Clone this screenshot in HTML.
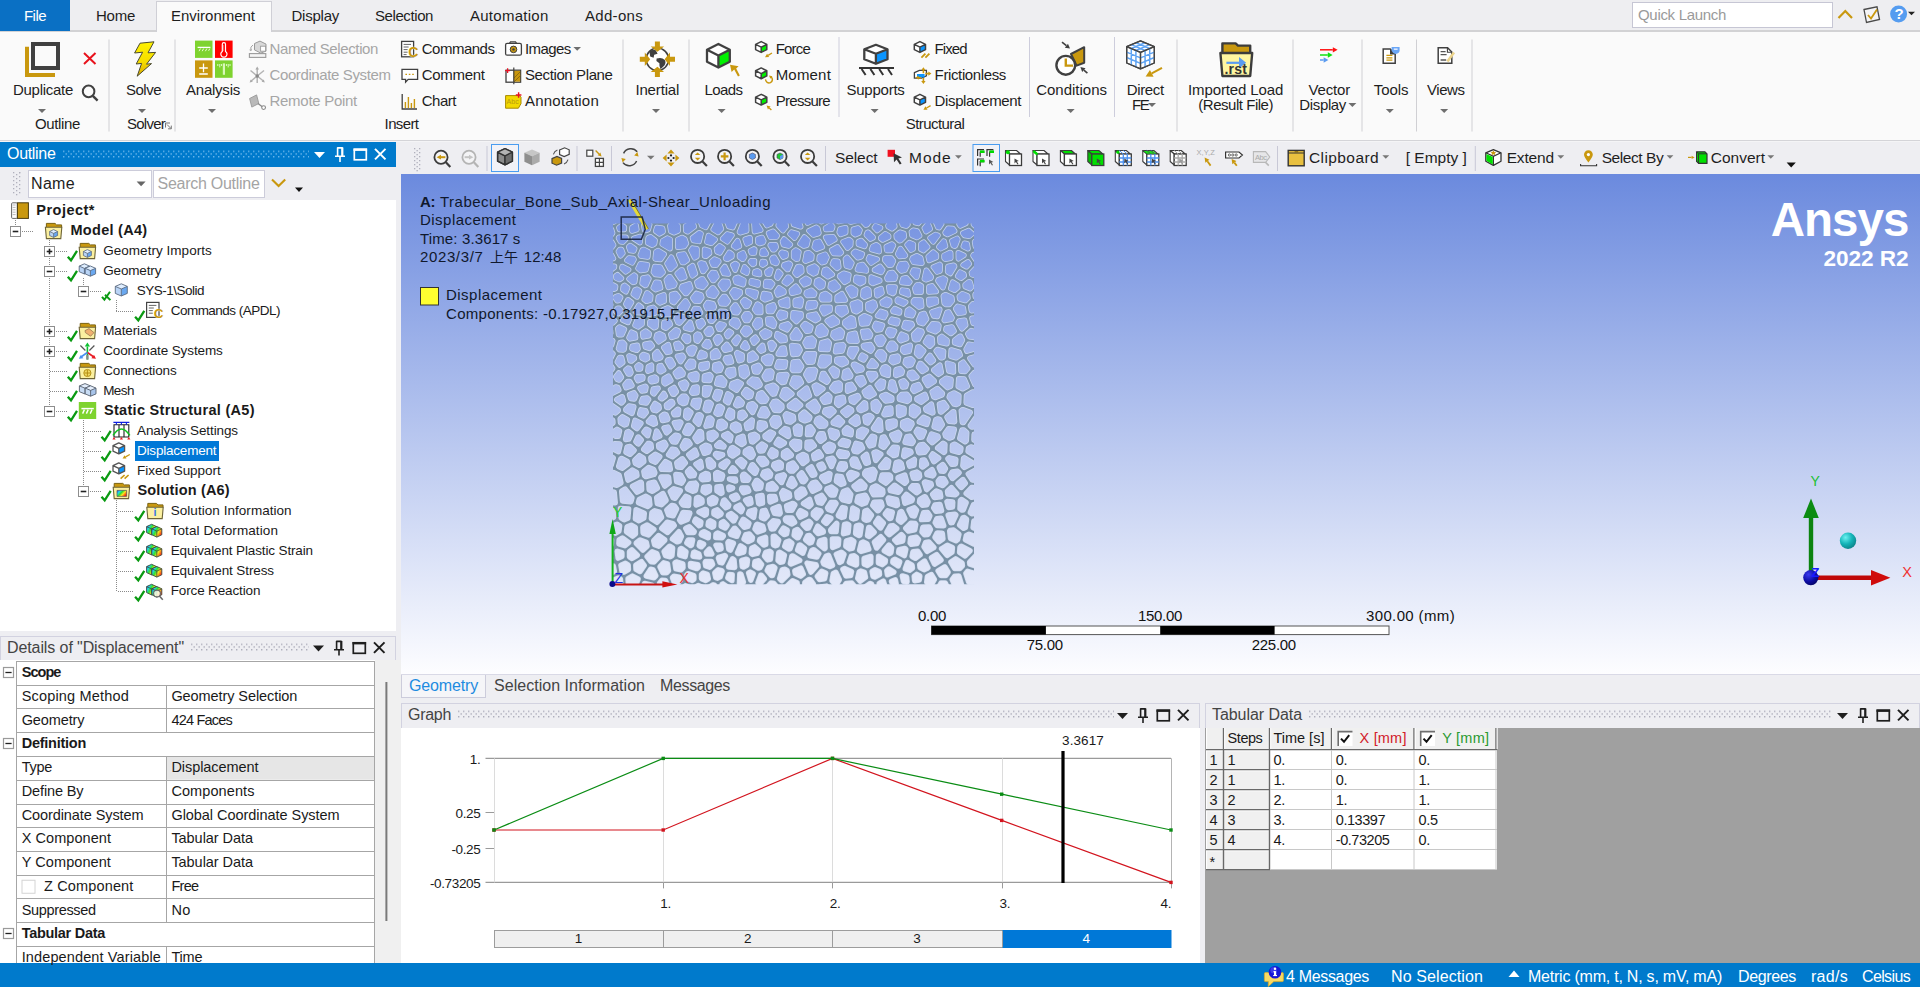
<!DOCTYPE html>
<html lang="en"><head><meta charset="utf-8"><title>Mechanical</title>
<style>
html,body{margin:0;padding:0;background:#eeeef2;}
body{width:1920px;height:987px;overflow:hidden;position:relative;font-family:"Liberation Sans","Noto Sans CJK TC",sans-serif;}
#app{position:absolute;left:0;top:0;width:1920px;height:987px;overflow:hidden;background:#eeeef2;}
.t{position:absolute;white-space:pre;margin:0;padding:0;}
.r{position:absolute;margin:0;padding:0;overflow:visible;}
</style></head><body><div id="app">
<div class="r" style="left:0px;top:0px;width:1920px;height:30px;background:#eeeef1;"></div>
<div class="r" style="left:0px;top:30px;width:1920px;height:2px;background:#d2d2d4;"></div>
<div class="r" style="left:0px;top:32px;width:1920px;height:108px;background:#fafafa;"></div>
<div class="r" style="left:0px;top:140px;width:1920px;height:1px;background:#d4d4d8;"></div>
<div class="r" style="left:0px;top:141px;width:1920px;height:1px;background:#f4f4f6;"></div>
<div class="r" style="left:0px;top:142px;width:396px;height:25px;background:#007acc;"></div>
<div class="r" style="left:0px;top:167px;width:396px;height:33px;background:#eeeef2;"></div>
<div class="r" style="left:0px;top:200px;width:396px;height:431px;background:#ffffff;"></div>
<div class="r" style="left:0px;top:631px;width:400px;height:5px;background:#eeeef2;"></div>
<div class="r" style="left:0px;top:636px;width:396px;height:25px;background:#eeeef2;border:1px solid #d2d2e0;box-sizing:border-box;border-bottom:none;"></div>
<div class="r" style="left:0px;top:660px;width:375px;height:303px;background:#ffffff;"></div>
<div class="r" style="left:375px;top:660px;width:26px;height:303px;background:#f0f0f0;"></div>
<div class="r" style="left:396px;top:142px;width:1524px;height:33px;background:#eeeef2;"></div>
<div class="r" style="left:401px;top:174px;width:1519px;height:500px;background:linear-gradient(to bottom,#6b8ade 0%,#fdfdff 100%);"></div>
<div class="r" style="left:401px;top:674px;width:1519px;height:30px;background:#eeeef2;"></div>
<div class="r" style="left:401px;top:674px;width:1519px;height:1px;background:#d9d9e6;"></div>
<div class="r" style="left:401px;top:703px;width:799px;height:25px;background:#eeeef2;border:1px solid #d2d2e0;box-sizing:border-box;border-bottom:none;"></div>
<div class="r" style="left:401px;top:728px;width:799px;height:235px;background:#ffffff;"></div>
<div class="r" style="left:1205px;top:703px;width:715px;height:25px;background:#eeeef2;border:1px solid #d2d2e0;box-sizing:border-box;border-bottom:none;"></div>
<div class="r" style="left:1205px;top:728px;width:715px;height:235px;background:#a0a0a0;"></div>
<div class="r" style="left:0px;top:963px;width:1920px;height:24px;background:#007acc;"></div>
<div class="t" style="left:7.00px;top:143.95px;font-size:16px;line-height:19px;color:#ffffff;letter-spacing:-0.314px;">Outline</div>
<svg class="r" style="left:63px;top:149.5px;" width="246" height="8" viewBox="0 0 246 8"><defs><pattern id="dp1" x="0" y="0.60" width="5" height="5.4" patternUnits="userSpaceOnUse"><rect x="0" y="0" width="1.4" height="1.4" fill="#6ab6ec"/><rect x="2.5" y="2.7" width="1.4" height="1.4" fill="#6ab6ec"/></pattern></defs><rect x="0" y="0" width="246" height="8" fill="url(#dp1)"/></svg>
<svg class="r" style="left:314px;top:0px;pointer-events:none;" width="80" height="1000" viewBox="0 0 80 1000"><path d="M0 152 h11 l-5.5 6z" fill="#ffffff"/><g stroke="#ffffff" fill="none" stroke-width="1.6"><path d="M23.6 147.5 v8.5 M28.2 147.5 v8.5 M23.2 147.9 h5.4 M21 156.3 h10 M26 156.5 v5.5"/></g><rect x="27.4" y="147.5" width="2" height="8.5" fill="#ffffff"/><rect x="40.3" y="149.3" width="12" height="10.5" fill="none" stroke="#ffffff" stroke-width="1.7"/><rect x="39.5" y="148.5" width="13.6" height="2.4" fill="#ffffff"/><path d="M61 148.9 l10.5 10.5 M71.5 148.9 l-10.5 10.5" stroke="#ffffff" stroke-width="2" fill="none"/></svg>
<div class="t" style="left:7.00px;top:637.95px;font-size:16px;line-height:19px;color:#444444;letter-spacing:-0.097px;">Details of "Displacement"</div>
<svg class="r" style="left:191px;top:643px;" width="118" height="8" viewBox="0 0 118 8"><defs><pattern id="dp2" x="0" y="0.60" width="5" height="5.4" patternUnits="userSpaceOnUse"><rect x="0" y="0" width="1.4" height="1.4" fill="#adadbb"/><rect x="2.5" y="2.7" width="1.4" height="1.4" fill="#adadbb"/></pattern></defs><rect x="0" y="0" width="118" height="8" fill="url(#dp2)"/></svg>
<svg class="r" style="left:313px;top:0px;pointer-events:none;" width="80" height="1000" viewBox="0 0 80 1000"><path d="M0 645.5 h11 l-5.5 6z" fill="#1e1e1e"/><g stroke="#1e1e1e" fill="none" stroke-width="1.6"><path d="M23.6 641 v8.5 M28.2 641 v8.5 M23.2 641.4 h5.4 M21 649.8 h10 M26 650 v5.5"/></g><rect x="27.4" y="641" width="2" height="8.5" fill="#1e1e1e"/><rect x="40.3" y="642.8" width="12" height="10.5" fill="none" stroke="#1e1e1e" stroke-width="1.7"/><rect x="39.5" y="642" width="13.6" height="2.4" fill="#1e1e1e"/><path d="M61 642.4 l10.5 10.5 M71.5 642.4 l-10.5 10.5" stroke="#1e1e1e" stroke-width="2" fill="none"/></svg>
<div class="t" style="left:408.00px;top:705.45px;font-size:16px;line-height:19px;color:#444444;letter-spacing:-0.294px;">Graph</div>
<svg class="r" style="left:458px;top:710px;" width="656" height="8" viewBox="0 0 656 8"><defs><pattern id="dp3" x="0" y="0.60" width="5" height="5.4" patternUnits="userSpaceOnUse"><rect x="0" y="0" width="1.4" height="1.4" fill="#adadbb"/><rect x="2.5" y="2.7" width="1.4" height="1.4" fill="#adadbb"/></pattern></defs><rect x="0" y="0" width="656" height="8" fill="url(#dp3)"/></svg>
<svg class="r" style="left:1117px;top:0px;pointer-events:none;" width="80" height="1000" viewBox="0 0 80 1000"><path d="M0 713 h11 l-5.5 6z" fill="#1e1e1e"/><g stroke="#1e1e1e" fill="none" stroke-width="1.6"><path d="M23.6 708.5 v8.5 M28.2 708.5 v8.5 M23.2 708.9 h5.4 M21 717.3 h10 M26 717.5 v5.5"/></g><rect x="27.4" y="708.5" width="2" height="8.5" fill="#1e1e1e"/><rect x="40.3" y="710.3" width="12" height="10.5" fill="none" stroke="#1e1e1e" stroke-width="1.7"/><rect x="39.5" y="709.5" width="13.6" height="2.4" fill="#1e1e1e"/><path d="M61 709.9 l10.5 10.5 M71.5 709.9 l-10.5 10.5" stroke="#1e1e1e" stroke-width="2" fill="none"/></svg>
<div class="t" style="left:1212.00px;top:705.45px;font-size:16px;line-height:19px;color:#444444;letter-spacing:-0.060px;">Tabular Data</div>
<svg class="r" style="left:1309px;top:710px;" width="522" height="8" viewBox="0 0 522 8"><defs><pattern id="dp4" x="0" y="0.60" width="5" height="5.4" patternUnits="userSpaceOnUse"><rect x="0" y="0" width="1.4" height="1.4" fill="#adadbb"/><rect x="2.5" y="2.7" width="1.4" height="1.4" fill="#adadbb"/></pattern></defs><rect x="0" y="0" width="522" height="8" fill="url(#dp4)"/></svg>
<svg class="r" style="left:1837px;top:0px;pointer-events:none;" width="80" height="1000" viewBox="0 0 80 1000"><path d="M0 713 h11 l-5.5 6z" fill="#1e1e1e"/><g stroke="#1e1e1e" fill="none" stroke-width="1.6"><path d="M23.6 708.5 v8.5 M28.2 708.5 v8.5 M23.2 708.9 h5.4 M21 717.3 h10 M26 717.5 v5.5"/></g><rect x="27.4" y="708.5" width="2" height="8.5" fill="#1e1e1e"/><rect x="40.3" y="710.3" width="12" height="10.5" fill="none" stroke="#1e1e1e" stroke-width="1.7"/><rect x="39.5" y="709.5" width="13.6" height="2.4" fill="#1e1e1e"/><path d="M61 709.9 l10.5 10.5 M71.5 709.9 l-10.5 10.5" stroke="#1e1e1e" stroke-width="2" fill="none"/></svg>
<div class="r" style="left:401px;top:675px;width:85px;height:23px;background:#f5f5f8;border:1px solid #ccccdb;box-sizing:border-box;border-top:none;"></div>
<div class="t" style="left:409.00px;top:675.95px;font-size:16px;line-height:19px;color:#1e8be0;letter-spacing:-0.155px;">Geometry</div>
<div class="t" style="left:494.00px;top:675.95px;font-size:16px;line-height:19px;color:#444444;letter-spacing:0.033px;">Selection Information</div>
<div class="t" style="left:660.00px;top:675.95px;font-size:16px;line-height:19px;color:#444444;letter-spacing:-0.365px;">Messages</div>
<div class="t" style="left:1286.00px;top:966.95px;font-size:16px;line-height:19px;color:#ffffff;letter-spacing:-0.327px;">4 Messages</div>
<div class="t" style="left:1391.00px;top:966.95px;font-size:16px;line-height:19px;color:#ffffff;letter-spacing:0.107px;">No Selection</div>
<div class="t" style="left:1528.00px;top:966.95px;font-size:16px;line-height:19px;color:#ffffff;letter-spacing:-0.225px;">Metric (mm, t, N, s, mV, mA)</div>
<div class="t" style="left:1738.00px;top:966.95px;font-size:16px;line-height:19px;color:#ffffff;letter-spacing:-0.354px;">Degrees</div>
<div class="t" style="left:1811.00px;top:966.95px;font-size:16px;line-height:19px;color:#ffffff;letter-spacing:0.286px;">rad/s</div>
<div class="t" style="left:1862.00px;top:966.95px;font-size:16px;line-height:19px;color:#ffffff;letter-spacing:-0.637px;">Celsius</div>
<svg class="r" style="left:1508px;top:969px;" width="12" height="10" viewBox="0 0 12 10"><path d="M0.5 8 L6 1.5 L11.5 8z" fill="#fff"/></svg>
<svg class="r" style="left:1260px;top:963px;" width="28" height="24" viewBox="1260 963 28 24"><path d="M1265.6 972.6 h16.6 q1.2 0 1.2 1.2 v6.6 q0 1.2-1.2 1.2 h-8.4 l-5.6 5 l0.2-5 h-2.8 q-1.2 0-1.2-1.2 v-6.6 q0-1.2 1.2-1.2z" fill="#f7d964" stroke="#d8ac2c" stroke-width="0.8"/><circle cx="1275" cy="972.2" r="6.3" fill="#1616d6"/><circle cx="1273.6" cy="970.2" r="3.2" fill="#4a4af0" fill-opacity="0.7"/><rect x="1274" y="971.2" width="2.2" height="4.6" fill="#fff"/><rect x="1273.2" y="975" width="3.8" height="1.1" fill="#fff"/><rect x="1273.4" y="971.2" width="2" height="1" fill="#fff"/><circle cx="1275" cy="968.8" r="1.25" fill="#fff"/></svg>
<div class="r" style="left:0px;top:0px;width:70px;height:30.5px;background:#0a70c4;"></div>
<div class="r" style="left:156px;top:1px;width:116px;height:31px;background:#fafafa;border:1px solid #cfcfd6;box-sizing:border-box;border-bottom:none;"></div>
<svg class="r" style="left:0px;top:0px;" width="1920" height="141" viewBox="0 0 1920 141"><path d="M1838.5 18 L1845.3 11 L1852 18" fill="none" stroke="#c9980f" stroke-width="2.2"/><path d="M1864 9.5 L1877 6.8 L1879.5 19.5 L1866.5 22.5 Z" fill="#f4f4f6" stroke="#4a4a4a" stroke-width="1.3"/><path d="M1868 15 l3 3.5 l6-9" fill="none" stroke="#c9980f" stroke-width="1.8"/><circle cx="1898.6" cy="14" r="8.5" fill="#559cf0"/><path d="M1908.00 11.75 h7 l-3.5 3.5 z" fill="#222"/><rect x="108.5" y="39.5" width="1" height="92" fill="#d0d0d4"/><rect x="174.5" y="39.5" width="1" height="92" fill="#d0d0d4"/><rect x="622.5" y="39.5" width="1" height="92" fill="#d0d0d4"/><rect x="688.5" y="39.5" width="1" height="92" fill="#d0d0d4"/><rect x="1176.5" y="39.5" width="1" height="92" fill="#d0d0d4"/><rect x="1292.5" y="39.5" width="1" height="92" fill="#d0d0d4"/><rect x="1361.5" y="39.5" width="1" height="92" fill="#d0d0d4"/><rect x="1416" y="39.5" width="1" height="92" fill="#d0d0d4"/><rect x="1471.5" y="39.5" width="1" height="92" fill="#d0d0d4"/><rect x="838.5" y="37" width="1" height="80" fill="#cdcddc"/><rect x="1029" y="37" width="1" height="80" fill="#cdcddc"/><rect x="1114" y="37" width="1" height="80" fill="#cdcddc"/><path d="M27 46.8 V75 H55" fill="none" stroke="#c9980f" stroke-width="4"/><rect x="33" y="44" width="25" height="24" fill="#fafafa" stroke="#404040" stroke-width="4"/><path d="M38.00 109.00 h8 l-4 4 z" fill="#6e6e6e"/><path d="M84 53 L95.5 64 M95.5 53 L84 64" stroke="#e8121c" stroke-width="2"/><circle cx="88.6" cy="91.4" r="5.8" fill="none" stroke="#404040" stroke-width="2"/><path d="M92.8 95.8 L97.6 100.6" stroke="#404040" stroke-width="2.4"/><defs><linearGradient id="bolt" x1="0" y1="0" x2="0" y2="1"><stop offset="0" stop-color="#fff200"/><stop offset="0.6" stop-color="#f5dc00"/><stop offset="1" stop-color="#d9a800"/></linearGradient></defs><path d="M140 43.2 L154 41.8 L148 52.8 L155.6 52.4 L146.5 64.2 L151.5 63.6 L137.2 76.2 L141.6 63.4 L136.2 64 L142.6 52.2 L134.6 53 Z" fill="url(#bolt)" stroke="#4a4a30" stroke-width="1"/><path d="M138.00 109.00 h8 l-4 4 z" fill="#6e6e6e"/><path d="M165.5 123 h4.5 M165.5 123 v4.5 M167 124.5 l4 4 M171.3 125.6 v3.2 h-3.2" stroke="#777" stroke-width="1" fill="none"/><rect x="195" y="40.6" width="17.5" height="17.3" fill="#7ed32f"/><rect x="215" y="40.6" width="17.6" height="17.3" fill="#ff0000"/><rect x="195" y="60.4" width="17.5" height="17.4" fill="#c9980f"/><rect x="215" y="60.4" width="17.6" height="17.4" fill="#7ed32f"/><path d="M197.6 47.4 H210.4" stroke="#fff" stroke-width="1.3"/><path d="M200.4 48.6 l-1.4 2.6 M203.6 48.6 l-1.4 2.6 M206.8 48.6 l-1.4 2.6 M209.8 48.6 l-1.2 2.2" stroke="#e8ffd0" stroke-width="1"/><path d="M222.3 44.2 a1.6 1.6 0 0 1 3.2 0 v7.2 a3.1 3.1 0 1 1 -3.2 0 Z" fill="none" stroke="#fff" stroke-width="1.2"/><path d="M222.5 46 h1.3 M222.5 48 h1.3 M222.5 50 h1.3" stroke="#fff" stroke-width="0.8"/><path d="M199.2 68 h8.6 M203.5 63.6 v8.6 M199.2 74 h8.6" stroke="#fff" stroke-width="1.3"/><path d="M223.9 63.4 v11.4" stroke="#d8f8b8" stroke-width="2.2"/><path d="M217.8 64 v2 M219.8 64 v3.4 M221.6 64 v2 M226.4 64 v2 M228.2 64 v3.4 M230 64 v2" stroke="#e8ffd8" stroke-width="0.9"/><path d="M208.00 109.00 h8 l-4 4 z" fill="#6e6e6e"/><path d="M254.5 43.5 l5.5-2.4 l6 3 v7 l-5.2 2 l-6.3-3.2 Z" fill="#d8d8d8" stroke="#9a9a9a" stroke-width="1"/><rect x="260.6" y="46.2" width="5" height="5" fill="#fff" stroke="#9a9a9a" stroke-width="0.9"/><rect x="249.4" y="53.6" width="16.4" height="3.8" fill="#f4f4f4" stroke="#9a9a9a" stroke-width="1.1"/><path d="M253 45 q-3 1.5 -2.2 5.5 l-1.2-.6 M250.8 50.5 l1.2-1" stroke="#9a9a9a" stroke-width="0.9" fill="none"/><g stroke="#b4b4b4" stroke-width="1.5"><path d="M257.2 68 V83 M250.5 70.5 L264 81.5 M264 70.5 L250.5 81.5"/></g><circle cx="257.2" cy="76" r="1.8" fill="#888"/><path d="M257.2 66.6 l-1.8 3 h3.6z M249.6 82.4 l3.2-.6 l-2-2.2z M264.8 82.4 l-3.2-.6 l2-2.2z" fill="#aaa"/><path d="M249.6 98.5 l7-3.6 l2.2 8.6 l-7 3.6 Z" fill="#b9b9b9" stroke="#999" stroke-width="0.9"/><path d="M258 103.5 l4.6 3.4" stroke="#888" stroke-width="1.2"/><circle cx="263.6" cy="107.6" r="1.9" fill="#fff" stroke="#888" stroke-width="1.1"/><rect x="401.6" y="41.4" width="12" height="15.4" fill="#fff" stroke="#404040" stroke-width="1.3"/><path d="M403.6 44.4 h7.4 M403.6 47 h5 M403.6 49.6 h4 M403.6 52.2 h4 M403.6 54.6 h3" stroke="#666" stroke-width="1"/><path d="M402 69.4 h15.6 v10 h-9.4 l-2.6 2.8 v-2.8 h-3.6 Z" fill="#fff" stroke="#404040" stroke-width="1.3"/><path d="M405.4 74.4 h1.6 M408.8 74.4 h1.6 M412.2 74.4 h1.6" stroke="#c9980f" stroke-width="1.3"/><path d="M402.2 94 V109 H417" fill="none" stroke="#404040" stroke-width="1.3"/><path d="M405.4 108 v-6 M408.4 108 v-11 M411.4 108 v-5 M414.4 108 v-9" stroke="#c9980f" stroke-width="1.4"/><rect x="505.6" y="43.4" width="15.8" height="11.8" rx="1.5" fill="#fff" stroke="#404040" stroke-width="1.3"/><path d="M509.5 43.4 l1-1.6 h5 l1 1.6" fill="none" stroke="#404040" stroke-width="1.2"/><circle cx="513.5" cy="49.4" r="3.3" fill="#c9980f" stroke="#404040" stroke-width="1"/><circle cx="513.5" cy="49.4" r="1.2" fill="#404040"/><path d="M573.40 46.90 h7.6 l-3.8 3.8 z" fill="#6e6e6e"/><rect x="506" y="70.2" width="14.6" height="12" fill="#fff" stroke="#404040" stroke-width="1.3"/><path d="M513.6 70.8 h6.6 v10.8 h-6.6z" fill="#c9980f"/><path d="M514 78 l6-6 M514 82 l6.4-6.4" stroke="#8a6a10" stroke-width="0.9"/><path d="M513.8 67.4 v16.8" stroke="#404040" stroke-width="1.2"/><path d="M505.2 70.6 h4.8 M507.6 68.2 v4.8" stroke="#e81123" stroke-width="1.3"/><path d="M505.6 95.6 h14 l1.4 1.6 v6.4 l-2.6 4.6 h-12.8 Z" fill="#f2d800" stroke="#a88a00" stroke-width="1"/><path d="M518.6 92.2 v5.6 M515.8 95 h5.6" stroke="#e81123" stroke-width="1.4"/><circle cx="657.4" cy="59.3" r="11.2" fill="#fff" stroke="#404040" stroke-width="1.5"/><path d="M649.4 51.6 q3-2.6 6.4-1.4 l1.8 3.6 l-3.4 1 l-.6 3 l-3.4-1.2 Z M656.6 58.6 q5-1.8 8.2 1.4 q1.6 2.4-.4 5.4 l-3.8 3.8 q-1.6-3.2-1.2-6 l-3-2.2 Z" fill="#404040"/><path d="M654.9 41.4 h5 v5 h4.2 l-6.7 5.4 l-6.7-5.4 h4.2 Z" fill="#c9980f"/><path d="M654.9 77 h5 v-5 h4.2 l-6.7-5.2 l-6.7 5.2 h4.2 Z" fill="#c9980f"/><path d="M639.8 56.8 v5 h5 v4.2 l5.4-6.7 l-5.4-6.7 v4.2 Z" fill="#c9980f"/><path d="M675 56.8 v5 h-5 v4.2 l-5.4-6.7 l5.4-6.7 v4.2 Z" fill="#c9980f"/><path d="M652.00 109.00 h8 l-4 4 z" fill="#6e6e6e"/><path d="M718.40 44.00 L729.80 49.80 L729.80 61.80 L718.40 67.60 L707.00 61.80 L707.00 49.80 Z" fill="#ffffff"/><path d="M718.40 55.60 L729.80 49.80 L729.80 61.80 L718.40 67.60 Z" fill="#00f000"/><path d="M718.40 44.00 L729.80 49.80 L729.80 61.80 L718.40 67.60 L707.00 61.80 L707.00 49.80 Z M707.00 49.80 L718.40 55.60 M729.80 49.80 L718.40 55.60 M718.40 55.60 L718.40 67.60" fill="none" stroke="#404040" stroke-width="2.3" stroke-linejoin="round"/><path d="M730 64.8 l8.6 1.4 l-2.4 2.2 l3.6 7.2 l-1.8 1 l-3.8-7 l-2.6 2.4 Z" fill="#c9980f"/><path d="M717.60 109.00 h8 l-4 4 z" fill="#6e6e6e"/><path d="M761.20 41.60 L766.80 44.40 L766.80 49.60 L761.20 52.40 L755.60 49.60 L755.60 44.40 Z" fill="#ffffff"/><path d="M761.20 47.20 L766.80 44.40 L766.80 49.60 L761.20 52.40 Z" fill="#00f000"/><path d="M761.20 41.60 L766.80 44.40 L766.80 49.60 L761.20 52.40 L755.60 49.60 L755.60 44.40 Z M755.60 44.40 L761.20 47.20 M766.80 44.40 L761.20 47.20 M761.20 47.20 L761.20 52.40" fill="none" stroke="#404040" stroke-width="1.5" stroke-linejoin="round"/><path d="M761.20 67.95 L766.80 70.75 L766.80 75.95 L761.20 78.75 L755.60 75.95 L755.60 70.75 Z" fill="#ffffff"/><path d="M761.20 73.55 L766.80 70.75 L766.80 75.95 L761.20 78.75 Z" fill="#00f000"/><path d="M761.20 67.95 L766.80 70.75 L766.80 75.95 L761.20 78.75 L755.60 75.95 L755.60 70.75 Z M755.60 70.75 L761.20 73.55 M766.80 70.75 L761.20 73.55 M761.20 73.55 L761.20 78.75" fill="none" stroke="#404040" stroke-width="1.5" stroke-linejoin="round"/><path d="M761.20 94.30 L766.80 97.10 L766.80 102.30 L761.20 105.10 L755.60 102.30 L755.60 97.10 Z" fill="#ffffff"/><path d="M761.20 99.90 L766.80 97.10 L766.80 102.30 L761.20 105.10 Z" fill="#00f000"/><path d="M761.20 94.30 L766.80 97.10 L766.80 102.30 L761.20 105.10 L755.60 102.30 L755.60 97.10 Z M755.60 97.10 L761.20 99.90 M766.80 97.10 L761.20 99.90 M761.20 99.90 L761.20 105.10" fill="none" stroke="#404040" stroke-width="1.5" stroke-linejoin="round"/><path d="M772.00 53.00 L768.09 55.35" stroke="#c9980f" stroke-width="1.3" fill="none"/><path d="M765.00 57.20 L767.07 53.65 L769.11 57.05 Z" fill="#c9980f"/><path d="M765.6 79.4 a3.4 3.4 0 1 0 5.4-2.6" fill="none" stroke="#c9980f" stroke-width="1.5"/><path d="M769 75.4 l3.4.8 l-2 2.6z" fill="#c9980f"/><path d="M771.40 110.00 L769.25 108.03" stroke="#c9980f" stroke-width="1.3" fill="none"/><path d="M766.60 105.60 L770.59 106.57 L767.92 109.49 Z" fill="#c9980f"/><path d="M875.90 44.80 L887.50 49.30 L887.50 59.30 L875.90 63.80 L864.30 59.30 L864.30 49.30 Z" fill="#ffffff"/><path d="M875.90 53.80 L887.50 49.30 L887.50 59.30 L875.90 63.80 Z" fill="#0a95ff"/><path d="M875.90 44.80 L887.50 49.30 L887.50 59.30 L875.90 63.80 L864.30 59.30 L864.30 49.30 Z M864.30 49.30 L875.90 53.80 M887.50 49.30 L875.90 53.80 M875.90 53.80 L875.90 63.80" fill="none" stroke="#404040" stroke-width="2.3" stroke-linejoin="round"/><path d="M859 68 H894" stroke="#333" stroke-width="2.2"/><path d="M861.6 69 l4 6 M870.4 69 l4 6 M879.2 69 l4 6 M888 69 l4 6" stroke="#333" stroke-width="2"/><path d="M870.60 109.00 h8 l-4 4 z" fill="#6e6e6e"/><path d="M919.90 41.60 L925.50 44.40 L925.50 49.60 L919.90 52.40 L914.30 49.60 L914.30 44.40 Z" fill="#ffffff"/><path d="M919.90 47.20 L925.50 44.40 L925.50 49.60 L919.90 52.40 Z" fill="#0a95ff"/><path d="M919.90 41.60 L925.50 44.40 L925.50 49.60 L919.90 52.40 L914.30 49.60 L914.30 44.40 Z M914.30 44.40 L919.90 47.20 M925.50 44.40 L919.90 47.20 M919.90 47.20 L919.90 52.40" fill="none" stroke="#404040" stroke-width="1.5" stroke-linejoin="round"/><path d="M921.4 57.6 l4-4 M925.4 57.6 l4-4" stroke="#c9980f" stroke-width="1.8"/><path d="M914.4 72.6 l5-2.2 h7 v5.4 l-5 2.4 h-7 Z" fill="#fff" stroke="#404040" stroke-width="1.3"/><path d="M917 74 h7.6 v3.4 h-7.6z" fill="#0a95ff"/><path d="M923.4 67.2 l2.2 3 h-1.4 v3 h-1.6 v-3 h-1.4 Z M923.4 84 l2.2-3 h-1.4 v-3 h-1.6 v3 h-1.4 Z M931.4 73.6 l-3-2.2 v1.4 h-3 v1.6 h3 v1.4 Z M915.6 77.6 l3-2 v1.3 h2.6 v1.5 h-2.6 v1.3 Z" fill="#c9980f"/><path d="M919.90 94.30 L925.50 97.10 L925.50 102.30 L919.90 105.10 L914.30 102.30 L914.30 97.10 Z" fill="#ffffff"/><path d="M919.90 99.90 L925.50 97.10 L925.50 102.30 L919.90 105.10 Z" fill="#0a95ff"/><path d="M919.90 94.30 L925.50 97.10 L925.50 102.30 L919.90 105.10 L914.30 102.30 L914.30 97.10 Z M914.30 97.10 L919.90 99.90 M925.50 97.10 L919.90 99.90 M919.90 99.90 L919.90 105.10" fill="none" stroke="#404040" stroke-width="1.5" stroke-linejoin="round"/><path d="M930.60 105.60 L926.51 107.99" stroke="#c9980f" stroke-width="1.3" fill="none"/><path d="M923.40 109.80 L925.51 106.28 L927.51 109.70 Z" fill="#c9980f"/><path d="M1071 54 L1084.2 47.2 V62.8 L1076.6 65.6 Z" fill="#c9980f" stroke="#404040" stroke-width="2" stroke-linejoin="round"/><circle cx="1065.8" cy="65.3" r="9.4" fill="#fff" stroke="#404040" stroke-width="2.4"/><path d="M1065.8 58.6 V65.6 H1073" fill="none" stroke="#c9980f" stroke-width="2.4"/><path d="M1062.00 42.20 L1066.41 45.73" stroke="#404040" stroke-width="1.6" fill="none"/><path d="M1070.00 48.60 L1064.83 47.70 L1067.99 43.75 Z" fill="#404040"/><path d="M1087.40 73.20 L1083.84 70.05" stroke="#404040" stroke-width="1.6" fill="none"/><path d="M1080.40 67.00 L1085.52 68.16 L1082.17 71.94 Z" fill="#404040"/><path d="M1066.70 109.00 h8 l-4 4 z" fill="#6e6e6e"/><path d="M1140.50 40.80 L1154.30 46.60 L1154.30 63.00 L1140.50 68.80 L1126.70 63.00 L1126.70 46.60 Z" fill="#ffffff"/><path d="M1140.50 40.80 L1154.30 46.60 L1154.30 63.00 L1140.50 68.80 L1126.70 63.00 L1126.70 46.60 Z M1126.70 46.60 L1140.50 52.40 M1154.30 46.60 L1140.50 52.40 M1140.50 52.40 L1140.50 68.80" fill="none" stroke="#444" stroke-width="1.3" stroke-linejoin="round"/><path d="M1131.30 48.53 L1131.30 64.93 M1126.70 52.07 L1140.50 57.87 M1145.10 50.47 L1145.10 66.87 M1140.50 57.87 L1154.30 52.07 M1131.30 44.67 L1145.10 50.47 M1131.30 48.53 L1145.10 42.73 M1135.90 50.47 L1135.90 66.87 M1126.70 57.53 L1140.50 63.33 M1149.70 48.53 L1149.70 64.93 M1140.50 63.33 L1154.30 57.53 M1135.90 42.73 L1149.70 48.53 M1135.90 50.47 L1149.70 44.67 " stroke="#5ea3f3" stroke-width="1.5" fill="none"/><path d="M1140.50 40.80 L1154.30 46.60 L1154.30 63.00 L1140.50 68.80 L1126.70 63.00 L1126.70 46.60 Z" fill="none"/><path d="M1140.50 40.80 L1154.30 46.60 L1154.30 63.00 L1140.50 68.80 L1126.70 63.00 L1126.70 46.60 Z M1126.70 46.60 L1140.50 52.40 M1154.30 46.60 L1140.50 52.40 M1140.50 52.40 L1140.50 68.80" fill="none" stroke="#444" stroke-width="1.3" stroke-linejoin="round"/><path d="M1162.00 67.80 L1151.77 73.29" stroke="#c9980f" stroke-width="2" fill="none"/><path d="M1145.60 76.60 L1149.95 69.90 L1153.59 76.68 Z" fill="#c9980f"/><path d="M1148.00 103.00 h8 l-4 4 z" fill="#6e6e6e"/><path d="M1222.4 52.8 V43.4 H1235.6 L1238 45.6 H1250.2 V52.8" fill="#c9980f" stroke="#3c3c3c" stroke-width="2.4" stroke-linejoin="round"/><path d="M1220.4 53 H1252.2 L1250.2 76 H1222.4 Z" fill="#fff6a0" stroke="#3c3c3c" stroke-width="2.4" stroke-linejoin="round"/><path d="M1226.4 62.8 H1240" stroke="#5a9bf0" stroke-width="2.2"/><path d="M1239 57 L1246.2 62.8 L1239 68.6 Z" fill="#5a9bf0"/><path d="M1320.00 49.80 L1332.80 49.80" stroke="#ff1010" stroke-width="1.5" fill="none"/><path d="M1337.60 49.80 L1332.80 52.44 L1332.80 47.16 Z" fill="#ff1010"/><path d="M1320.00 55.00 L1327.80 55.00" stroke="#10e010" stroke-width="1.5" fill="none"/><path d="M1332.60 55.00 L1327.80 57.64 L1327.80 52.36 Z" fill="#10e010"/><path d="M1320.00 60.00 L1323.60 60.00" stroke="#5a9bf0" stroke-width="1.5" fill="none"/><path d="M1328.40 60.00 L1323.60 62.64 L1323.60 57.36 Z" fill="#5a9bf0"/><path d="M1348.40 103.00 h8 l-4 4 z" fill="#6e6e6e"/><path d="M1383.2 49 h7 l5 5 v9.2 h-12 Z" fill="#fff" stroke="#404040" stroke-width="1.5"/><path d="M1390 49 v5.4 h5.4 Z" fill="#404040"/><path d="M1386.4 55.4 h6 M1386.4 57.8 h6 M1386.4 60.2 h6" stroke="#c9980f" stroke-width="1.2"/><path d="M1391.6 47 h8 v3.6 q0 2.6-4 3.4 q-1.6-.4-2.6-1.2 l-1.4-2 Z" fill="#6aa6f6"/><path d="M1393.8 48.4 h3.8 v1.6 h-3.8z" fill="#dce9ff"/><path d="M1385.80 109.00 h8 l-4 4 z" fill="#6e6e6e"/><path d="M1438.2 47.8 h9.4 l4.2 4.2 v11.2 h-13.6 Z" fill="#fff" stroke="#404040" stroke-width="1.5"/><path d="M1447.4 48 v4.2 h4.2" fill="none" stroke="#404040" stroke-width="1.1"/><path d="M1440.6 51.6 h5 M1440.6 54.6 h6 M1440.6 60 h5.6" stroke="#555" stroke-width="1.3"/><path d="M1454 52.6 L1447.4 61.6" stroke="#ecd48c" stroke-width="2.6"/><path d="M1440.20 109.00 h8 l-4 4 z" fill="#6e6e6e"/></svg>
<div class="t" style="left:24.00px;top:6.80px;font-size:15px;line-height:18px;color:#ffffff;letter-spacing:-0.543px;">File</div>
<div class="t" style="left:96.00px;top:6.80px;font-size:15px;line-height:18px;color:#1e1e1e;letter-spacing:-0.253px;">Home</div>
<div class="t" style="left:171.00px;top:6.80px;font-size:15px;line-height:18px;color:#1e1e1e;letter-spacing:-0.019px;">Environment</div>
<div class="t" style="left:291.50px;top:6.80px;font-size:15px;line-height:18px;color:#1e1e1e;letter-spacing:-0.241px;">Display</div>
<div class="t" style="left:375.00px;top:6.80px;font-size:15px;line-height:18px;color:#1e1e1e;letter-spacing:-0.412px;">Selection</div>
<div class="t" style="left:470.00px;top:6.80px;font-size:15px;line-height:18px;color:#1e1e1e;letter-spacing:0.262px;">Automation</div>
<div class="t" style="left:585.00px;top:6.80px;font-size:15px;line-height:18px;color:#1e1e1e;letter-spacing:0.304px;">Add-ons</div>
<div class="r" style="left:1632px;top:2px;width:200.5px;height:26px;background:#ffffff;border:1px solid #c6c6d4;box-sizing:border-box;"></div>
<div class="t" style="left:1638.00px;top:6.20px;font-size:15px;line-height:18px;color:#9a9a9a;letter-spacing:-0.310px;">Quick Launch</div>
<div class="t" style="left:13.00px;top:81.20px;font-size:15px;line-height:18px;color:#1e1e1e;letter-spacing:-0.282px;">Duplicate</div>
<div class="t" style="left:35.00px;top:115.10px;font-size:15px;line-height:18px;color:#1e1e1e;letter-spacing:-0.361px;">Outline</div>
<div class="t" style="left:126.00px;top:81.20px;font-size:15px;line-height:18px;color:#1e1e1e;letter-spacing:-0.505px;">Solve</div>
<div class="t" style="left:127.00px;top:115.10px;font-size:15px;line-height:18px;color:#1e1e1e;letter-spacing:-0.753px;">Solver</div>
<div class="t" style="left:186.00px;top:81.20px;font-size:15px;line-height:18px;color:#1e1e1e;letter-spacing:-0.232px;">Analysis</div>
<div class="t" style="left:269.50px;top:39.60px;font-size:15px;line-height:18px;color:#a6a6a6;letter-spacing:-0.382px;">Named Selection</div>
<div class="t" style="left:269.50px;top:66.00px;font-size:15px;line-height:18px;color:#a6a6a6;letter-spacing:-0.386px;">Coordinate System</div>
<div class="t" style="left:269.50px;top:92.30px;font-size:15px;line-height:18px;color:#a6a6a6;letter-spacing:-0.282px;">Remote Point</div>
<div class="t" style="left:408.20px;top:44.25px;font-size:14px;line-height:17px;color:#c9980f;font-weight:bold;text-shadow:0 0 1px #f9f9f9,0 0 1px #f9f9f9;">C</div>
<div class="t" style="left:421.80px;top:39.60px;font-size:15px;line-height:18px;color:#1e1e1e;letter-spacing:-0.512px;">Commands</div>
<div class="t" style="left:421.80px;top:66.00px;font-size:15px;line-height:18px;color:#1e1e1e;letter-spacing:-0.303px;">Comment</div>
<div class="t" style="left:421.80px;top:92.30px;font-size:15px;line-height:18px;color:#1e1e1e;letter-spacing:-0.536px;">Chart</div>
<div class="t" style="left:525.00px;top:39.60px;font-size:15px;line-height:18px;color:#1e1e1e;letter-spacing:-0.598px;">Images</div>
<div class="t" style="left:525.00px;top:66.00px;font-size:15px;line-height:18px;color:#1e1e1e;letter-spacing:-0.390px;">Section Plane</div>
<div class="t" style="left:506.60px;top:97.97px;font-size:7px;line-height:8px;color:#b89a10;">Abc</div>
<div class="t" style="left:525.00px;top:92.30px;font-size:15px;line-height:18px;color:#1e1e1e;letter-spacing:0.227px;">Annotation</div>
<div class="t" style="left:384.60px;top:115.10px;font-size:15px;line-height:18px;color:#1e1e1e;letter-spacing:-0.636px;">Insert</div>
<div class="t" style="left:635.40px;top:81.20px;font-size:15px;line-height:18px;color:#1e1e1e;letter-spacing:-0.153px;">Inertial</div>
<div class="t" style="left:704.60px;top:81.20px;font-size:15px;line-height:18px;color:#1e1e1e;letter-spacing:-0.594px;">Loads</div>
<div class="t" style="left:775.70px;top:39.60px;font-size:15px;line-height:18px;color:#1e1e1e;letter-spacing:-0.809px;">Force</div>
<div class="t" style="left:775.70px;top:65.95px;font-size:15px;line-height:18px;color:#1e1e1e;letter-spacing:0.186px;">Moment</div>
<div class="t" style="left:775.70px;top:92.30px;font-size:15px;line-height:18px;color:#1e1e1e;letter-spacing:-0.716px;">Pressure</div>
<div class="t" style="left:846.50px;top:81.20px;font-size:15px;line-height:18px;color:#1e1e1e;letter-spacing:-0.242px;">Supports</div>
<div class="t" style="left:934.60px;top:39.60px;font-size:15px;line-height:18px;color:#1e1e1e;letter-spacing:-0.916px;">Fixed</div>
<div class="t" style="left:934.60px;top:66.00px;font-size:15px;line-height:18px;color:#1e1e1e;letter-spacing:-0.371px;">Frictionless</div>
<div class="t" style="left:934.60px;top:92.30px;font-size:15px;line-height:18px;color:#1e1e1e;letter-spacing:-0.373px;">Displacement</div>
<div class="t" style="left:905.70px;top:115.10px;font-size:15px;line-height:18px;color:#1e1e1e;letter-spacing:-0.559px;">Structural</div>
<div class="t" style="left:1036.20px;top:81.20px;font-size:15px;line-height:18px;color:#1e1e1e;letter-spacing:-0.008px;">Conditions</div>
<div class="t" style="left:1126.70px;top:81.20px;font-size:15px;line-height:18px;color:#1e1e1e;letter-spacing:-0.345px;">Direct</div>
<div class="t" style="left:1132.00px;top:96.10px;font-size:15px;line-height:18px;color:#1e1e1e;letter-spacing:-1.350px;">FE</div>
<div class="t" style="left:1224.40px;top:60.85px;font-size:14px;line-height:17px;color:#333;font-weight:bold;letter-spacing:0.253px;font-family:"Liberation Serif",serif;">.rst</div>
<div class="t" style="left:1188.00px;top:81.20px;font-size:15px;line-height:18px;color:#1e1e1e;letter-spacing:-0.110px;">Imported Load</div>
<div class="t" style="left:1198.30px;top:96.10px;font-size:15px;line-height:18px;color:#1e1e1e;letter-spacing:-0.473px;">(Result File)</div>
<div class="t" style="left:1308.50px;top:81.20px;font-size:15px;line-height:18px;color:#1e1e1e;letter-spacing:-0.171px;">Vector</div>
<div class="t" style="left:1299.30px;top:96.10px;font-size:15px;line-height:18px;color:#1e1e1e;letter-spacing:-0.355px;">Display</div>
<div class="t" style="left:1373.80px;top:81.20px;font-size:15px;line-height:18px;color:#1e1e1e;letter-spacing:-0.084px;">Tools</div>
<div class="t" style="left:1427.00px;top:81.20px;font-size:15px;line-height:18px;color:#1e1e1e;letter-spacing:-0.429px;">Views</div>
<div class="t" style="left:1894.60px;top:5.40px;font-size:15px;line-height:18px;color:#ffffff;font-weight:bold;">?</div>
<div class="r" style="left:135px;top:440.5px;width:84px;height:20px;background:#0078d7;"></div>
<svg class="r" style="left:0px;top:0px;" width="400" height="640" viewBox="0 0 400 640"><defs><linearGradient id="rb" x1="0" y1="0" x2="1" y2="0.6"><stop offset="0" stop-color="#2040ff"/><stop offset="0.28" stop-color="#20d8e8"/><stop offset="0.5" stop-color="#30e030"/><stop offset="0.72" stop-color="#f4e820"/><stop offset="1" stop-color="#ff3010"/></linearGradient></defs><path d="M15.5 220.0 V226.0" stroke="#8a8a8a" stroke-width="1" stroke-dasharray="1 1"/><path d="M22.0 231.5 H34.0" stroke="#8a8a8a" stroke-width="1" stroke-dasharray="1 1"/><path d="M49.5 240.0 V406.0" stroke="#8a8a8a" stroke-width="1" stroke-dasharray="1 1"/><path d="M56.0 251.5 H68.0" stroke="#8a8a8a" stroke-width="1" stroke-dasharray="1 1"/><path d="M56.0 271.5 H68.0" stroke="#8a8a8a" stroke-width="1" stroke-dasharray="1 1"/><path d="M56.0 331.5 H68.0" stroke="#8a8a8a" stroke-width="1" stroke-dasharray="1 1"/><path d="M56.0 351.5 H68.0" stroke="#8a8a8a" stroke-width="1" stroke-dasharray="1 1"/><path d="M56.0 411.5 H68.0" stroke="#8a8a8a" stroke-width="1" stroke-dasharray="1 1"/><path d="M50.0 371.5 H68.0" stroke="#8a8a8a" stroke-width="1" stroke-dasharray="1 1"/><path d="M50.0 391.5 H68.0" stroke="#8a8a8a" stroke-width="1" stroke-dasharray="1 1"/><path d="M83.5 278.0 V286.0" stroke="#8a8a8a" stroke-width="1" stroke-dasharray="1 1"/><path d="M90.0 291.5 H101.0" stroke="#8a8a8a" stroke-width="1" stroke-dasharray="1 1"/><path d="M116.5 300.0 V312.0" stroke="#8a8a8a" stroke-width="1" stroke-dasharray="1 1"/><path d="M116.0 311.5 H134.0" stroke="#8a8a8a" stroke-width="1" stroke-dasharray="1 1"/><path d="M83.5 420.0 V486.0" stroke="#8a8a8a" stroke-width="1" stroke-dasharray="1 1"/><path d="M84.0 431.5 H101.0" stroke="#8a8a8a" stroke-width="1" stroke-dasharray="1 1"/><path d="M84.0 451.5 H101.0" stroke="#8a8a8a" stroke-width="1" stroke-dasharray="1 1"/><path d="M84.0 471.5 H101.0" stroke="#8a8a8a" stroke-width="1" stroke-dasharray="1 1"/><path d="M90.0 491.5 H101.0" stroke="#8a8a8a" stroke-width="1" stroke-dasharray="1 1"/><path d="M116.5 500.0 V592.0" stroke="#8a8a8a" stroke-width="1" stroke-dasharray="1 1"/><path d="M118.0 511.5 H134.0" stroke="#8a8a8a" stroke-width="1" stroke-dasharray="1 1"/><path d="M118.0 531.5 H134.0" stroke="#8a8a8a" stroke-width="1" stroke-dasharray="1 1"/><path d="M118.0 551.5 H134.0" stroke="#8a8a8a" stroke-width="1" stroke-dasharray="1 1"/><path d="M118.0 571.5 H134.0" stroke="#8a8a8a" stroke-width="1" stroke-dasharray="1 1"/><path d="M118.0 591.5 H134.0" stroke="#8a8a8a" stroke-width="1" stroke-dasharray="1 1"/><rect x="10.50" y="226.50" width="10" height="10" fill="#fff" stroke="#8e8e8e" stroke-width="1"/><path d="M12.70 231.50 h5.6" stroke="#222" stroke-width="1.6"/><rect x="44.50" y="246.50" width="10" height="10" fill="#fff" stroke="#8e8e8e" stroke-width="1"/><path d="M46.70 251.50 h5.6" stroke="#222" stroke-width="1.6"/><path d="M49.50 248.70 v5.6" stroke="#222" stroke-width="1.6"/><rect x="44.50" y="266.50" width="10" height="10" fill="#fff" stroke="#8e8e8e" stroke-width="1"/><path d="M46.70 271.50 h5.6" stroke="#222" stroke-width="1.6"/><rect x="44.50" y="326.50" width="10" height="10" fill="#fff" stroke="#8e8e8e" stroke-width="1"/><path d="M46.70 331.50 h5.6" stroke="#222" stroke-width="1.6"/><path d="M49.50 328.70 v5.6" stroke="#222" stroke-width="1.6"/><rect x="44.50" y="346.50" width="10" height="10" fill="#fff" stroke="#8e8e8e" stroke-width="1"/><path d="M46.70 351.50 h5.6" stroke="#222" stroke-width="1.6"/><path d="M49.50 348.70 v5.6" stroke="#222" stroke-width="1.6"/><rect x="44.50" y="406.50" width="10" height="10" fill="#fff" stroke="#8e8e8e" stroke-width="1"/><path d="M46.70 411.50 h5.6" stroke="#222" stroke-width="1.6"/><rect x="78.50" y="286.50" width="10" height="10" fill="#fff" stroke="#8e8e8e" stroke-width="1"/><path d="M80.70 291.50 h5.6" stroke="#222" stroke-width="1.6"/><rect x="78.50" y="486.50" width="10" height="10" fill="#fff" stroke="#8e8e8e" stroke-width="1"/><path d="M80.70 491.50 h5.6" stroke="#222" stroke-width="1.6"/><path d="M67.80 256.70 l3.2 3.6 l6-9.4" fill="none" stroke="#0a9a12" stroke-width="2.3" stroke-linejoin="miter"/><path d="M67.80 276.70 l3.2 3.6 l6-9.4" fill="none" stroke="#0a9a12" stroke-width="2.3" stroke-linejoin="miter"/><path d="M67.80 336.70 l3.2 3.6 l6-9.4" fill="none" stroke="#0a9a12" stroke-width="2.3" stroke-linejoin="miter"/><path d="M67.80 356.70 l3.2 3.6 l6-9.4" fill="none" stroke="#0a9a12" stroke-width="2.3" stroke-linejoin="miter"/><path d="M67.80 376.70 l3.2 3.6 l6-9.4" fill="none" stroke="#0a9a12" stroke-width="2.3" stroke-linejoin="miter"/><path d="M67.80 396.70 l3.2 3.6 l6-9.4" fill="none" stroke="#0a9a12" stroke-width="2.3" stroke-linejoin="miter"/><path d="M67.80 416.70 l3.2 3.6 l6-9.4" fill="none" stroke="#0a9a12" stroke-width="2.3" stroke-linejoin="miter"/><path d="M101.50 436.70 l3.2 3.6 l6-9.4" fill="none" stroke="#0a9a12" stroke-width="2.3" stroke-linejoin="miter"/><path d="M101.50 456.70 l3.2 3.6 l6-9.4" fill="none" stroke="#0a9a12" stroke-width="2.3" stroke-linejoin="miter"/><path d="M101.50 476.70 l3.2 3.6 l6-9.4" fill="none" stroke="#0a9a12" stroke-width="2.3" stroke-linejoin="miter"/><path d="M101.50 496.70 l3.2 3.6 l6-9.4" fill="none" stroke="#0a9a12" stroke-width="2.3" stroke-linejoin="miter"/><path d="M135.10 316.70 l3.2 3.6 l6-9.4" fill="none" stroke="#0a9a12" stroke-width="2.3" stroke-linejoin="miter"/><path d="M135.10 516.70 l3.2 3.6 l6-9.4" fill="none" stroke="#0a9a12" stroke-width="2.3" stroke-linejoin="miter"/><path d="M135.10 536.70 l3.2 3.6 l6-9.4" fill="none" stroke="#0a9a12" stroke-width="2.3" stroke-linejoin="miter"/><path d="M135.10 556.70 l3.2 3.6 l6-9.4" fill="none" stroke="#0a9a12" stroke-width="2.3" stroke-linejoin="miter"/><path d="M135.10 576.70 l3.2 3.6 l6-9.4" fill="none" stroke="#0a9a12" stroke-width="2.3" stroke-linejoin="miter"/><path d="M135.10 596.70 l3.2 3.6 l6-9.4" fill="none" stroke="#0a9a12" stroke-width="2.3" stroke-linejoin="miter"/><path d="M102 296.90 l2.4 2.8 l5.6-8" fill="none" stroke="#0a9a12" stroke-width="2"/><path d="M105 294.70 l5.4 5.4" stroke="#0a9a12" stroke-width="2"/><rect x="11.6" y="202.8" width="5.8" height="15.6" rx="1" fill="#fff" stroke="#666" stroke-width="1"/><path d="M12.6 205 h3 M12.6 207.4 h3 M12.6 209.8 h3 M12.6 212.2 h3 M12.6 214.6 h3" stroke="#bbb" stroke-width="1"/><rect x="17.4" y="202.8" width="11" height="15.6" fill="#c9980f" stroke="#4a3c10" stroke-width="1"/><path d="M46.40 227.40 v-4 h8.6 l1.6 1.5 h5 v2.5" fill="#c9980f" stroke="#7a6210" stroke-width="1"/><path d="M45.40 227.20 h16.4 l-1 11.4 h-14.4 Z" fill="#fbf0a0" stroke="#6e6436" stroke-width="1.1"/><path d="M53.60 229.60 L57.60 231.50 L53.60 233.40 L49.60 231.50 Z" fill="#dfeeff"/><path d="M49.60 231.50 L53.60 233.40 L53.60 237.40 L49.60 235.50 Z" fill="#b9d4f6"/><path d="M57.60 231.50 L53.60 233.40 L53.60 237.40 L57.60 235.50 Z" fill="#6aa8f0"/><path d="M53.60 229.60 L57.60 231.50 L57.60 235.50 L53.60 237.40 L49.60 235.50 L49.60 231.50 Z M49.60 231.50 L53.60 233.40 L57.60 231.50 M53.60 233.40 L53.60 237.40" fill="none" stroke="#5a6a80" stroke-width="0.8" stroke-linejoin="round"/><path d="M80.20 247.40 v-4 h8.6 l1.6 1.5 h5 v2.5" fill="#c9980f" stroke="#7a6210" stroke-width="1"/><path d="M79.20 247.20 h16.4 l-1 11.4 h-14.4 Z" fill="#fbf0a0" stroke="#6e6436" stroke-width="1.1"/><path d="M87.40 249.60 L91.40 251.50 L87.40 253.40 L83.40 251.50 Z" fill="#dfeeff"/><path d="M83.40 251.50 L87.40 253.40 L87.40 257.40 L83.40 255.50 Z" fill="#b9d4f6"/><path d="M91.40 251.50 L87.40 253.40 L87.40 257.40 L91.40 255.50 Z" fill="#6aa8f0"/><path d="M87.40 249.60 L91.40 251.50 L91.40 255.50 L87.40 257.40 L83.40 255.50 L83.40 251.50 Z M83.40 251.50 L87.40 253.40 L91.40 251.50 M87.40 253.40 L87.40 257.40" fill="none" stroke="#5a6a80" stroke-width="0.8" stroke-linejoin="round"/><path d="M84.40 263.80 L89.60 266.10 L84.40 268.40 L79.20 266.10 Z" fill="#dfeeff"/><path d="M79.20 266.10 L84.40 268.40 L84.40 274.00 L79.20 271.70 Z" fill="#b9d4f6"/><path d="M89.60 266.10 L84.40 268.40 L84.40 274.00 L89.60 271.70 Z" fill="#6aa8f0"/><path d="M84.40 263.80 L89.60 266.10 L89.60 271.70 L84.40 274.00 L79.20 271.70 L79.20 266.10 Z M79.20 266.10 L84.40 268.40 L89.60 266.10 M84.40 268.40 L84.40 274.00" fill="none" stroke="#5a6a80" stroke-width="0.9" stroke-linejoin="round"/><path d="M90.40 266.00 L95.60 268.30 L90.40 270.60 L85.20 268.30 Z" fill="#dfeeff"/><path d="M85.20 268.30 L90.40 270.60 L90.40 276.20 L85.20 273.90 Z" fill="#b9d4f6"/><path d="M95.60 268.30 L90.40 270.60 L90.40 276.20 L95.60 273.90 Z" fill="#6aa8f0"/><path d="M90.40 266.00 L95.60 268.30 L95.60 273.90 L90.40 276.20 L85.20 273.90 L85.20 268.30 Z M85.20 268.30 L90.40 270.60 L95.60 268.30 M90.40 270.60 L90.40 276.20" fill="none" stroke="#5a6a80" stroke-width="0.9" stroke-linejoin="round"/><path d="M121.30 283.80 L127.30 286.40 L121.30 289.00 L115.30 286.40 Z" fill="#dfeeff"/><path d="M115.30 286.40 L121.30 289.00 L121.30 296.00 L115.30 293.40 Z" fill="#b9d4f6"/><path d="M127.30 286.40 L121.30 289.00 L121.30 296.00 L127.30 293.40 Z" fill="#6aa8f0"/><path d="M121.30 283.80 L127.30 286.40 L127.30 293.40 L121.30 296.00 L115.30 293.40 L115.30 286.40 Z M115.30 286.40 L121.30 289.00 L127.30 286.40 M121.30 289.00 L121.30 296.00" fill="none" stroke="#5a6a80" stroke-width="0.9" stroke-linejoin="round"/><rect x="146.6" y="302.4" width="12.4" height="15" fill="#fff" stroke="#444" stroke-width="1.2"/><path d="M148.8 305.4 h7.6 M148.8 308 h5 M148.8 310.6 h4 M148.8 313.2 h4" stroke="#666" stroke-width="1"/><path d="M80.20 327.40 v-4 h8.6 l1.6 1.5 h5 v2.5" fill="#c9980f" stroke="#7a6210" stroke-width="1"/><path d="M79.20 327.20 h16.4 l-1 11.4 h-14.4 Z" fill="#fbf0a0" stroke="#6e6436" stroke-width="1.1"/><path d="M85 330.6 l4-2 l5 4 l-3.4 3.6 l-5.2-3.6Z" fill="#f0b070" stroke="#9a7a50" stroke-width="0.8"/><path d="M87.4 346.5 V359.5" stroke="#0cc030" stroke-width="1.6"/><path d="M87.4 342.5 l-2.6 4 h5.2z" fill="#0cc030"/><path d="M87.4 352.5 L94.6 357.5" stroke="#e81c24" stroke-width="1.6"/><path d="M96 358.7 l-4.6-.4 l2.6-3.4z" fill="#e81c24"/><path d="M87.4 352.5 L80.2 357.5" stroke="#4a90f0" stroke-width="1.6"/><path d="M78.8 358.7 l4.6-.4 l-2.6-3.4z" fill="#4a90f0"/><path d="M80.4 345.5 l5 5 M94.4 345.5 l-5 5" stroke="#555" stroke-width="1.2"/><rect x="86.3" y="355.1" width="2.2" height="4.5" fill="#888"/><path d="M80.20 367.40 v-4 h8.6 l1.6 1.5 h5 v2.5" fill="#c9980f" stroke="#7a6210" stroke-width="1"/><path d="M79.20 367.20 h16.4 l-1 11.4 h-14.4 Z" fill="#fbf0a0" stroke="#6e6436" stroke-width="1.1"/><circle cx="87.4" cy="373" r="3.6" fill="#f0d860" stroke="#b08a10" stroke-width="0.9"/><path d="M84.4 373 h6 M87.4 370 v6" stroke="#b08a10" stroke-width="0.9"/><path d="M85.00 383.60 L90.60 385.90 L85.00 388.20 L79.40 385.90 Z" fill="#e4eefc"/><path d="M79.40 385.90 L85.00 388.20 L85.00 394.00 L79.40 391.70 Z" fill="#c8dcf4"/><path d="M90.60 385.90 L85.00 388.20 L85.00 394.00 L90.60 391.70 Z" fill="#a8c4ea"/><path d="M85.00 383.60 L90.60 385.90 L90.60 391.70 L85.00 394.00 L79.40 391.70 L79.40 385.90 Z M79.40 385.90 L85.00 388.20 L90.60 385.90 M85.00 388.20 L85.00 394.00" fill="none" stroke="#56606e" stroke-width="0.9" stroke-linejoin="round"/><path d="M90.60 385.80 L96.00 388.10 L90.60 390.40 L85.20 388.10 Z" fill="#e4eefc"/><path d="M85.20 388.10 L90.60 390.40 L90.60 396.20 L85.20 393.90 Z" fill="#c8dcf4"/><path d="M96.00 388.10 L90.60 390.40 L90.60 396.20 L96.00 393.90 Z" fill="#a8c4ea"/><path d="M90.60 385.80 L96.00 388.10 L96.00 393.90 L90.60 396.20 L85.20 393.90 L85.20 388.10 Z M85.20 388.10 L90.60 390.40 L96.00 388.10 M90.60 390.40 L90.60 396.20" fill="none" stroke="#56606e" stroke-width="0.9" stroke-linejoin="round"/><rect x="78.8" y="402" width="17.4" height="17" fill="#7ed32f"/><path d="M81.4 408.6 h12.4" stroke="#fff" stroke-width="1.5"/><path d="M84.4 409.6 l-1.8 4 M88.2 409.6 l-1.8 4 M92 409.6 l-1.8 4" stroke="#fff" stroke-width="1.4"/><path d="M114 424.8 h14.8 v12.2 h-14.8z M119 424.8 v12.2 M124 424.8 v12.2" fill="#fff" stroke="#222" stroke-width="1.1"/><path d="M113 435.4 q8.4-13 16.8 0" fill="none" stroke="#10c020" stroke-width="1.5"/><path d="M113.4 422.4 h16 M116.4 422.4 v2.4 M121.4 422.4 v2.4 M126.4 422.4 v2.4" stroke="#1020e0" stroke-width="1.1"/><path d="M114 437 l-1.6 2.4 h3.2z M121.4 437 l-1.6 2.4 h3.2z M128.8 437 l-1.6 2.4 h3.2z" fill="#e81c24"/><path d="M118.80 442.90 L124.60 445.60 L124.60 451.20 L118.80 453.90 L113.00 451.20 L113.00 445.60 Z" fill="#ffffff"/><path d="M118.80 448.30 L124.60 445.60 L124.60 451.20 L118.80 453.90 Z" fill="#0a95ff"/><path d="M118.80 442.90 L124.60 445.60 L124.60 451.20 L118.80 453.90 L113.00 451.20 L113.00 445.60 Z M113.00 445.60 L118.80 448.30 M124.60 445.60 L118.80 448.30 M118.80 448.30 L118.80 453.90" fill="none" stroke="#555" stroke-width="1.3" stroke-linejoin="round"/><path d="M118.80 462.90 L124.60 465.60 L124.60 471.20 L118.80 473.90 L113.00 471.20 L113.00 465.60 Z" fill="#ffffff"/><path d="M118.80 468.30 L124.60 465.60 L124.60 471.20 L118.80 473.90 Z" fill="#0a95ff"/><path d="M118.80 462.90 L124.60 465.60 L124.60 471.20 L118.80 473.90 L113.00 471.20 L113.00 465.60 Z M113.00 465.60 L118.80 468.30 M124.60 465.60 L118.80 468.30 M118.80 468.30 L118.80 473.90" fill="none" stroke="#555" stroke-width="1.3" stroke-linejoin="round"/><path d="M129.80 454.40 L125.54 456.89" stroke="#c9980f" stroke-width="1.2" fill="none"/><path d="M122.60 458.60 L124.59 455.27 L126.48 458.50 Z" fill="#c9980f"/><path d="M120.6 478.6 l4-3.6 M124.6 478.6 l4-3.6" stroke="#c9980f" stroke-width="1.6"/><path d="M114.20 487.40 v-4 h8.6 l1.6 1.5 h5 v2.5" fill="#c9980f" stroke="#7a6210" stroke-width="1"/><path d="M113.20 487.20 h16.4 l-1 11.4 h-14.4 Z" fill="#fbf0a0" stroke="#6e6436" stroke-width="1.1"/><path d="M117 490.4 h9.6 v6 h-9.6z" fill="url(#rb)" stroke="#555" stroke-width="0.7"/><path d="M147.80 507.40 v-4 h8.6 l1.6 1.5 h5 v2.5" fill="#c9980f" stroke="#7a6210" stroke-width="1"/><path d="M146.80 507.20 h16.4 l-1 11.4 h-14.4 Z" fill="#fbf0a0" stroke="#6e6436" stroke-width="1.1"/><path d="M151.60 524.30 L156.60 526.60 L156.60 532.60 L151.60 534.90 L146.60 532.60 L146.60 526.60 Z" fill="url(#rb)" stroke="#3c4a3c" stroke-width="0.9" stroke-linejoin="round"/><path d="M146.60 526.60 L151.60 528.90 L156.60 526.60 M151.60 528.90 L151.60 534.90" fill="none" stroke="#3c4a3c" stroke-width="0.8"/><path d="M156.80 526.50 L161.80 528.80 L161.80 534.80 L156.80 537.10 L151.80 534.80 L151.80 528.80 Z" fill="url(#rb)" stroke="#3c4a3c" stroke-width="0.9" stroke-linejoin="round"/><path d="M151.80 528.80 L156.80 531.10 L161.80 528.80 M156.80 531.10 L156.80 537.10" fill="none" stroke="#3c4a3c" stroke-width="0.8"/><path d="M151.60 544.30 L156.60 546.60 L156.60 552.60 L151.60 554.90 L146.60 552.60 L146.60 546.60 Z" fill="url(#rb)" stroke="#3c4a3c" stroke-width="0.9" stroke-linejoin="round"/><path d="M146.60 546.60 L151.60 548.90 L156.60 546.60 M151.60 548.90 L151.60 554.90" fill="none" stroke="#3c4a3c" stroke-width="0.8"/><path d="M156.80 546.50 L161.80 548.80 L161.80 554.80 L156.80 557.10 L151.80 554.80 L151.80 548.80 Z" fill="url(#rb)" stroke="#3c4a3c" stroke-width="0.9" stroke-linejoin="round"/><path d="M151.80 548.80 L156.80 551.10 L161.80 548.80 M156.80 551.10 L156.80 557.10" fill="none" stroke="#3c4a3c" stroke-width="0.8"/><path d="M151.60 564.30 L156.60 566.60 L156.60 572.60 L151.60 574.90 L146.60 572.60 L146.60 566.60 Z" fill="url(#rb)" stroke="#3c4a3c" stroke-width="0.9" stroke-linejoin="round"/><path d="M146.60 566.60 L151.60 568.90 L156.60 566.60 M151.60 568.90 L151.60 574.90" fill="none" stroke="#3c4a3c" stroke-width="0.8"/><path d="M156.80 566.50 L161.80 568.80 L161.80 574.80 L156.80 577.10 L151.80 574.80 L151.80 568.80 Z" fill="url(#rb)" stroke="#3c4a3c" stroke-width="0.9" stroke-linejoin="round"/><path d="M151.80 568.80 L156.80 571.10 L161.80 568.80 M156.80 571.10 L156.80 577.10" fill="none" stroke="#3c4a3c" stroke-width="0.8"/><path d="M151.60 584.30 L156.60 586.60 L156.60 592.60 L151.60 594.90 L146.60 592.60 L146.60 586.60 Z" fill="url(#rb)" stroke="#3c4a3c" stroke-width="0.9" stroke-linejoin="round"/><path d="M146.60 586.60 L151.60 588.90 L156.60 586.60 M151.60 588.90 L151.60 594.90" fill="none" stroke="#3c4a3c" stroke-width="0.8"/><path d="M156.80 586.50 L161.80 588.80 L161.80 594.80 L156.80 597.10 L151.80 594.80 L151.80 588.80 Z" fill="url(#rb)" stroke="#3c4a3c" stroke-width="0.9" stroke-linejoin="round"/><path d="M151.80 588.80 L156.80 591.10 L161.80 588.80 M156.80 591.10 L156.80 597.10" fill="none" stroke="#3c4a3c" stroke-width="0.8"/><circle cx="157" cy="593.5" r="3.4" fill="#fff" fill-opacity="0.8" stroke="#666" stroke-width="1.1"/><path d="M159.4 596.1 l3.4 3.6" stroke="#666" stroke-width="1.5"/></svg>
<div class="t" style="left:36.30px;top:202.07px;font-size:14.5px;line-height:17px;color:#1a1a1a;font-weight:bold;letter-spacing:0.487px;">Project*</div>
<div class="t" style="left:70.50px;top:222.07px;font-size:14.5px;line-height:17px;color:#1a1a1a;font-weight:bold;letter-spacing:0.279px;">Model (A4)</div>
<div class="t" style="left:103.20px;top:242.92px;font-size:13.5px;line-height:16px;color:#1a1a1a;letter-spacing:0.036px;">Geometry Imports</div>
<div class="t" style="left:103.20px;top:262.92px;font-size:13.5px;line-height:16px;color:#1a1a1a;letter-spacing:-0.146px;">Geometry</div>
<div class="t" style="left:136.80px;top:282.92px;font-size:13.5px;line-height:16px;color:#1a1a1a;letter-spacing:-0.508px;">SYS-1\Solid</div>
<div class="t" style="left:170.70px;top:302.92px;font-size:13.5px;line-height:16px;color:#1a1a1a;letter-spacing:-0.516px;">Commands (APDL)</div>
<div class="t" style="left:103.20px;top:322.92px;font-size:13.5px;line-height:16px;color:#1a1a1a;letter-spacing:-0.130px;">Materials</div>
<div class="t" style="left:103.20px;top:342.92px;font-size:13.5px;line-height:16px;color:#1a1a1a;letter-spacing:-0.114px;">Coordinate Systems</div>
<div class="t" style="left:103.20px;top:362.92px;font-size:13.5px;line-height:16px;color:#1a1a1a;letter-spacing:-0.159px;">Connections</div>
<div class="t" style="left:103.20px;top:382.92px;font-size:13.5px;line-height:16px;color:#1a1a1a;letter-spacing:-0.578px;">Mesh</div>
<div class="t" style="left:104.00px;top:402.07px;font-size:14.5px;line-height:17px;color:#1a1a1a;font-weight:bold;letter-spacing:0.299px;">Static Structural (A5)</div>
<div class="t" style="left:137.00px;top:422.92px;font-size:13.5px;line-height:16px;color:#1a1a1a;letter-spacing:-0.106px;">Analysis Settings</div>
<div class="t" style="left:137.00px;top:442.92px;font-size:13.5px;line-height:16px;color:#ffffff;letter-spacing:-0.199px;">Displacement</div>
<div class="t" style="left:137.00px;top:462.92px;font-size:13.5px;line-height:16px;color:#1a1a1a;letter-spacing:-0.019px;">Fixed Support</div>
<div class="t" style="left:137.50px;top:482.07px;font-size:14.5px;line-height:17px;color:#1a1a1a;font-weight:bold;letter-spacing:0.161px;">Solution (A6)</div>
<div class="t" style="left:170.70px;top:502.92px;font-size:13.5px;line-height:16px;color:#1a1a1a;letter-spacing:0.046px;">Solution Information</div>
<div class="t" style="left:170.70px;top:522.92px;font-size:13.5px;line-height:16px;color:#1a1a1a;letter-spacing:0.088px;">Total Deformation</div>
<div class="t" style="left:170.70px;top:542.92px;font-size:13.5px;line-height:16px;color:#1a1a1a;letter-spacing:-0.131px;">Equivalent Plastic Strain</div>
<div class="t" style="left:170.70px;top:562.92px;font-size:13.5px;line-height:16px;color:#1a1a1a;letter-spacing:-0.103px;">Equivalent Stress</div>
<div class="t" style="left:170.70px;top:582.92px;font-size:13.5px;line-height:16px;color:#1a1a1a;letter-spacing:-0.139px;">Force Reaction</div>
<div class="t" style="left:153.80px;top:305.72px;font-size:13.5px;line-height:16px;color:#c9980f;font-weight:bold;text-shadow:0 0 1px #fff,0 0 1px #fff;">C</div>
<div class="t" style="left:153.40px;top:506.49px;font-size:11px;line-height:13px;color:#3a7ae0;font-weight:bold;font-family:"Liberation Serif",serif;">i</div>
<div class="r" style="left:28px;top:170px;width:123.5px;height:27.5px;background:#ffffff;border:1px solid #ccccda;box-sizing:border-box;"></div>
<div class="r" style="left:153px;top:170px;width:111.5px;height:27.5px;background:#ffffff;border:1px solid #ccccda;box-sizing:border-box;"></div>
<div class="t" style="left:31.00px;top:174.35px;font-size:16px;line-height:19px;color:#1e1e1e;letter-spacing:0.330px;">Name</div>
<div class="t" style="left:157.60px;top:174.35px;font-size:16px;line-height:19px;color:#a4a4a4;letter-spacing:-0.274px;">Search Outline</div>
<svg class="r" style="left:0px;top:166px;" width="400" height="36" viewBox="0 166 400 36"><path d="M136.6 181.4 h9 l-4.5 4.8z" fill="#666"/><path d="M272 179.6 L278.6 186 L285.2 179.6" fill="none" stroke="#c9980f" stroke-width="2.1"/><path d="M295 187.6 h8 l-4 4.4z" fill="#111"/><rect x="13" y="172" width="1.3" height="1.3" fill="#b0b0bc"/><rect x="16" y="174" width="1.3" height="1.3" fill="#b0b0bc"/><rect x="13" y="176" width="1.3" height="1.3" fill="#b0b0bc"/><rect x="16" y="178" width="1.3" height="1.3" fill="#b0b0bc"/><rect x="13" y="180" width="1.3" height="1.3" fill="#b0b0bc"/><rect x="16" y="182" width="1.3" height="1.3" fill="#b0b0bc"/><rect x="13" y="184" width="1.3" height="1.3" fill="#b0b0bc"/><rect x="16" y="186" width="1.3" height="1.3" fill="#b0b0bc"/><rect x="13" y="188" width="1.3" height="1.3" fill="#b0b0bc"/><rect x="16" y="190" width="1.3" height="1.3" fill="#b0b0bc"/><rect x="13" y="192" width="1.3" height="1.3" fill="#b0b0bc"/><rect x="16" y="194" width="1.3" height="1.3" fill="#b0b0bc"/><rect x="19" y="172" width="1.3" height="1.3" fill="#b0b0bc"/><rect x="19" y="172" width="1.3" height="1.3" fill="#b0b0bc"/><rect x="19" y="176" width="1.3" height="1.3" fill="#b0b0bc"/><rect x="19" y="180" width="1.3" height="1.3" fill="#b0b0bc"/><rect x="19" y="184" width="1.3" height="1.3" fill="#b0b0bc"/><rect x="19" y="188" width="1.3" height="1.3" fill="#b0b0bc"/><rect x="19" y="192" width="1.3" height="1.3" fill="#b0b0bc"/></svg>
<svg class="r" style="left:0px;top:0px;clip-path:inset(0 0 0 0);" width="400" height="963" viewBox="0 0 400 963"><rect x="166.5" y="756.00" width="208" height="23.75" fill="#e6e6e6"/><path d="M16 661.5 H375" stroke="#a6a6a6" stroke-width="1"/><path d="M16 685.5 H375" stroke="#a6a6a6" stroke-width="1"/><path d="M16 708.5 H375" stroke="#a6a6a6" stroke-width="1"/><path d="M16 732.5 H375" stroke="#a6a6a6" stroke-width="1"/><path d="M16 756.5 H375" stroke="#a6a6a6" stroke-width="1"/><path d="M16 780.5 H375" stroke="#a6a6a6" stroke-width="1"/><path d="M16 804.5 H375" stroke="#a6a6a6" stroke-width="1"/><path d="M16 827.5 H375" stroke="#a6a6a6" stroke-width="1"/><path d="M16 851.5 H375" stroke="#a6a6a6" stroke-width="1"/><path d="M16 875.5 H375" stroke="#a6a6a6" stroke-width="1"/><path d="M16 898.5 H375" stroke="#a6a6a6" stroke-width="1"/><path d="M16 922.5 H375" stroke="#a6a6a6" stroke-width="1"/><path d="M16 946.5 H375" stroke="#a6a6a6" stroke-width="1"/><path d="M16.5 661 V963 M374.5 661 V963" stroke="#a6a6a6" stroke-width="1"/><rect x="3.5" y="667.5" width="10" height="10" fill="#fff" stroke="#9a9a9a" stroke-width="1.2"/><path d="M5.4 672.5 h6.2" stroke="#222" stroke-width="1.3"/><path d="M166.5 685.5 V708.5" stroke="#a6a6a6" stroke-width="1"/><path d="M166.5 708.5 V732.5" stroke="#a6a6a6" stroke-width="1"/><rect x="3.5" y="738.5" width="10" height="10" fill="#fff" stroke="#9a9a9a" stroke-width="1.2"/><path d="M5.4 743.5 h6.2" stroke="#222" stroke-width="1.3"/><path d="M166.5 756.5 V780.5" stroke="#a6a6a6" stroke-width="1"/><path d="M166.5 780.5 V804.5" stroke="#a6a6a6" stroke-width="1"/><path d="M166.5 804.5 V827.5" stroke="#a6a6a6" stroke-width="1"/><path d="M166.5 827.5 V851.5" stroke="#a6a6a6" stroke-width="1"/><path d="M166.5 851.5 V875.5" stroke="#a6a6a6" stroke-width="1"/><path d="M166.5 875.5 V898.5" stroke="#a6a6a6" stroke-width="1"/><path d="M166.5 898.5 V922.5" stroke="#a6a6a6" stroke-width="1"/><rect x="3.5" y="928.5" width="10" height="10" fill="#fff" stroke="#9a9a9a" stroke-width="1.2"/><path d="M5.4 933.5 h6.2" stroke="#222" stroke-width="1.3"/><path d="M166.5 946.5 V963" stroke="#a6a6a6" stroke-width="1"/><rect x="22" y="880.25" width="13" height="13" fill="#fff" stroke="#d4d4d4" stroke-width="1"/><rect x="385.4" y="682" width="2" height="239" fill="#7a7a7a"/></svg>
<div class="t" style="left:21.70px;top:664.07px;font-size:14.5px;line-height:17px;color:#1a1a1a;font-weight:bold;letter-spacing:-0.943px;">Scope</div>
<div class="t" style="left:21.70px;top:687.82px;font-size:14.5px;line-height:17px;color:#1a1a1a;letter-spacing:0.179px;">Scoping Method</div>
<div class="t" style="left:171.40px;top:687.82px;font-size:14.5px;line-height:17px;color:#1a1a1a;letter-spacing:-0.080px;">Geometry Selection</div>
<div class="t" style="left:21.70px;top:711.57px;font-size:14.5px;line-height:17px;color:#1a1a1a;letter-spacing:-0.107px;">Geometry</div>
<div class="t" style="left:171.40px;top:711.57px;font-size:14.5px;line-height:17px;color:#1a1a1a;letter-spacing:-0.790px;">424 Faces</div>
<div class="t" style="left:21.70px;top:735.32px;font-size:14.5px;line-height:17px;color:#1a1a1a;font-weight:bold;letter-spacing:-0.255px;">Definition</div>
<div class="t" style="left:21.70px;top:759.07px;font-size:14.5px;line-height:17px;color:#1a1a1a;letter-spacing:-0.284px;">Type</div>
<div class="t" style="left:171.40px;top:759.07px;font-size:14.5px;line-height:17px;color:#1a1a1a;letter-spacing:-0.062px;">Displacement</div>
<div class="t" style="left:21.70px;top:782.82px;font-size:14.5px;line-height:17px;color:#1a1a1a;letter-spacing:-0.118px;">Define By</div>
<div class="t" style="left:171.40px;top:782.82px;font-size:14.5px;line-height:17px;color:#1a1a1a;letter-spacing:0.098px;">Components</div>
<div class="t" style="left:21.70px;top:806.57px;font-size:14.5px;line-height:17px;color:#1a1a1a;letter-spacing:-0.089px;">Coordinate System</div>
<div class="t" style="left:171.40px;top:806.57px;font-size:14.5px;line-height:17px;color:#1a1a1a;letter-spacing:-0.044px;">Global Coordinate System</div>
<div class="t" style="left:21.70px;top:830.32px;font-size:14.5px;line-height:17px;color:#1a1a1a;letter-spacing:0.058px;">X Component</div>
<div class="t" style="left:171.40px;top:830.32px;font-size:14.5px;line-height:17px;color:#1a1a1a;letter-spacing:-0.051px;">Tabular Data</div>
<div class="t" style="left:21.70px;top:854.07px;font-size:14.5px;line-height:17px;color:#1a1a1a;letter-spacing:0.081px;">Y Component</div>
<div class="t" style="left:171.40px;top:854.07px;font-size:14.5px;line-height:17px;color:#1a1a1a;letter-spacing:-0.051px;">Tabular Data</div>
<div class="t" style="left:44.00px;top:877.82px;font-size:14.5px;line-height:17px;color:#1a1a1a;letter-spacing:0.150px;">Z Component</div>
<div class="t" style="left:171.40px;top:877.82px;font-size:14.5px;line-height:17px;color:#1a1a1a;letter-spacing:-0.704px;">Free</div>
<div class="t" style="left:21.70px;top:901.57px;font-size:14.5px;line-height:17px;color:#1a1a1a;letter-spacing:-0.339px;">Suppressed</div>
<div class="t" style="left:171.40px;top:901.57px;font-size:14.5px;line-height:17px;color:#1a1a1a;letter-spacing:0.332px;">No</div>
<div class="t" style="left:21.70px;top:925.32px;font-size:14.5px;line-height:17px;color:#1a1a1a;font-weight:bold;letter-spacing:-0.288px;">Tabular Data</div>
<div class="t" style="left:21.70px;top:949.07px;font-size:14.5px;line-height:17px;color:#1a1a1a;letter-spacing:0.125px;">Independent Variable</div>
<div class="t" style="left:171.40px;top:949.07px;font-size:14.5px;line-height:17px;color:#1a1a1a;letter-spacing:-0.171px;">Time</div>
<svg class="r" style="left:396px;top:141px;" width="1524" height="34" viewBox="396 141 1524 34"><rect x="414" y="148" width="1.3" height="1.3" fill="#b0b0bc"/><rect x="416.5" y="150" width="1.3" height="1.3" fill="#b0b0bc"/><rect x="419" y="148" width="1.3" height="1.3" fill="#b0b0bc"/><rect x="414" y="152" width="1.3" height="1.3" fill="#b0b0bc"/><rect x="416.5" y="154" width="1.3" height="1.3" fill="#b0b0bc"/><rect x="419" y="152" width="1.3" height="1.3" fill="#b0b0bc"/><rect x="414" y="156" width="1.3" height="1.3" fill="#b0b0bc"/><rect x="416.5" y="158" width="1.3" height="1.3" fill="#b0b0bc"/><rect x="419" y="156" width="1.3" height="1.3" fill="#b0b0bc"/><rect x="414" y="160" width="1.3" height="1.3" fill="#b0b0bc"/><rect x="416.5" y="162" width="1.3" height="1.3" fill="#b0b0bc"/><rect x="419" y="160" width="1.3" height="1.3" fill="#b0b0bc"/><rect x="414" y="164" width="1.3" height="1.3" fill="#b0b0bc"/><rect x="416.5" y="166" width="1.3" height="1.3" fill="#b0b0bc"/><rect x="419" y="164" width="1.3" height="1.3" fill="#b0b0bc"/><rect x="414" y="168" width="1.3" height="1.3" fill="#b0b0bc"/><rect x="416.5" y="170" width="1.3" height="1.3" fill="#b0b0bc"/><rect x="419" y="168" width="1.3" height="1.3" fill="#b0b0bc"/><rect x="486.5" y="146" width="1" height="25" fill="#c8c8d6"/><rect x="576.5" y="146" width="1" height="25" fill="#c8c8d6"/><rect x="611.0" y="146" width="1" height="25" fill="#c8c8d6"/><rect x="825.0" y="146" width="1" height="25" fill="#c8c8d6"/><rect x="1277.0" y="146" width="1" height="25" fill="#c8c8d6"/><rect x="1474.8" y="146" width="1" height="25" fill="#c8c8d6"/><circle cx="441.0" cy="157.2" r="6.6" fill="#f4f4f6" stroke="#3c3c3c" stroke-width="1.8"/><path d="M445.9 162.3 l4.4 4.6" stroke="#3c3c3c" stroke-width="2.2"/><path d="M445.40 157.20 L441.00 157.20" stroke="#c9980f" stroke-width="2" fill="none"/><path d="M436.60 157.20 L441.00 154.78 L441.00 159.62 Z" fill="#c9980f"/><circle cx="469.0" cy="157.2" r="6.6" fill="#f4f4f6" stroke="#b4b4b4" stroke-width="1.8"/><path d="M473.9 162.3 l4.4 4.6" stroke="#b4b4b4" stroke-width="2.2"/><path d="M464.60 157.20 L469.00 157.20" stroke="#c4c4c4" stroke-width="2" fill="none"/><path d="M473.40 157.20 L469.00 159.62 L469.00 154.78 Z" fill="#c4c4c4"/><rect x="491.5" y="144.5" width="27" height="27" fill="#f2f2f7" stroke="#4a9cf0" stroke-width="1"/><path d="M505.00 148.60 L512.40 152.20 L512.40 161.20 L505.00 164.80 L497.60 161.20 L497.60 152.20 Z" fill="#8c8c8c"/><path d="M505.00 148.60 L512.40 152.20 L512.40 161.20 L505.00 164.80 L497.60 161.20 L497.60 152.20 Z M497.60 152.20 L505.00 155.80 M512.40 152.20 L505.00 155.80 M505.00 155.80 L505.00 164.80" fill="none" stroke="#333" stroke-width="1.4" stroke-linejoin="round"/><path d="M505 155.8 l7.4-3.6 v9 l-7.4 3.6z" fill="#6e6e6e"/><path d="M505 148.6 l7.4 3.6 l-7.4 3.6 l-7.4-3.6z" fill="#b4b4b4"/><path d="M505.00 148.60 L512.40 152.20 L512.40 161.20 L505.00 164.80 L497.60 161.20 L497.60 152.20 Z" fill="none"/><path d="M505.00 148.60 L512.40 152.20 L512.40 161.20 L505.00 164.80 L497.60 161.20 L497.60 152.20 Z M497.60 152.20 L505.00 155.80 M512.40 152.20 L505.00 155.80 M505.00 155.80 L505.00 164.80" fill="none" stroke="#333" stroke-width="1.4" stroke-linejoin="round"/><path d="M532 149.4 l7.6 3.4 l-7.6 3.4 l-7.6-3.4z" fill="#c6c6c6"/><path d="M524.4 152.8 l7.6 3.4 v9 l-7.6-3.4z" fill="#8e8e8e"/><path d="M539.6 152.8 l-7.6 3.4 v9 l7.6-3.4z" fill="#aaaaaa"/><path d="M559.6 150 l5-2.2 l4.6 2 v4.6 l-5 2.2 l-4.6-2 Z" fill="#fff" stroke="#444" stroke-width="1.2"/><path d="M552 158.6 l5-2.2 l4.6 2 v4.6 l-5 2.2 l-4.6-2 Z" fill="#c9980f" stroke="#444" stroke-width="1.2"/><path d="M553.4 154.4 q1-3.4 4-4.4 M568 159.6 q-1 3.4-4 4.4" fill="none" stroke="#555" stroke-width="1.1"/><rect x="586.8" y="150.2" width="6" height="6" fill="#fff" stroke="#444" stroke-width="1.2"/><rect x="595.4" y="158.4" width="8" height="8" fill="#fff" stroke="#444" stroke-width="1.3"/><path d="M599.4 158.4 v8 M595.4 162.4 h8" stroke="#444" stroke-width="1.1"/><path d="M595.60 150.60 L599.01 153.90" stroke="#c9980f" stroke-width="1.4" fill="none"/><path d="M601.60 156.40 L597.64 155.32 L600.39 152.47 Z" fill="#c9980f"/><path d="M623.6 153.4 a8 8 0 0 1 13.6-1.6" fill="none" stroke="#444" stroke-width="1.5"/><path d="M636.6 161 a8 8 0 0 1 -13.6 1.6" fill="none" stroke="#444" stroke-width="1.5"/><path d="M638.6 156.4 l-4.4-1 l3.2-3.4 Z M621.4 158 l4.4 1 l-3.2 3.4 Z" fill="#c9980f"/><path d="M647.00 155.70 h7.6 l-3.8 3.8 z" fill="#777"/><path d="M671 149.6 l3.6 4 h-7.2z M671 166.4 l3.6-4 h-7.2z M662.6 158 l4-3.6 v7.2z M679.4 158 l-4-3.6 v7.2z" fill="#c9980f"/><circle cx="671" cy="155.4" r="1.1" fill="#222"/><circle cx="671" cy="160.6" r="1.1" fill="#222"/><circle cx="668.4" cy="158" r="1.1" fill="#222"/><circle cx="673.6" cy="158" r="1.1" fill="#222"/><circle cx="697.6" cy="156.4" r="6.6" fill="#f4f4f6" stroke="#3c3c3c" stroke-width="1.8"/><path d="M702.5 161.5 l4.4 4.6" stroke="#3c3c3c" stroke-width="2.2"/><path d="M697.6 152.4 l2.8 2.6 h-5.6z M697.6 160.4 l2.8-2.6 h-5.6z" fill="#c9980f"/><circle cx="724.6" cy="156.4" r="6.6" fill="#f4f4f6" stroke="#3c3c3c" stroke-width="1.8"/><path d="M729.5 161.5 l4.4 4.6" stroke="#3c3c3c" stroke-width="2.2"/><path d="M720.8 156.4 h7.6 M724.6 152.6 v7.6" stroke="#c9980f" stroke-width="2.2"/><circle cx="752.4" cy="156.4" r="6.6" fill="#f4f4f6" stroke="#3c3c3c" stroke-width="1.8"/><path d="M757.3 161.5 l4.4 4.6" stroke="#3c3c3c" stroke-width="2.2"/><path d="M752.4 153 l3 1.4 v3.6 l-3 1.6 l-3-1.6 v-3.6z" fill="#5a9bf0" stroke="#446" stroke-width="0.6"/><circle cx="780.0" cy="156.4" r="6.6" fill="#f4f4f6" stroke="#3c3c3c" stroke-width="1.8"/><path d="M784.9 161.5 l4.4 4.6" stroke="#3c3c3c" stroke-width="2.2"/><path d="M780 153 l3 1.4 v3.6 l-3 1.6 l-3-1.6 v-3.6z" fill="#20c830" stroke="#446" stroke-width="0.6"/><path d="M780 156 v3.6 l3-1.6 v-3.6z" fill="#5a9bf0"/><circle cx="807.6" cy="156.4" r="6.6" fill="#f4f4f6" stroke="#3c3c3c" stroke-width="1.8"/><path d="M812.5 161.5 l4.4 4.6" stroke="#3c3c3c" stroke-width="2.2"/><path d="M807.6 152.4 l2.8 2.6 h-5.6z M807.6 160.4 l2.8-2.6 h-5.6z" fill="#c9980f"/><rect x="887.6" y="149.8" width="7.4" height="7" fill="#f01020"/><path d="M893.6 153.2 l8.4 4.2 l-3.6 1 l3.2 5 l-1.8 1.2 l-3.2-5 l-2.6 2.6 Z" fill="#333"/><path d="M955.00 155.20 h6.8 l-3.4 3.6 z" fill="#777"/><rect x="973" y="144.5" width="26.5" height="27" fill="#f2f2f7" stroke="#4a9cf0" stroke-width="1"/><path d="M977.0 149.6 h7 M977.6 149.0 v7 M980.2 152.2 v4.6 M979.6 152.2 h4.6" stroke="#333" stroke-width="1.2" fill="none"/><rect x="980.0" y="150.4" width="4.6" height="2.6" fill="#00d800"/><path d="M986.4 149.6 h7 M987.0 149.0 v7 M989.6 152.2 v4.6 M989.0 152.2 h4.6" stroke="#333" stroke-width="1.2" fill="none"/><rect x="989.4" y="150.4" width="4.6" height="2.6" fill="#00d800"/><path d="M977.0 159.0 h7 M977.6 158.4 v7 M980.2 161.6 v4.6 M979.6 161.6 h4.6" stroke="#333" stroke-width="1.2" fill="none"/><rect x="980.0" y="159.8" width="4.6" height="2.6" fill="#00d800"/><path d="M989 159.6 l4.4 2.4 l-2 .4 l1.6 2.6 l-1 .6 l-1.6-2.6 l-1.4 1.4 Z" fill="#555"/><path d="M1009.5 154.0 l-4 -3.5 h11 l4 3.5 Z" fill="#fff" stroke="#3c3c3c" stroke-width="1.1" stroke-linejoin="round"/><path d="M1009.5 154.0 l-4 -3.5 v11 l4 3.5 Z" fill="#fff" stroke="#3c3c3c" stroke-width="1.1" stroke-linejoin="round"/><rect x="1009.5" y="154.0" width="12" height="11.5" fill="#fff" stroke="#3c3c3c" stroke-width="1.3"/><circle cx="1007.9" cy="152.2" r="2" fill="#00e000"/><path d="M1014.5 158.6 l4.4 2.4 l-2 .4 l1.6 2.6 l-1 .6 l-1.6-2.6 l-1.4 1.4 Z" fill="#444"/><path d="M1037.0 154.0 l-4 -3.5 h11 l4 3.5 Z" fill="#fff" stroke="#3c3c3c" stroke-width="1.1" stroke-linejoin="round"/><path d="M1037.0 154.0 l-4 -3.5 v11 l4 3.5 Z" fill="#fff" stroke="#3c3c3c" stroke-width="1.1" stroke-linejoin="round"/><rect x="1037.0" y="154.0" width="12" height="11.5" fill="#fff" stroke="#3c3c3c" stroke-width="1.3"/><path d="M1033.4 151.0 l4 3.5" stroke="#00e000" stroke-width="2.4"/><path d="M1042.0 158.6 l4.4 2.4 l-2 .4 l1.6 2.6 l-1 .6 l-1.6-2.6 l-1.4 1.4 Z" fill="#444"/><path d="M1064.4 154.0 l-4 -3.5 h11 l4 3.5 Z" fill="#00e000" stroke="#3c3c3c" stroke-width="1.1" stroke-linejoin="round"/><path d="M1064.4 154.0 l-4 -3.5 v11 l4 3.5 Z" fill="#fff" stroke="#3c3c3c" stroke-width="1.1" stroke-linejoin="round"/><rect x="1064.4" y="154.0" width="12" height="11.5" fill="#fff" stroke="#3c3c3c" stroke-width="1.3"/><path d="M1069.4 158.6 l4.4 2.4 l-2 .4 l1.6 2.6 l-1 .6 l-1.6-2.6 l-1.4 1.4 Z" fill="#444"/><path d="M1091.8 154.0 l-4 -3.5 h11 l4 3.5 Z" fill="#00e000" stroke="#3c3c3c" stroke-width="1.1" stroke-linejoin="round"/><path d="M1091.8 154.0 l-4 -3.5 v11 l4 3.5 Z" fill="#00c000" stroke="#3c3c3c" stroke-width="1.1" stroke-linejoin="round"/><rect x="1091.8" y="154.0" width="12" height="11.5" fill="#00e000" stroke="#3c3c3c" stroke-width="1.3"/><path d="M1096.8 158.6 l4.4 2.4 l-2 .4 l1.6 2.6 l-1 .6 l-1.6-2.6 l-1.4 1.4 Z" fill="#444"/><path d="M1119.3 154.0 l-4 -3.5 h11 l4 3.5 Z" fill="#fff" stroke="#3c3c3c" stroke-width="1.1" stroke-linejoin="round"/><path d="M1119.3 154.0 l-4 -3.5 v11 l4 3.5 Z" fill="#fff" stroke="#3c3c3c" stroke-width="1.1" stroke-linejoin="round"/><rect x="1119.3" y="154.0" width="12" height="11.5" fill="#fff" stroke="#3c3c3c" stroke-width="1.3"/><path d="M1123.3 154.0 v11.5 M1127.3 154.0 v11.5 M1119.3 158.0 h12 M1119.3 162.0 h12" stroke="#4a90f0" stroke-width="1.3"/><path d="M1123.3 154.0 l-4 -3.5 M1127.3 154.0 l-4 -3.5" stroke="#4a90f0" stroke-width="1"/><circle cx="1117.9" cy="152.2" r="1.6" fill="#00e000"/><path d="M1124.3 158.6 l4.4 2.4 l-2 .4 l1.6 2.6 l-1 .6 l-1.6-2.6 l-1.4 1.4 Z" fill="#444"/><path d="M1146.8 154.0 l-4 -3.5 h11 l4 3.5 Z" fill="#fff" stroke="#3c3c3c" stroke-width="1.1" stroke-linejoin="round"/><path d="M1146.8 154.0 l-4 -3.5 v11 l4 3.5 Z" fill="#fff" stroke="#3c3c3c" stroke-width="1.1" stroke-linejoin="round"/><rect x="1146.8" y="154.0" width="12" height="11.5" fill="#fff" stroke="#3c3c3c" stroke-width="1.3"/><path d="M1150.8 154.0 v11.5 M1154.8 154.0 v11.5 M1146.8 158.0 h12 M1146.8 162.0 h12" stroke="#4a90f0" stroke-width="1.3"/><path d="M1150.8 154.0 l-4 -3.5 M1154.8 154.0 l-4 -3.5" stroke="#4a90f0" stroke-width="1"/><path d="M1146.8 153.7 l-3.2 -2.8 h9.6 l3.2 2.8 Z" fill="#00e000" fill-opacity="0.9"/><path d="M1150.8 154.0 l-4 -3.5 M1154.8 154.0 l-4 -3.5" stroke="#555" stroke-width="0.8"/><path d="M1151.8 158.6 l4.4 2.4 l-2 .4 l1.6 2.6 l-1 .6 l-1.6-2.6 l-1.4 1.4 Z" fill="#444"/><path d="M1174.2 154.0 l-4 -3.5 h11 l4 3.5 Z" fill="#fff" stroke="#3c3c3c" stroke-width="1.1" stroke-linejoin="round"/><path d="M1174.2 154.0 l-4 -3.5 v11 l4 3.5 Z" fill="#fff" stroke="#3c3c3c" stroke-width="1.1" stroke-linejoin="round"/><rect x="1174.2" y="154.0" width="12" height="11.5" fill="#fff" stroke="#3c3c3c" stroke-width="1.3"/><path d="M1178.2 154.0 v11.5 M1182.2 154.0 v11.5 M1174.2 158.0 h12 M1174.2 162.0 h12" stroke="#aaa" stroke-width="1.3"/><path d="M1178.2 154.0 l-4 -3.5 M1182.2 154.0 l-4 -3.5" stroke="#aaa" stroke-width="1"/><path d="M1179.2 158.6 l4.4 2.4 l-2 .4 l1.6 2.6 l-1 .6 l-1.6-2.6 l-1.4 1.4 Z" fill="#999"/><path d="M1210.60 165.60 L1207.36 161.28" stroke="#c9980f" stroke-width="1.8" fill="none"/><path d="M1204.60 157.60 L1209.38 159.76 L1205.34 162.80 Z" fill="#c9980f"/><path d="M1225.6 152 h13.4 l3.4 3 l-3.4 3 h-13.4z" fill="#fff" stroke="#333" stroke-width="1.2"/><circle cx="1229.4" cy="155" r="1.1" fill="none" stroke="#444" stroke-width="0.8"/><circle cx="1232.8" cy="155" r="1.1" fill="none" stroke="#444" stroke-width="0.8"/><circle cx="1236.2" cy="155" r="1.1" fill="none" stroke="#444" stroke-width="0.8"/><path d="M1236.80 165.80 L1234.39 162.65" stroke="#c9980f" stroke-width="1.8" fill="none"/><path d="M1231.60 159.00 L1236.40 161.12 L1232.38 164.19 Z" fill="#c9980f"/><path d="M1253.4 151.6 h12.2 l4.2 5.4 l-4.2 5.4 h-12.2z" fill="#e6e6e8" stroke="#b8b8b8" stroke-width="1.1"/><path d="M1265.8 162.6 l3 3" stroke="#b8b8b8" stroke-width="1.6"/><rect x="1288.2" y="150.4" width="16" height="15.4" fill="#e8c040" stroke="#333" stroke-width="1.4"/><path d="M1288.4 153 h15.6" stroke="#333" stroke-width="1"/><path d="M1294.6 151.8 h3.6" stroke="#7a5c08" stroke-width="1"/><path d="M1382.40 155.20 h6.8 l-3.4 3.6 z" fill="#777"/><path d="M1493.4 149.6 l7.6 3.2 v8.4 l-7.6 4.2 l-7.6-4.2 v-8.4z" fill="#fff" stroke="#333" stroke-width="1.3" stroke-linejoin="round"/><path d="M1485.8 152.8 l7.6 3.6 l7.6-3.6 M1493.4 156.4 v9" fill="none" stroke="#333" stroke-width="1.2"/><path d="M1486.4 154 l6.4 3 v7.4 l-6.4-3.6z" fill="#00e000"/><path d="M1493.4 150.4 l1 1.6 l1.8.2 l-1.4 1.2 l.4 1.8 l-1.8-1 l-1.8 1 l.4-1.8 l-1.4-1.2 l1.8-.2z" fill="#c9980f"/><path d="M1557.40 155.20 h6.8 l-3.4 3.6 z" fill="#777"/><path d="M1588.4 150.2 a4.4 4.4 0 0 1 4.4 4.4 q0 2.6-4.4 7.8 q-4.4-5.2-4.4-7.8 a4.4 4.4 0 0 1 4.4-4.4z" fill="#c9980f"/><circle cx="1588.4" cy="154.6" r="1.6" fill="#fff"/><path d="M1580.6 164 v1.8 h16 v-1.8" fill="none" stroke="#333" stroke-width="1.1"/><path d="M1666.60 155.20 h6.8 l-3.4 3.6 z" fill="#777"/><path d="M1696.6 151.8 h8.4 l2 2 v9.6 h-8.4 l-2-2z" fill="#00e000" stroke="#333" stroke-width="1.2" stroke-linejoin="round"/><path d="M1696.6 151.8 l2 2 h8.4 M1698.6 153.8 v9.6" fill="none" stroke="#333" stroke-width="1"/><path d="M1688.00 157.40 L1691.60 157.40" stroke="#c9980f" stroke-width="1.2" fill="none"/><path d="M1694.60 157.40 L1691.60 159.05 L1691.60 155.75 Z" fill="#c9980f"/><path d="M1767.40 155.20 h6.8 l-3.4 3.6 z" fill="#777"/><path d="M1786.6 162.6 h9.2 l-4.6 5z" fill="#111"/></svg>
<div class="t" style="left:835.00px;top:147.73px;font-size:15.5px;line-height:19px;color:#1e1e1e;letter-spacing:-0.097px;">Select</div>
<div class="t" style="left:909.00px;top:147.73px;font-size:15.5px;line-height:19px;color:#1e1e1e;letter-spacing:0.981px;">Mode</div>
<div class="t" style="left:1196.40px;top:147.50px;font-size:7.5px;line-height:9px;color:#aaaaaa;letter-spacing:0.163px;">X,Y,Z</div>
<div class="t" style="left:1255.00px;top:152.90px;font-size:7.5px;line-height:9px;color:#aaaaaa;letter-spacing:-0.508px;">Abc</div>
<div class="t" style="left:1309.00px;top:147.73px;font-size:15.5px;line-height:19px;color:#1e1e1e;letter-spacing:0.406px;">Clipboard</div>
<div class="t" style="left:1405.80px;top:147.73px;font-size:15.5px;line-height:19px;color:#1e1e1e;letter-spacing:-0.028px;">[ Empty ]</div>
<div class="t" style="left:1506.70px;top:147.73px;font-size:15.5px;line-height:19px;color:#1e1e1e;letter-spacing:-0.160px;">Extend</div>
<div class="t" style="left:1601.70px;top:147.73px;font-size:15.5px;line-height:19px;color:#1e1e1e;letter-spacing:-0.431px;">Select By</div>
<div class="t" style="left:1710.80px;top:147.73px;font-size:15.5px;line-height:19px;color:#1e1e1e;letter-spacing:-0.011px;">Convert</div>
<svg class="r" style="left:401px;top:174px;" width="1519" height="500" viewBox="401 174 1519 500"><defs><clipPath id="mclip"><rect x="613" y="223.6" width="361" height="360.6"/></clipPath><mask id="mhalo" maskUnits="userSpaceOnUse" x="610" y="220" width="368" height="368"><rect x="610" y="220" width="368" height="368" fill="#fff"/><path d="M642.8 398.6 647.2 398.1 648.5 399.5 646.3 403 641.4 402.2ZM820.4 218.3 822.8 216.1 827.4 218 821.5 221.5 820.7 220.8ZM650.7 569.4 652.9 569.7 655.7 575.8 654 577.7 646.3 576ZM618.5 251.5 620 249.5 621.4 249.6 622.8 253.2 620.6 255.7ZM968.6 448.5 970.8 447.1 977.1 448.7 978.1 451.3 975.2 455.6 968.2 451.3ZM738.3 398.9 742.1 402.6 741.3 404.6 737.2 405.7 735.8 404.7ZM852.3 304.2 852.6 303.7 858.1 302.1 860.2 303.6 860.3 309.3 856.3 311.7 853.9 310.6ZM636.2 509.9 644.2 513.3 643.7 518.1 639 520.6 635.5 518.8ZM851 398.1 857.6 395.6 858.6 397.6 853.9 402.3 851.5 401ZM919.4 421.8 923.5 417.5 928 419.4 926.7 424.3 919.4 421.8ZM799.6 393.8 806.6 388.2 809.3 395.7 804.8 398.7 799.6 394ZM738.4 438.1 742.8 436.4 744 442.8 741.7 444.3 737.5 441.6ZM683.2 512.6 689.7 513.2 687.2 519.4 681.1 521.9 679.7 519.9ZM928.3 256.6 933.2 252.2 936.3 254.9 936.3 257.4 929.2 260.4ZM780.5 312.4 785.4 313.5 785.1 316.5 780.5 318 778.8 315.3ZM621 565.3 625.4 563.4 628.1 565.2 628.3 569.5 623.9 572.1 622.1 571.1ZM762.2 261.7 764.8 261.8 765.3 263.3 762.8 265 761.9 264.4ZM856.3 277.3 863.5 278.5 863.4 281.9 860 283.6 855.7 280.9ZM952.7 282.2 957.4 285.1 957.6 287.6 954.5 290.2 950.8 288.5ZM732.2 383.7 737.6 381.6 741.1 383.6 736.6 390.1 731.4 386.9ZM958.2 483.7 962.9 479.7 965.2 483.2 961.3 487.3ZM777.9 476.4 783.5 474.9 784.3 475.7 781.5 482.3 777.5 478ZM611.3 218.2 615.5 216.3 617.7 217.9 617.7 218.7 613.9 221.9 611.4 220.9ZM931.6 434.1 937.7 436.1 938.1 437.5 932.2 442.6 929.3 439.7ZM708.3 316.4 713.4 315.7 714.3 318.6 711.9 321.2 710.5 320.9ZM640.4 263.8 647.3 264.8 646 269.6 640.7 270.5 638.1 268.4ZM781.1 253.5 782 252.3 785.9 253.2 785.9 256.1 783.2 257ZM889.7 273 892.6 272.6 895.5 276.2 894.6 279.2 887.4 279.3 887 277.8ZM912.3 272.8 913.5 270.1 918.2 270.6 916.7 277.2 916.2 277.2ZM703.8 487.3 709.3 486.8 709.3 490.7 705.6 492.8 703.1 491.2ZM786.2 542.1 789.1 541.2 791.8 543.3 790 548.6 789.1 549 784.8 546.4ZM670.8 334.3 675.8 329.9 677.9 330.7 678.3 331.5 676.5 335.8 671.7 337.3ZM696.7 586.7 698.2 585.7 702.3 587.4 702.3 590.6 698.4 593.1 696.5 591.3ZM767.8 319.2 772 319.2 774.5 323.2 773.5 326.3 768.3 323.9ZM605.4 354.5 606.6 353 612.4 353.2 612.9 353.8 610.5 358.4 607.8 358.4ZM678.9 531.8 681.3 536.4 679.2 541 677.2 541.7 672.5 538.9ZM886.5 408.5 890.7 408 890.9 413.6 884.8 414.7 884.1 414.2ZM854.2 486.2 860.7 481.4 864.9 485.7 864.3 487.6 856.5 489.1ZM907.6 562.8 912 565.2 912.3 568.1 909.5 570.1 905.4 568.8ZM651 457.6 655.5 454.4 659.6 456.8 655.5 462 651.4 460.3ZM648.5 366.6 651.4 365.3 651.4 369.9 648 371.1ZM913.1 551.8 917.7 551.3 920 554.8 915.4 558.2 912.2 556.4ZM901.1 219.5 902 218.6 907.1 219.8 907.8 224.7 906.3 226 902.4 224.9ZM732.9 265 735.4 263.6 737.1 264.8 735.2 270.1ZM684.9 335.9 688.3 336.7 688.5 340.6 686.9 341.3 684 338.1ZM619.2 539.9 622.3 538.1 628.5 542.6 624.9 545.6 619 543.7ZM845.5 259.1 847.1 257.5 851.8 262.8 850.1 266.9 846.4 266ZM791.6 232.2 797.2 233.8 794.5 238 790.1 234ZM837.3 296.7 841.8 293.8 845.2 299.9 837.2 300.4ZM813.8 455.2 818.6 451.9 821.2 455.8 821 456.2 814.5 458.6ZM721.2 464.6 726.7 461.2 727.7 462 724 467.1 721.1 465.7ZM729.3 252.4 731.8 254.2 731.8 256.7 727.4 259.2 726 258.8 725.7 258.1ZM715 365 719.2 364.1 721.2 367.2 720 370.1 716.6 370.8 714.6 368.9ZM964.5 243.4 967.1 243.8 967.9 248.6 963.4 246.5ZM620.3 418.9 622.5 417 627.3 419.7 626.2 424.3 624.4 424.8 620.6 422.5ZM969.7 562.2 975.7 555.9 979.4 559.1 976.9 566.2 969.9 564.1ZM875.6 226 880.4 227.8 877.3 230.4 874.5 227.6ZM912.3 473.5 916.9 472.2 919.1 473.8 919.5 476.5 918.3 478.1 913.6 478.1ZM640.1 388.2 645.2 386.3 645.9 387 645.3 390.5 641.9 390.9ZM610.6 526.7 617.1 524.3 619.5 525.9 618.8 531 615.4 533.1 610.4 530.3ZM875.8 522.7 878.5 518.4 883.2 523.1 880.5 527.8ZM897.4 299.8 898 299.2 905.6 302.1 903.3 304 897.4 301.3ZM913.5 301 914.5 299.8 921 300 921.6 306.3 919.1 307 913.4 302.5ZM654.7 354.2 657.2 351.8 660.8 356.9 660.3 357.8 656 359 655.3 358.5ZM793.3 312.8 801 313.8 800.9 317 796.4 321.5 792.9 318ZM830.3 431 830.8 430.4 836.8 432.3 837.3 435 834.8 438 831.8 436.9ZM694.8 450.2 696.6 454.8 691.2 457.9 688.9 454.7ZM736.2 507 739.8 505.3 742.3 508.8 741.1 511.6 736 507.6ZM699.1 512.1 705.5 509.5 706.3 510.1 706.2 514.3 704.8 515.2ZM759.7 422.9 764.6 423.6 765.3 426 760.8 429.3 759.2 428.2ZM859 408.3 864.2 403 865.4 403.5 865.7 408.5 861 410.5 859.4 409.6ZM617.9 328.6 619.5 327.1 624.3 329.4 621.9 334.6 618.7 334.7ZM806.2 218.5 808.8 216.8 812.7 219.1 812.8 220.5 807.6 223ZM652 512.9 654.7 510.9 659.4 512.2 661.4 517.3 657 522.2 651.5 518.6ZM904.7 450.1 910.5 451.2 910.9 452.6 904.4 456.3 903.8 455.9ZM960.5 500.5 961.5 499.6 966 502.7 963.1 510 961.9 510 960.1 508.6ZM702.1 447.5 706 445.3 709.1 446.7 709.7 448.9 708.2 452.1 704.4 453.2ZM723.7 500.6 724.6 500.2 728.6 505.1 728.2 506.4 726 507.6 722.6 504.3ZM744.6 267 747.5 270 746.7 273 743.1 271.2ZM938.3 481.2 940.2 478.8 943.8 478.9 945.8 482.4 942.6 485.4 938.9 483.8ZM888 422.1 894 421 895 421.7 894.9 425.3 888.5 428.1ZM909.8 373.1 912.7 372.3 916.8 377 912.1 378.5 909.3 375.2ZM809.1 230.8 816.4 227.4 817.7 228.4 818.8 233 818.5 233.5 813.4 234.9ZM817.8 526.3 823 530.8 823.2 531.9 818 533.4 815.6 530.9ZM868.8 527.6 869.5 527.5 874 532.3 869.2 536.4 867.6 535.7ZM792 556.2 792.6 556 799.6 560.4 791.1 564 790.4 563.5ZM636.3 543 640.1 540.1 646.2 542.4 647 546.1 642.9 549.9 636.3 543.3ZM742.9 223.8 746.4 224.6 746.6 230.7 740.6 232.6 739.6 232.1ZM835 383.8 838.9 383.1 840.1 384.1 839.9 390 835.2 391 831.9 388ZM759.9 539.5 765.5 537.4 765.7 544.4 763.8 545 759.6 541ZM648.2 443.6 649.4 443.5 650.8 444.6 651.2 447.9 646.7 451.1 643.9 449.3ZM762.6 409.2 765.2 408.9 767.7 413.6 765.9 415.9 759.9 415.1ZM793.7 251.9 795.8 250.1 798.8 252 797.5 259 796.2 259.1 793.7 257.1ZM799.4 545.2 800 545.1 804.4 548.6 802.8 553.1 797.7 550ZM615.7 387 617.7 387.5 618.7 389.9 612.1 393.3 611.4 391.7ZM973.8 221.1 978.8 220 979.5 226 977.3 228 973.5 224.5ZM637 366.4 638.8 365 640.7 366.1 640.4 368.9 637.9 369ZM670.4 491.5 673.9 488.9 680.2 490.8 675 498.1 673.3 497.8ZM808.8 315.5 815.6 314.2 818.3 318.8 815.4 320.5 808.8 316.5ZM693.7 552.7 694.8 552.2 698.8 554.1 699.5 557 693.1 556.1ZM896.2 369.8 900 368.6 902.3 371.1 901.7 373.3 896.3 375.4 895.8 375.2ZM757.8 496.3 761.9 495.6 762.4 503.1 759.5 503.8 758.8 503.4ZM657 334.9 659.5 333.7 663.1 335.6 663.8 338.3 658.7 341.7 656.2 338.2ZM793.1 221.5 796.7 219.4 798.5 220 800.6 226.7 793.7 224.6ZM611.9 286.2 613.1 285.2 615.5 286.3 615.2 288.6 614 289.1ZM745.7 500.2 750.2 498.7 750.9 503 748.3 503.8ZM938.2 570.9 944.8 566.9 948 572.3 945.8 575.4 940.9 575.4ZM732.5 558.9 733.9 559.8 734.6 567.3 728.7 566.8ZM970 358.3 977.8 356.1 976.3 364.6 974.4 364.7ZM890.8 343.4 893 343.3 895.6 346.3 895.3 348.6 890.3 349.8 888.4 347.6ZM644.1 432 646.3 429.3 648.8 430.5 647.6 435.6ZM621 458.8 621.5 458.6 627.2 461.5 627.7 463.9 622 468.1 618.8 466.4ZM919.8 564.6 924.6 561.2 927.8 567.8 924 569.6 920.1 567.5ZM770.3 245.4 770.5 244.9 775.5 244.8 776.1 247.2 774.4 249.6 772.9 249.7ZM941.7 548.8 947.3 545.3 952.3 547.5 951.9 552.2 947.1 555.3ZM974.3 434.4 979.2 433.8 981.3 436.4 978.3 441 974.1 439.9ZM863.5 345.6 870.3 344.6 872.5 348.3 870.7 351 864 347.2ZM663 310 668 308 671.6 310.1 669.5 314.4 662.8 314.5ZM876.1 323.4 882.4 325.2 880.6 329.4 876.8 329.9 874.6 326.6ZM873.2 403.2 876.2 401.6 879.3 405.5 877 411 873.6 408.8ZM663.8 393.6 665.2 396.2 661.9 398.7 660.6 397.9ZM644.6 583.6 652 585.3 652.4 588.1 646.7 591.5 643.1 587.3ZM781.9 325.7 787.7 323.9 789.7 325.9 786.9 329.7 781.5 327.1ZM658.7 444.9 664.3 442.4 665.8 445.1 662.7 449.6 659 447.4ZM750.6 250.7 753.9 249 754.7 249.5 754.3 253 751.5 253ZM607 341.9 612.7 340.8 611.4 345.3 607.8 345.3ZM825.5 410 831.2 408.8 833.8 411.3 829.1 415.6 824.7 412.2ZM952.3 579.7 954.7 576.3 958.8 576.2 961.4 584.6 959.3 586.5 954.9 585.5ZM974 521.2 978 520.7 980.5 524 977 529.1 973.2 527.6ZM789.5 405.5 795.6 400.8 800.4 405.2 796 409.1 789.5 406.5ZM749.9 355 752.6 353.3 756.1 357.1 756 357.9 749.7 360.4ZM609 510.1 612.9 510.4 613.4 517.4 607.7 519.5 604.6 516.8ZM781.8 493.3 783.4 490.7 789.1 493.6 789.5 496.5 783.3 498.8ZM770.1 343.4 771.7 342.6 774.3 345.3 772 349.2 771.3 349ZM859.2 265.4 862.6 264.5 866.3 269.2 866.2 270.8 857.5 269.6ZM812 550.4 813.8 549.8 818.7 553.7 816.8 557 810.1 555.8ZM762.4 511.1 765.1 510.5 767.2 515.8 764.6 518.7 761.5 517.6ZM830.9 283.9 834.4 282.2 838.3 286.9 833.6 289.8 830.3 287.3ZM608.7 242.5 611.9 242.2 613.5 245.1 611.8 247.4 607.9 247.5ZM737.5 337.3 738.7 338.6 735.9 343.4 734.1 341.1ZM826.3 556.1 828.4 555.4 832.4 565.4 829.9 566.5 823.8 563.9 823.1 561.8ZM735.2 278.9 735.6 278.2 738 277.4 743.8 280.2 743.3 284.1 743 284.5 736 282.2ZM743.7 316.8 745.6 314.1 748.3 313.9 750.3 316.5 747.9 320.5 745.6 320.5ZM807.3 442.3 811.5 442.1 814.1 445.6 809.2 448.9 807.1 447.8ZM737.9 461.8 741 459.7 744.6 462.6 742.6 466.6ZM766.1 281.6 770.5 281.8 772.5 283.7 770.4 286.8 765.6 286ZM947.6 491.4 951.4 487.8 956.5 493.6 955.3 494.6 948 494ZM958.4 252.9 963.8 255.3 958.5 258.7ZM752.2 464.9 752.6 464.8 756.6 469.8 755.3 473 754.7 473.2 750.1 469ZM772 404.9 773.8 401.9 776.5 401.3 781.7 405.5 781.8 407.7 779.4 410.3 774.7 410.1ZM896.3 235.2 899.9 232.3 903.8 233.4 904.3 236.7 900.5 240.5 899.5 240.6 896.5 237.7ZM864.2 219.1 869.5 218.9 869.8 220.6 867.1 224.7 865.8 224.9 863.5 222.6ZM685.9 496.5 688.8 497.9 688.4 505.3 683.1 504.8 681.5 502.5ZM862.2 355.2 865.5 357 863.6 359.9 860.5 358.4ZM716.1 534 717.6 533 723.1 535.5 723.2 536.2 722 537.6 715.9 537.5ZM700.2 220.5 705.2 217 709.2 220.6 705.6 227.3 701.9 225.5ZM921.1 243.9 923.7 242.3 927.5 246.9 923.4 250.5 920.9 249.2ZM975.2 294.5 977.3 292.2 980.2 292.4 981.9 296.5 980 298.4 975.4 296.7ZM709.2 433.4 713.3 432.4 716 434.7 715.9 435.7 711.7 439.3 709.5 438.3ZM712.6 353.2 715.6 350.8 716.3 350.9 718.7 354.9 718.1 356.4 712.8 357.5ZM632.3 346.4 637.3 345.3 637.9 348.9 636.7 350.2 632 348.7ZM955.8 308.7 957.7 306.4 963.2 307.9 963.9 312.5 958.5 313.3ZM696.1 464.1 700.4 461.6 701.3 467.1 699.7 468ZM947.1 312.3 948.8 312.2 952 317.8 951.3 319.2 944.6 320.4 944.3 320.1ZM742.6 475.9 743.4 474.5 744.3 474.3 748.7 478.3 747.7 480.2 743.3 480.2ZM907.1 436.7 909.8 436.3 913.1 441.4 911.8 443.5 905.2 442.2ZM654.8 266.6 660.1 267 663 272.2 660.5 274.8 655.3 274.4 653.5 272.1ZM890.3 489.4 894.6 485.4 900.4 489.5 898.3 492.1 890.4 490.5ZM948.3 515.2 955 514.4 955.7 515 952.2 522.5 950.9 522.6ZM762.4 250.7 764.1 250.2 766.2 253.6 765.9 254 762.1 253.9ZM952.3 472 957.5 471.4 958.9 472.8 952.5 478.3 950.6 475.1ZM822.1 476.9 829 473.7 829.9 474 828.8 479.9 825 481.4 821.8 477.5ZM745.2 342.9 747.4 347.3 745.9 348.3 742.9 346.8ZM814.3 386.3 816.6 385.1 822.8 388.7 816.8 393.5ZM872.2 571.5 874.9 569.8 879.1 571.6 879.4 574.4 874.7 577 873.1 576.3ZM936.2 350.9 937.5 349.6 943.5 351.2 943.1 357.1 942.2 357.7 940.8 357.6ZM739.9 574.1 740.9 574.3 743.3 582.2 740.7 584.1 739.5 584ZM743.3 519.4 748.8 523.4 747.8 526.3 744.3 527.1 741.1 523.6ZM625.1 384.9 627.8 381.6 629.7 381.7 631.8 385.5 626.2 387.6ZM800.4 510.7 805.6 513.6 805.6 514.4 800.4 517 798.6 513.9ZM933.5 267.1 939.6 264.5 940.2 265.1 939.9 271 937.1 271.9ZM840.4 443.5 842.9 440.5 848.4 442 847.2 445.4 840.6 443.9ZM643 527.3 647.2 525.1 653.7 529.4 648.5 534.9 643.2 533ZM804.9 582.5 809 579.6 810.3 579.8 813.3 584.2 812.3 587.5 806.3 589.5 804.8 588.2ZM666.5 405.1 671 401.5 672.1 401.8 672.7 403.5 668.2 407.5 666.8 407ZM716.1 453.6 722.5 454.7 718.1 457.3 715.6 454.6ZM837.4 398.5 842.7 397.3 843 397.6 843.7 401.7 838.7 405.2 836.7 403.2ZM727.9 394 731 395.9 728.2 402.6 725.6 400.9ZM741.8 560.5 746.4 559.3 747.4 560.1 746.8 565.2 743.5 566.9 742.4 566.6ZM767.4 387.2 773.4 385.3 776.6 388 774.5 393.7 772.8 394.1ZM692.9 297.9 696.4 293.5 700.9 294.9 701.7 297.6 699.3 301.1 694.8 300.8ZM972.1 318.4 978 317.8 978.9 324 978.4 324.5 973.2 323.2ZM948.6 428.9 954.2 429.4 952.2 437 949.2 438 945.8 436.1 945.1 433.8ZM973.6 504.7 975.2 504.4 978.7 508.8 977 513 971.7 513.6 970.4 512.6ZM810.2 486.2 812.6 483 815.8 482.4 819.6 487 819.3 487.9 812.6 491.1ZM877.3 384.8 881 381.1 883.5 382 882.5 387.4 879.8 388.6ZM848.1 289.1 851.3 287.3 855.6 290.1 855.1 294.8 851.9 295.8ZM782.4 569.7 785 569.3 787 570.7 787.7 574.7 781.6 580.6 779.7 578.5ZM694.8 521.4 695.8 519.2 700.8 521.9 700.4 524.9 699.2 525.6ZM973.1 255.6 973.9 254.5 979.9 254.4 979.3 259.6 977.8 260.9 976.5 260.7ZM655.7 282.3 659.1 282.5 660.5 287.9 655.6 289.6 653.3 287.8ZM737.6 240.8 739.3 246.2 736.2 247.7 733.8 246ZM968.9 344.4 974.6 345.2 974.8 348.8 966.9 351.1 966.2 349.3ZM847.8 385.3 851.1 384.4 854 388.6 847.6 391ZM885.4 514 887.7 511 892.2 512.3 890.8 518.2 889.4 518.4ZM746.4 424.4 751.7 420.1 752.2 420.2 751.4 427.1 747.3 428.4ZM622.9 320.1 627.6 315.1 628.4 315.2 630 317.1 627.9 322.4ZM676.2 318.4 677.8 315.2 684.4 317.3 679.6 323 677.9 322.3ZM719.6 421.7 721.9 421.3 725.2 424.2 724.8 426.4 720.6 428.4 718.6 426.7ZM726.5 334.1 729 331.2 731.3 332.6 727.7 336.5ZM937.8 448 943.1 443.5 944.8 444.5 944.5 451.7 943.8 452.3ZM879.3 583.4 883.3 581.2 884.4 584.6 881.9 587.8 880.3 587.7ZM675.1 562.8 676.3 562 682.8 564 682.9 567.8 681.1 569.6 676 568.8ZM686.4 410.6 687.9 410.1 690.8 412.5 688.1 417.8 687.1 417.8 685.7 416.5ZM865 511.2 867.2 510.5 871.3 515.2 868.5 519.7 866 520.2 864.1 519ZM693.8 387.5 697.1 387.2 696.9 392.7 692.7 393.2 691.7 392ZM608.9 316.6 609.6 316.5 614.8 320.9 612.7 322.9 606.8 321.6ZM831.1 502.6 835.1 502.6 835.9 503.6 832.1 510.5 828.4 509.2 827.7 507.8ZM946.3 328 951.9 327.1 954 331 950.9 333.4 946 330ZM655.1 403.6 658.7 405.9 659.1 408.2 656.2 410.6 653.5 409.9 652.6 407.7ZM826.9 489.8 827.1 488.9 831.6 487.2 835.7 490.2 834.2 494.8 830.8 494.8ZM843 569.4 844.6 568.7 851.4 571.6 850.5 575.5 846 575.9ZM785.5 519.1 786.3 518.1 791.9 518 794.5 522.3 791.5 523.9 785.8 520.5ZM647.2 556.5 652.2 551.9 656.7 553.6 658 557.6 654 561.9 651 561.6ZM765.8 552.5 769.4 551.4 771 552.2 770.3 559.2 767.6 559.8 764.6 555.9ZM716.8 445.3 719.8 442.7 723.9 446.1 723.5 446.9 716.9 445.9ZM924.5 482.7 925.1 482 930.8 483.4 931.2 485.2 926.7 489.4ZM833.4 573.5 835.8 572.4 839.2 579.8 836.3 584.6 835.8 584.5 832.1 580.7ZM633.7 238.5 640.4 236.6 639.9 242.6 633.7 238.6ZM821.7 571.5 825.6 573.1 824.5 578.6 819.5 579.4 817.4 576.4ZM860.9 318 864.5 315.8 869.7 318.2 867.5 323.3 861.8 323.9ZM637.4 376.9 642.3 376.6 642.8 377.1 642.6 378.9 638 380.6 636.6 378ZM793.9 378.1 799.1 378.3 801.3 382.5 795.7 387 792 383.9ZM837.8 308.2 845.1 307.7 846.1 311.7 841.6 314.7 837.6 311.1ZM932 312 939.7 309.5 937.3 316.5 933.7 316ZM631.6 332.3 634.9 333.9 635.5 337.7 630.1 338.8 629.1 337.7ZM963.2 265 967.9 262 969.2 263.8 966.4 266.7ZM701.6 574.7 703.2 573.2 707.2 574.5 708.2 578.8 705.7 580.4 701.6 578.6ZM730.6 533.6 734.2 528.6 734.9 528.4 738.4 532.3 736.8 536.2 730.8 534.2ZM606.7 552.7 609.7 552.4 610.4 558.6 609.4 558.8ZM677.3 273.6 681.1 270.1 682.2 270.2 684.7 277.2 680.7 278.6ZM819.5 256.4 825.2 254.3 826.9 257.4 825 261.7 822.1 262.6 819.2 260ZM930 355.5 933.3 360.4 930.6 362.5 927.2 359.1ZM716.9 391.6 720.3 392.3 718.1 398.7 717 398.8 714.9 397ZM699.2 431.8 700.3 431.7 701.3 432.4 701.7 438.7 697.3 441.3 695.1 437.8ZM891.6 581.4 895.3 580 896.1 583.8 891.9 582.4ZM927.5 576.5 931.4 574.7 934.3 579.4 931.2 584.9 929.6 585.4 926.8 582.2ZM843.5 491.7 847.4 490.2 850.7 494.4 849.3 500.9 848.9 501.1 842.7 499.7 841.4 497.9ZM825.8 237.3 833 236.9 834.7 239.5 828.8 242.8ZM605.4 497.3 610.9 491.7 614.1 492.4 615.1 502.7 609.1 502.3ZM666.9 510.1 671.8 505.5 674.4 506 676.4 508.9 673.1 515.7 668.7 514.8ZM805.9 374.5 808.4 370 814.3 369.6 815.4 370.8 813.4 378 809.1 380.2ZM628 299.9 631.4 302.4 628.4 307.3 625.9 304ZM715.5 339.1 717.7 336.8 719.2 337.1 720.6 339.6 717.4 343.2ZM874.6 270 880 266.5 882.6 269.8 881.1 272.3ZM765.1 435.9 770.2 432.1 773.3 433.6 769.5 439.6 765.3 437.1ZM974.7 241.9 977 239.8 979.6 242.6 978.6 246.6 975.5 246.6ZM622.2 266.6 628.5 269.7 625.7 271.8 622 268.3ZM667.1 263.6 671.4 257.3 675 265.1 670.7 269.1 670.1 269ZM623.4 286.2 624.6 285.5 627.5 287.8 625.9 291.7 623 289.6ZM670.6 389.6 674 387.6 676.2 391.7 673.9 394.2 672.8 393.9ZM849.8 334.5 855.1 333.4 856.9 341.1 849.7 341 848.6 339.6ZM662.8 240.9 667.4 238.2 670.1 239.5 669.9 248.6 662.3 244.1ZM689.6 267.9 692.6 265.7 695.3 273.6 692.4 275.7ZM778.8 552.7 779.7 552.4 784.3 555.2 782.8 561.7 780.3 562.1 778.1 560.5ZM871.3 277.1 879.6 280.1 879.7 280.9 872.9 283.4 871.2 282.3ZM607.4 228.8 608.3 228.1 611.4 229.3 612.5 233 611.7 234.4 606.8 234.8ZM777.4 333.7 784.6 337.3 785.1 340.2 780.7 340.6 776.8 336.5ZM867.3 232.6 868.2 232.4 873.1 237.2 873 237.7 870.5 239 866.5 235ZM687.6 471.8 690.1 469.1 694.4 473.8 693.9 475.5 689.9 476ZM808.5 405.6 814.7 401.5 818.2 407.1 816.9 410.7 815.1 411.5ZM952 240.8 957.1 238.5 957.7 239.4 955.4 245.6 954.4 246.1 953.3 245.5ZM674.5 422.8 680.1 422 680.8 422.6 678.2 427.9 676.8 427.6ZM898.2 477.6 904.7 475.3 906.4 481.2 904.9 483.1 898.2 478.4ZM638.2 437.1 641.1 440.1 638.3 443.8 636 441.7ZM723.6 347.9 726.8 344.4 730.3 349 725 350.2ZM932.7 494.4 936.3 491.2 939.9 492.7 940.6 496.6 934.4 497.4ZM880.9 311.5 885.4 313 885.7 314.2 884 317.6 877.6 315.7ZM755.1 271.7 757.4 270.8 759.2 272 759.5 274.5 754.7 273.5ZM832.5 539.2 838.1 539.1 838.6 539.6 838.2 545.1 832.7 547.3ZM914.3 576.3 916.7 574.5 919.7 576.1 919.2 580 914.7 580.6ZM690.1 483.9 695.2 483.2 696.4 484.7 695.3 490.3 692.9 491.2 687.8 488.8 687.5 488.1ZM640.9 410 645.5 410.8 646.1 412.4 643.2 415.8 639.8 414.1ZM625.9 409.5 629.1 406.1 633.7 406.8 631.9 413.3 625.9 410ZM807.3 339 811.7 338.2 814.2 340.7 813.1 346 806.8 346.1 805.1 342.8ZM729.6 479 735.2 479 735.5 480.9 729.6 479.1ZM793.3 362.1 798.4 361.6 801.5 366.3 799.2 370.5 793 370.3 792.3 369.3ZM638.8 305.3 641.4 307.3 640.8 312.6 636.3 312.5 635.2 311.2ZM740.6 546 744 548.1 743.7 551.9 738.3 553.4 737.6 552.9ZM938 280.8 938.5 279.7 943.2 278.1 945.4 279.5 942.9 287.5ZM702 475.5 705.9 473.6 708 474.3 708.3 479.1 702.3 479.6 701.2 478.2ZM722.2 584.4 723 584 729.7 588.5 728.8 589.6 723.1 589.1ZM742 488 747.4 488 748.6 491 743.7 492.6 741.7 489.5ZM863.4 290.6 867 288.8 868.7 290 869.2 295.3 864.6 297.1 862.9 295.9ZM932.8 323.8 937.8 324.4 938.8 325.7 938.2 329.5 935.3 331.6 929.3 329.4 929 328.7ZM632.1 227.5 636 225.3 636.7 229.5 632 230.9ZM772 449.9 775.9 452.3 775.7 455.1 772.1 456.6 770 453.9ZM701.3 534.6 701.8 533.1 704.1 531.8 708.3 534 708.1 537.7ZM699.9 542.6 703.5 544.2 701.2 546.7 699.3 545.7ZM607.1 302.9 608.9 302.5 610.6 304.8 608.3 308.8 607.7 308.9 606 307ZM659.3 366.1 661 365.7 663.6 370.1 660.6 371.7 659.2 370.7ZM725.9 358 729.9 357.2 731.4 361.9 727.5 362.6 725.4 359.3ZM935.9 419.8 937.5 419 939.6 419.5 942.2 424.5 939.3 428.5 934.2 426.8ZM821.8 357.1 829.1 357.4 829 361.8 824.6 365.6 821.3 365.7 820.1 364.4ZM917 398.6 924.8 394.5 926.2 398.3 921.2 402.1 917 399.6ZM886.9 570.7 888.9 569.1 893.7 572.2 887.5 574.6ZM831.2 370.3 833.2 368.5 837.2 371 836.5 375.6 834.7 375.9ZM690.6 563.6 697.8 564.7 698.1 567.3 696.7 568.5 690.6 566.5ZM900.2 512.2 901.4 511.6 904.7 518.4 901 522 898.4 520ZM675.4 372.8 679.4 369.4 680.2 369.5 683 373.1 682.7 374.6 677.5 376.6ZM943.4 296.1 943.9 295.4 945.8 294.8 951.7 297.5 952.2 300.8 949.2 304.4 945.8 304.5 944.3 303.1ZM925.8 408.4 931.3 404.2 932.8 412.6 932.4 412.8 926.1 410.1ZM676 344.1 678.3 343.4 681.5 346.9 681.3 347.6 677 348.3ZM609.2 477.6 612 473.2 613.8 472.7 619 475.3 620.8 482.8 617 485.1 612.3 484ZM714.1 511.1 717.3 510 721 513.6 720.8 514.2 717.7 516 714 514ZM673.7 413 677.8 409.4 678.6 409.8 678.1 414.4 674.5 414.7ZM902.8 422.5 907.3 420.6 911.7 423.1 911.9 424.1 909.3 428.5 905.5 429 902.7 426.3ZM635.9 565.1 641.5 561.8 644.1 565.4 640 571.4 636.1 569.3ZM891.9 435.1 897.9 432.5 899.6 434.3 897.8 439.9 894.4 439.6ZM723.8 435.6 727.6 433.7 730.8 436.5 729.8 440.5 723.8 435.8ZM745.3 239.3 750 237.8 750.2 242.1 746.8 243.8ZM643.9 225.6 649.6 224.5 648.2 229.5 645.3 230.5 644.7 230ZM658.5 296.9 663.8 295 664.2 301.1 659.9 302.8 658 301.3ZM844.4 430.7 847.1 427.9 851.2 430.7 850.8 434.6 844.8 432.9ZM830.8 530 836.7 523.5 836 531.4 831 531.4ZM620.3 342.5 622.8 342.4 624.6 344.4 624 349.3 623.3 349.9 619.5 349.6 618.6 348.5ZM626 369.9 628.1 368.2 629.5 368.5 630.9 372.5 630 373.9 628.3 373.8ZM619 227.7 621.9 225.4 624.3 227.1 624.2 229.5 619.6 229.5ZM629.1 355.9 634.2 357.6 634.3 358.6 631.4 361 630.3 360.7ZM893 310.9 894.8 308.7 899.6 310.9 899.3 313 893.1 311.5ZM888.8 287.1 895 287 893.8 292.6 892.8 293.4 889.7 292ZM704.9 387.9 709.8 388.1 707.5 394.6 705.1 394.8 704.6 394.4ZM615.9 376.8 618.8 373.1 621.3 377.3 619.2 379.9 617.2 379.3ZM819.9 541 824.7 539.6 825 548.3 824.5 548.5 819.1 544ZM620.6 508.6 628.5 509.2 627.7 518.2 624.1 519.6 621.3 517.8ZM816.3 421.9 817.4 419 819.5 418.1 825.5 422.7 825.6 424.5 824.3 426 819.5 426.1ZM617.4 551.4 621.8 552.8 621.8 556.4 618.2 558ZM698.2 415 699.6 414.9 701.1 416 698.6 424 695.3 420.8ZM807.2 563.2 815.9 564.8 816.3 565.9 811 572ZM676.9 462.9 682.3 458.9 685.2 462.9 681.2 467.2 677.7 466.9ZM822.4 399 827.8 394.8 829.8 396.7 829.1 401.2 824.4 402.2ZM833.3 422.3 838.2 417.8 842.3 421.7 839.2 424.9 833.3 423ZM729.8 451.7 731.6 448.1 732.7 447.7 737.7 450.9 737.5 452.6 732.7 455.9 730.4 454.3ZM622.2 396.9 623.3 400.8 621.5 402.8 616.9 399.6ZM787.8 277.3 788.7 277.3 791 280.1 786.9 283.7 784.4 282ZM819.1 465.2 821.9 464.2 823.6 467.6 820.9 468.8ZM649.9 321.8 656.4 320.8 655.9 326.8 654.1 327.6 649.8 324.4ZM613.6 431.9 617 429.5 619.4 430.9 618.2 436.2 615.5 436.1ZM635.1 289.9 637.2 289.3 639.4 290.9 637 296.9 633.3 294.2ZM779.3 375 786.4 374.5 786.8 375 784.4 382 782.2 382.5 778.5 379.4ZM685.3 440.7 688.1 441.2 689.9 444.1 684 448.6 682.4 446.1ZM688 425.6 689 425.6 692 428.4 688.7 433.4 685.6 432.9 684.9 431.9ZM731.5 322.6 733.4 320.2 736.8 320.3 738.6 324 736.7 326.8 731.7 323.7ZM781.4 432.1 785 428.7 787.7 429.4 788.7 435.6 788.1 436.2ZM837.4 476.2 841.4 476.9 843.7 483.3 840.9 484.3 836.5 481.1ZM692.6 237.8 699.2 232.8 700.9 233.7 699.1 241.3 693.5 240.5ZM690.2 322.6 692 328.6 691.1 329.4 685.5 328ZM836.9 359.3 843.5 358.5 846.3 362.1 846.1 362.6 841.7 364.7 836.8 361.6ZM716.6 223.3 719.2 223 721.3 228.9 718.1 232.4 713.3 229.4ZM831.8 250.1 837.3 247 841.2 252.4 839.9 253.7 833.6 253.4ZM799.2 475.6 801.7 473.1 805.7 479.3 803.9 481.6 802.3 481.4ZM833.7 261.2 838 261.4 838.7 267.2 837 268.3 832.5 264ZM729 574.7 732.1 574.9 731.8 580.5 727.9 577.9ZM626.8 474.2 632.3 470.2 636.3 472.4 636.8 475.5 628.1 479.9ZM758.5 447.2 762 444.2 765.2 446.1 762.9 450.7 760 450.9ZM739.6 254.7 743.1 253 744.6 256.6 743.1 259.1 742.6 259.2 739.6 257ZM935.3 522.6 936.9 518.9 941.1 518.4 943.6 525.6 937 525.3ZM740.3 413 742.8 412.3 745.1 415.4 741.6 418.2 740 417.5ZM606.9 329.6 610.3 330.4 610.6 333.3 605.2 334.3ZM749.6 511.5 754.7 510 753.6 517.3 748.7 513.7ZM882 370.4 883.6 367.5 885.9 366.8 888.4 368.7 888 375.2 883.1 373.6ZM757.9 238.7 762.1 237.6 763.7 241.1 763.1 242.4 759.5 243.4 758 242.4ZM844.9 371.8 847.7 370.5 850.7 375.5 850.1 376.7 844.9 378 844.1 377.3ZM705.7 305.6 707.7 302.6 713 303.8 714.2 306.9 713.7 307.8 707.1 308.7ZM795.3 300.5 800.5 299.2 801.4 300.4 800.3 305.9 795.4 305.2ZM780.6 302.2 787.4 299.5 787.7 306 781.6 304.7ZM794.9 570.9 800.8 568.3 803.2 574.1 800.7 576 795.4 573.4ZM939.4 467.3 942.7 464.7 945.3 468.6 943.9 471.1 941 471ZM947.1 501.7 952.6 502.2 952.4 506.9 948.6 507.3ZM853.5 365.1 853.7 364.6 854.8 364.3 861.6 367.7 862 369.2 861.6 369.7 857 370.8ZM639.4 499.6 645.5 496.4 649 498.2 649.8 504.8 647.8 506.3 638.6 502.5ZM846 583.7 851.8 583.2 853.7 585.6 849.9 589.2 843.7 587.5ZM718.5 558.1 718.9 557.4 724.7 555.7 725.3 556.1 722 562.8 720 562.3ZM672.6 577.6 673.9 576.4 679.4 577.2 680.1 580.2 675.5 585.1ZM686.9 574.9 687.9 573.8 693.8 575.8 693.8 579.2 692.3 580.3 687.7 578.5ZM920.2 363.6 920.7 363.5 926.1 369.1 922.3 371.4 918.6 367.2ZM893.1 560.4 894.8 559.3 899.6 561.8 898.2 565.8 892.9 562.3ZM716.1 545.3 720.5 545.4 721 548.7 718.2 549.5ZM698.2 322.1 701.7 320.7 703.2 323.6 700.1 326.8 699.6 326.7ZM608 266.1 614.4 266.4 614.2 267.5 611.3 269.6 608.2 268.4ZM809.2 268.1 814.4 266.2 816.9 268.3 815.9 272.6 813.5 273.8 809.5 271.3ZM900.4 248.6 905.3 255.4 905.1 255.8 899.6 256.4 897.8 253.9ZM671.6 294.6 675.6 293.5 678.5 297 674 302.5 672 301.4ZM827 517 830.8 518.3 826.3 523.3 823.9 521.3ZM888.2 498.8 888.6 498.1 896.5 499.7 897.4 504.9 896.4 505.4 889.4 503.3ZM865.1 417.2 869.4 415.5 871.7 416.9 867.7 422.9 865.9 422.2ZM722.3 269.8 724.8 266.6 728.4 273.9 723.9 273.5ZM933.9 369.9 939.8 365.3 941.2 372.3 938.4 374.2 933.8 370.2ZM853.4 229.2 858.1 228.1 859.9 230.1 858.9 233.1 855.3 234.6 853.4 233.2ZM722.8 238.7 727.1 234.1 731.9 235.3 727.3 241.7 722.8 238.7ZM731.9 496.8 736.1 495.1 737.6 497.7 734 499.4ZM732.9 468 735.7 471.2 730.6 471.2ZM645 344.4 650.3 343.3 652.1 345.9 649.5 348.3 645.5 347.1ZM759.2 394.1 761.8 392.8 766.6 398.8 765.2 401.1 761.4 401.4 758.1 398.2ZM676 474.6 680.4 475 683.3 480.1 681.5 483.1 676.8 481.6ZM949.8 530.9 950.1 530.6 953.6 530.2 958.8 534.3 957.5 539.5 956 540.6 950.6 538.3ZM732.9 425.4 735.8 424.1 738.6 425.5 739.5 429.3 735.9 430.7 732.5 427.6ZM621.8 491.3 625.1 489.3 631.8 497.8 630.8 501.6 622.7 500.9ZM770.9 583.1 773.5 583.3 775.5 585.4 770.2 591.7 765.8 588.7ZM783.6 528.2 787.1 530.3 786.5 533.8 784.1 534.5 781.1 531.8ZM900.4 264.2 905.5 263.6 906.8 266 904.9 270.1 901.3 271 898.7 267.9ZM709.6 499.5 713 497.6 715.9 499.4 715 502.5 711 503.9 709.9 503ZM757.2 304.4 757.7 304.2 760.5 306.1 760.7 312.5 756.9 312.4 754.7 309.4ZM966.5 535.5 969 534.4 975.3 536.9 976.4 539.8 973.8 544 965.5 539.8ZM729.8 410.3 732.5 412 732.2 417.2 730.1 418.1 727.6 416ZM965.2 284.7 969.1 281.8 970 282.2 971.4 287.1 970.1 288.6 965.3 286.6ZM960.1 547.2 961.2 546.4 969.9 550.7 965 555.8 959.7 552.4ZM882.3 475.1 889.1 475 890.4 476.3 890.4 478.7 885.8 483 881.1 479.8ZM878.9 420.1 880.1 421 880.8 430 879.1 430.5 873.8 428.5 873.6 428.1ZM824.5 270 826.8 269.3 832.2 274.5 827.9 276.7 823.7 273.6ZM808.3 469 811.3 467 814.8 474.1 814.5 474.7 812.3 475.1ZM789 464.9 793 463.1 796.3 467.5 792.8 471 790.5 470.9 788.7 469.1ZM770.1 524.2 773.2 520.8 778.1 521.6 778.2 522.2 773.9 528.6 771.4 528.8ZM880.9 237.6 885.3 233.8 888.5 235.8 888.6 237.1 882.7 239.9 880.8 238.4ZM907.5 310.6 909.3 309.2 913.5 312.5 912 315.7 906.9 314.8ZM642.4 250.1 643.6 249.5 648.2 251.8 647.7 256.9 640.9 256 640.4 255ZM718.5 406.5 719.9 406.4 722.3 408.1 720.2 413.7 717.5 414.1 716.1 413ZM720.4 284.5 723 281.3 727.8 281.7 728.5 284.4 725.2 288.8 723.4 288.8ZM903.2 348 910.2 345.4 909.1 351.3 904.2 352.2 902.8 350.6ZM928.8 299.7 936 299.3 936.3 302.4 929.3 304.7ZM862.7 331.6 868.2 331.1 870.5 334.5 869.5 336.8 864.1 337.7ZM931.3 456.3 932.8 454.1 938.5 458.1 934 461.6ZM858.5 241.7 861.1 240.6 865.1 244.7 864.5 246.4 858.5 244.2ZM901.6 334.3 906 336.1 906.5 338.5 900.9 340.5 899.4 338.8ZM874.5 542.1 880.7 536.8 883.4 539.8 876.6 547.8ZM941.9 381.3 946.2 378.3 951 379.5 950.5 386.1 947.5 387.5 941.8 382.1ZM605.3 420.6 607.6 418.4 612.6 420.1 612.8 422.9 608.2 426.2ZM807.6 535.9 809.5 535.7 812.4 538.9 811.4 542.3 809.7 542.9 805.7 539.7ZM680.8 383.7 684.8 382.1 686.6 384.3 684.7 388.6 683.3 388.5ZM750.6 435.5 754.4 434.4 757.3 436.4 757.5 437.8 752.8 441.8 751.7 441.5ZM872.3 360.9 876.1 364.9 875.5 366.1 869.2 365.9ZM742.7 301.8 744.7 299.7 749.3 302.7 747.6 306.1 745.6 306.3ZM772 420.9 774.2 417.9 778 418.1 779.4 423.2 776.2 426.3 773 424.8ZM743.8 393.4 746.4 389.7 751.4 393.1 750.5 396.3 747.7 397.2ZM846.4 541 851 539.7 853.8 541.5 852.2 548.3 849.5 548.8 845.9 546.1ZM806.7 353.9 814.4 353.8 812.7 361.9 808.1 362.2 804.9 357.3ZM971.5 272.7 975.5 268.5 977.2 272.5 973 275 971.9 274.5ZM607.6 568.1 608.9 566.7 613.2 566.1 614.2 571.3 609.8 573.3 607.3 570.1ZM691 250.3 692.5 248.2 696.9 248.9 696.8 256.5 694.6 257.7ZM745.2 328.2 748 328.3 750.1 331.4 746.3 334.6 745.4 334.5 742.9 331.5ZM728 542.7 728.7 541.7 733.3 543.3 730.3 550 728.9 549.1ZM704.7 249.4 709 250.7 709.5 253.2 705.9 256.2 704.6 255.9ZM762.5 345.4 763.5 349.9 761.2 351 759.2 348.9ZM902.4 576 906.6 577.3 907 581.8 903.6 581.5ZM794.9 530.9 797.4 529.6 800.4 532.9 798.2 537.5 797.4 537.7 794.2 535.2ZM696 335.4 697.5 334.2 698.9 334.5 700.5 337.3 697.7 341.1 696.3 340.5ZM822.2 294.9 825.5 293.5 829.5 296.4 829.4 299.6 822 299.6 821.3 298.3ZM696.9 282.1 701.1 279.1 702.8 279.2 705.8 283.8 702.7 287.3 698.1 285.9ZM688.2 540.1 692.5 540.1 691.4 545.2 690.6 545.5 686.9 542.9ZM907.2 244.8 909.3 242.7 913.3 244.3 913.1 249 911 250ZM728.9 487.1 732.5 488.1 729.2 489.5ZM947.1 417.1 953.1 411.8 953.6 411.8 954.5 421.6 949.2 421.1ZM882.2 302 886.5 299.2 889.6 300.5 889.7 302.6 887.4 305.4 882.7 303.9ZM910.9 523.3 915 523.7 915.6 524.5 914.6 529.7 908.5 530.9 905.9 528.2ZM748 290.5 756.1 292.5 755 296.9 748 292.6ZM605 458.8 608.2 455.1 613.1 457.9 611 465.3ZM792.6 580.8 797.1 582.9 797.1 586.8 790.3 588.6 787.6 585.6ZM607.9 366.2 610.9 366.2 612.5 368.5 609.7 372.1 605.9 371.5 605.3 370.7ZM751.8 548.4 754.6 547 758.3 550.4 757.2 553.2 752.6 554.3 751.4 553.3ZM615.9 275.9 617.5 274.8 621.3 278.3 619.4 279.5 616.1 278ZM701.4 352.5 704.8 354 704.9 356.2 699.4 357.1ZM825 447.4 829.2 444.3 832.9 445.6 833.3 446.9 831.6 450.6 827.5 451.2ZM840.8 463.9 844.8 464 845.3 466.8 843 469.3 839 468.6ZM836 217.4 842.8 217.4 842.8 220.4 838.4 221.5 835.9 218.5ZM859 431.2 862.6 429.3 866.3 430.8 861.9 437 858.5 436ZM667.4 361.1 667.9 360.1 670.6 359.5 673.2 364.4 670.6 366.6ZM680.3 548.9 681.4 548.6 685.9 551.8 685.1 556.5 679.8 554.9ZM709.9 275.7 712.2 272.7 715.2 272.9 716.8 276.6 713.7 280.4 712.8 280.3ZM904 497.5 906.4 494.5 912.2 499 911.9 500.5 905 503.1ZM927 473.3 931.9 469.7 933.8 474.2 932.6 475.8 927.1 474.4ZM749.4 382.4 752.8 379.2 757.3 379.8 760 384.5 759.8 385.1 756.2 386.9ZM818 437.8 820 433.9 823 433.9 824.1 438.4 820.5 441.1ZM970.8 306.2 972.9 304 977.5 305.8 978.2 309.9 971.5 310.6ZM659.6 583.2 662 580.3 665.4 580.5 667.9 587.1 663.7 589.9 660.2 587.8ZM694 400.9 699.4 400.3 697.6 407.2 696.8 407.3 693.1 404.3ZM963.7 458.5 964.3 458 972.5 463 964.4 467.3 963 465.8ZM791.5 478.7 792 478.7 794.9 484.2 792.3 486.4 788.9 484.7ZM656 251.9 658.1 250.6 664.1 254.2 660.6 259.3 655.3 258.8ZM711.6 261.6 714.5 259.2 718.4 260.8 718.7 261.6 716 265.2 713.1 265ZM901.4 534.7 903.1 536.5 902.6 541 897 542.3 894.9 540.1ZM648.3 237.7 650.6 236.9 655 240.3 654.5 243.7 652.2 245.1 647.8 242.9ZM715.8 473.6 717.3 472.6 722.2 474.9 722.5 475.5 721.6 478.8 716.1 479.2ZM901.1 381.9 903.8 380.8 906.4 383.8 905.5 386.6 902.6 386.8ZM851.4 556.4 854.3 555.9 856.4 557.5 856.5 564.6 855.7 565 849.4 562.3ZM943.7 241.2 944.1 241.4 945.4 246.2 940.7 248.5 939 246.9ZM872.9 505.3 874.1 502.4 881 502.2 881.9 505.7 878.3 510.6 877.7 510.6ZM947.5 363.4 953.1 364.9 953.4 372 948.9 370.9ZM653.4 389.1 658 388.4 653.9 393.8 652.8 392.7ZM736.8 353.3 737.3 352.7 742.1 355.1 741.9 359.7 739.2 360.5ZM908.9 462.7 914.3 459.6 913.9 465 909.8 466.1ZM863.3 457 866.5 454.6 868.3 462.6 866 463.2ZM656.8 227.7 662.5 228.4 663 231.7 659.4 233.8 655.8 231.1ZM745.8 534.8 749.3 534 752.3 537.6 751.9 539.7 748.2 541.5 744.1 539ZM852.9 508.2 857.2 510.5 856.4 518 853.4 518.8 851.7 517.9ZM842.5 507.7 845.1 508.2 844 516.8 841.6 517.3 838.6 515.7 838.4 515.3ZM941.1 583.2 945.3 583.2 947.4 587.9 944.2 590.7 939 587ZM890.4 526.1 893 525.7 896.6 528.5 889.3 534.6 887 532.2ZM959.4 296.3 962.3 293.8 967.5 295.9 967.8 298.1 965.4 300.5 959.8 298.9ZM716.6 248.9 719.6 246 722.8 248.1 719.8 252.9 717.2 251.9ZM850.6 217.6 856.6 217.1 856 220.6 850.7 221.9ZM921.1 314.5 924.2 313.6 926.5 319 923 323.6 919.7 322.6 918.6 320.1ZM878.6 556.3 885.3 560.2 885.1 562.2 882.2 564.5 878.5 562.9ZM868.7 373.7 875 373.9 875.6 375.6 871.4 379.7ZM836.4 554.3 841.3 552.3 843.9 554.3 841.4 561.5 839.6 562.3ZM868 304.1 873.1 302.2 874.3 302.9 875.2 306.1 871.7 310.6 868.1 308.9ZM840.1 229.1 845.6 227.8 845.6 232.5 840.7 234.4 839.3 232.2ZM808 427.8 810.4 427 813 430.5 810.9 434.3 807.6 434.5ZM705.3 562.3 705.7 561.7 711.5 561.7 712.5 564.4 709.6 567.1 705.8 565.8ZM678.9 254.9 684.2 254.2 687.1 260.1 683.9 262.5 682.3 262.4ZM717.9 326.2 720 323.9 724 324.9 720.3 329.3 719.1 329.1ZM948.1 458.8 949.3 457.9 955.7 459.5 955.3 463.8 951.8 464.2ZM641.9 356 643.2 354.6 647 355.7 647.4 358.5 645.1 359.6 642.1 357.9ZM632.7 486.3 640.7 482.3 641.2 482.6 641.5 489.7 637.1 492ZM930.2 238 935.5 234.6 937.9 235.4 933.2 241.7ZM791.4 290.1 795.8 286.2 799 290.4 798.8 291.6 792.2 293.2 791.8 292.9ZM696.6 498.2 698.4 497.5 701.8 499.6 702 502.5 696.2 504.8ZM803 326 805.4 323.6 810.8 326.9 809.8 330.6 806.6 331.2ZM614.7 443.9 619.5 444.1 619.9 444.5 618.3 451.5 611.5 448ZM644 471.4 648.6 467.6 653.6 469.7 654.7 472.8 653.9 474.3 645.9 476.4 644.7 475.5ZM885.1 258.1 891.3 258.2 893.3 261 891.5 264.9 889 265.2 884.9 260.2ZM839.9 275.7 843.6 273.3 848.8 274.7 847.9 280.3 844.5 282.2 839.7 276.4ZM905.4 322.5 911.6 323.6 912.2 324.9 908.5 328.7 904.1 326.8ZM874.1 452.7 876.4 452 880.7 454.3 875.8 460.2ZM816.8 280.8 818.9 279.8 823.2 282.9 822.6 286.3 819.8 287.5 816.3 284.2ZM928.2 337.3 932.1 338.7 932.4 343.7 929.9 346.1 925.5 342.1ZM899.5 397 901.6 394.7 906.7 394.3 909.2 397.5 909.1 399.8 907.2 401.3 899.5 399.3ZM768.8 485.1 772.2 483.7 776 487.8 775.4 488.8 768.2 489ZM728.5 515.7 728.7 515 731.1 513.7 735.6 517.3 733.9 520.7 733.4 520.8ZM769.8 496.7 774.7 496.7 775.5 499.7 770.2 501.8ZM859.3 571.9 860.7 571.1 864.4 572.5 865.4 577.3 860.1 581.1 857.8 578.2ZM752.4 339.7 755.3 337.3 757 339.9 754 343ZM756.3 480.8 757.3 480.5 761.1 483.9 760.5 487.9 756.1 488.7 754.3 484.4ZM685.4 585.9 688.9 587.3 688.8 590 683 591.8 681.7 589.9ZM893.6 447.3 897.2 447.7 896.1 454.7 893.6 455.4 889.5 452.5ZM708.7 522 710.3 520.9 713.7 522.7 713.5 526.3 712.1 527.2 708.2 525.2ZM963.1 517.8 964.4 517.7 966.4 519.3 965.3 527.5 963.7 528.2 959.7 525ZM962.9 233.2 968.7 230.7 972.1 233.7 969.2 236.2 964.4 235.4ZM889 545.2 891.5 547.9 890.9 552.5 889.3 553.5 884.4 550.7ZM779 223 783.4 221.3 785.4 222.2 786.1 226.6 783 230.5 778.3 225.5ZM806.6 292.3 811.4 290.3 814.6 293.3 814.1 295.1 807.4 295.4 806.3 293.9ZM917.9 448.5 920.1 445 923.3 444.7 927.2 448.7 924.6 452.2 919.6 452.7 918.8 452.1ZM896.3 462.8 899 462 901 463.3 902.2 467.9 895.5 470.3 895 469.8ZM782.6 241.4 784.1 239.1 790.2 244.6 788.7 245.9 783.5 244.7ZM706.9 402.5 709 402.3 711.1 404 708.7 410.4 706.9 410.5 705.2 409.2ZM827.3 320.8 833.1 317.5 837.2 321.2 837.1 322.5 831.2 325.1ZM642.7 333.1 645.7 331.1 649.2 333.7 648.8 335.6 643.2 336.8ZM660.1 566.8 663.7 562.9 667.4 564 668.4 570.8 666.5 572.7 662.8 572.6ZM677.6 356.2 682.3 355.3 683.5 357.2 680.5 361.5ZM808.8 303.2 814.9 302.8 815.5 303.9 814.6 306.5 807.9 307.8ZM785.3 415.4 786.8 413.8 793.2 416.4 793.5 419.8 790.4 422 787 421.2ZM806.5 253.3 808.9 252.8 811.8 255.3 811.5 258.9 805.6 261.1 805.1 260.7ZM881.9 396.2 885.8 394.5 891.7 397.8 891.7 400.1 885.5 400.8ZM689.1 348.8 692.5 347.3 694.7 348.4 692.4 353.8 690.5 353.6 688.5 350.5ZM791.7 345.7 798.2 346.3 800 350 797.9 353.8 792.9 354.3ZM690.1 361.4 692.8 361.7 693.6 362.6 693.2 366.4 688.7 367.7 687.1 365.6ZM764 472.3 768.1 471.1 770.5 474.1 769.9 476.2 766 477.8 762.9 475.1ZM670 225.8 672.2 222.6 674.2 222.6 677.9 225.6 678.1 230.8 674 232.7 670.8 231.1ZM928 223.8 930.1 228.9 926.1 231.5 924.4 228.1ZM843.1 411.7 848.2 408 851.3 409.8 851.6 410.9 846.7 415.1ZM944.1 255.5 950 252.6 950.6 252.9 950.7 258.1 945.3 259.2 944.2 258.2ZM661.1 467.5 665.5 461.8 669.2 463.8 670.2 469.3 661.7 469.2ZM656.7 431.2 659.6 436 655.1 438ZM853.6 253.1 855.4 251.4 862.2 253.9 861.1 256.8 857.7 257.7ZM906 359.8 911 358.9 912.9 360.8 911.2 364.7 907.9 365.6 905.3 362.9ZM627.3 447 629.9 446.7 633.9 450.4 630 454.2 626.1 452.2ZM701.2 364.7 707.2 363.7 706.9 367.3 701.9 368.7 700.9 367.8ZM954.8 340.2 960 336.3 960.5 336.4 962.3 340.1 960 344.4 954.7 342.8ZM608.8 255.3 611.6 255.2 613.3 258.5 608.5 258.3ZM809.5 499.5 811 504.5 808.9 506.5 803.6 503.6ZM891.4 382.2 891.9 382 893.2 382.5 895.4 390 894.8 390.6 890.3 388.1ZM677.9 239.5 682 237.6 684.7 239.1 686.3 243.4 684.3 246.3 677.8 247.1ZM682.2 286.3 689.3 283.9 690.7 288.2 686.4 293.5 685.5 293.4 681.4 288.3ZM951.3 350.1 959 352.3 960.1 355 956.2 357.7 950.9 356.2ZM634.9 460.2 639.5 455.8 643.2 458.1 643.7 461.5 639.3 465.1 635.4 463.1ZM685.9 528.4 689.3 526.9 694.1 531.6 693.8 532.3 688 532.3ZM774.2 464.2 778.9 462.3 781.2 464.1 781 467.5 776.2 468.8 773.8 465.7ZM858.2 496.7 865.2 495.3 867.1 498.9 865.5 502.9 861.8 504.1 857.1 501.6ZM772.1 258.7 773 257.5 774.4 257.4 777 261.8 776.3 263.3 775.9 263.4 773 262.2ZM924.5 379.6 924.6 379 929.2 376.5 934.1 380.8 934.1 381.4 927.9 385.4ZM773 509 778.9 506.7 780.1 513.2 779.6 513.9 774.6 513.1ZM745.5 451.1 749 448.8 750.9 449.4 753.2 454.6 751.7 457 750.4 457.3 745.3 453.1ZM628.8 247 630.1 245.6 634.6 248.7 633.7 250.9 630.1 250.4ZM694.8 308.6 698.6 308.9 700.4 312.8 693.6 315.6 692.1 314.9 691.9 314.3ZM763.8 293.6 769.4 294.5 770.6 297.7 764.9 299.7 762.7 298.2ZM971.3 376.2 974.4 372.6 978.4 372.2 979 372.7 977.2 384.1 976.1 384.9 975 384.6ZM755 561.7 758.6 560.9 761.5 564.6 760 567.6 758.5 568 754.6 565.7ZM909.2 509.9 914.3 507.9 916.4 510.1 914.4 515.8 912 515.5ZM971.7 487.6 974.3 487.9 976.1 492.7 974.2 496.7 971.6 497.1 966.3 493.4ZM710 586.9 713.1 584.9 714.4 585.3 715.6 591.5 714.3 593 710.1 590.5ZM762 333.4 765.2 331 769.6 333 769.1 335.1 765.2 337.2 764.3 337ZM778.6 361.6 785.4 362 784.7 366.8 777.7 367.3 777 366.4ZM937.2 533.1 942.2 533.3 942.8 538.9 938.8 541.5 935.1 537.3ZM902.3 290.2 907.5 290.9 908.4 294.8 901.8 292.3ZM763.5 220 768.2 218.4 771.3 221.3 770.7 223.8 766.9 225.5ZM888.1 225.7 890.9 221.3 893.6 221.7 894.7 226.5 892 228.7 888.3 226.6ZM751.2 260.8 754.4 260.8 754.2 263.7 752.8 264.3 750.5 261.9ZM931.6 557.7 936.6 554.8 940.9 560.1 934.6 564ZM709.4 549.3 711.7 553.9 706.7 553.9 706.4 552.5ZM660.9 477.7 661.3 477 668.4 477.1 669 482.8 664.8 485.9ZM690.5 375.3 695.9 373.7 696.9 374.7 696.6 379.4 692.9 379.7 690.2 376.4ZM833.6 332.5 839.8 329.8 842.3 332.3 841.2 337.1 835 337.9 833 335.7ZM675.4 435.3 678.1 435.8 678.7 436.6 675.7 442 672.8 441.6 671.3 439ZM723.5 296.6 725.1 296.6 728.2 301.1 726.2 303.8 721.2 303.6 720.3 301ZM629.1 279 634.1 275.2 635.4 276.3 634.6 282 633.1 282.3 629.1 279ZM886.4 246.7 891.9 244.1 893.3 245.4 890.9 250.4 886.8 250.3ZM845 321.8 851 317.8 853.1 318.8 854.2 325.6 847.9 326.9 844.8 323.7ZM679.6 399.5 682.5 396.3 685.2 396.4 686.7 398.2 685.5 402.7 683.2 403.4 680.4 402ZM767.3 371.3 770.8 371.2 771.9 372.4 770.9 377.9 766.1 379.4 764.3 376.3ZM635.2 420.5 640.8 423.3 637 428.4 633.8 425.9ZM627.2 432.1 628.5 431.7 631.1 433.7 628.7 439 625.7 439.3ZM708.4 292.7 712.3 288.1 713.4 288.2 716.7 292.7 714.3 296.1 709.1 294.9ZM962.1 430.1 963.8 430.2 966.6 432.6 966.2 440.7 965 441.6 959.9 438.3ZM609.5 405.6 610.4 404.6 618.1 409.9 618.1 410.5 615.4 412.8 610.2 411.1ZM960.7 219.7 965.4 218.8 966.2 219.5 965.8 223.4 960.3 225.8 959.2 224.1ZM700.1 263.6 701.1 263 704.1 263.8 705.9 268.1 703.3 271.4 702.8 271.4ZM961.4 410.6 962.7 409.8 970.1 412.5 963.4 422.4 962.4 422.3ZM910.9 488.1 912.6 485.9 917.4 485.9 919 491 916.6 492.6ZM708.1 460.3 709.7 459.8 713.4 463.7 713.3 465.9 711.3 467.2 709.1 466.4ZM718.3 378.4 721.4 377.8 724.7 381.7 723.8 385.1 716.8 383.6ZM929 286.8 932 285.9 936.1 291.5 928.9 291.9ZM653.8 540.7 658.6 535.6 664.7 539.8 664.7 540.2 658.8 546 654.7 544.5ZM778.4 271.5 780.7 273.8 777.7 278 776.7 276.9ZM720.3 311.8 720.6 311.3 725.4 311.6 727.1 315.6 725.8 317.3 721.8 316.3ZM949.3 397.2 950 395 954.1 393 958.8 395.5 958.5 403.2 956.5 404.4 954.2 404ZM966.6 395.5 972.8 392.1 973.5 392.3 975.7 401.8 973 405.2 966.3 402.8ZM966 573.3 967.6 571.5 976.1 574.1 973.1 582.4 968.8 582.1ZM813.4 512.9 816.6 509.9 820.5 510.9 821 511.9 816.6 517.9 813.4 515ZM708.5 235.6 715 239.6 711.3 243.2 707 242ZM825.6 228.1 831.1 224.9 832.6 226.7 832 229.1 825.9 229.5ZM783.7 452.6 787 450.6 791.2 455 791 455.5 785.8 457.8 783.5 456ZM899.1 549.8 904.8 548.5 905.7 549.5 904.4 555.5 898.7 552.5ZM664.2 551.6 669.6 546.3 672.5 548 671.9 555.6 670.2 556.7 665.5 555.4ZM792 443.1 794.1 441.3 799.5 442 799.3 447.7 796.4 449.2 791.9 444.3ZM773.3 536.5 774.6 536.4 778.6 540.1 777.1 545 775.4 545.6 773.5 544.8ZM922.1 460.3 924.4 460 926.4 464 922.7 466.8 921.7 466.1ZM872.8 246.5 876.3 244.8 878.5 246.5 879.1 251.6 871.7 249.4ZM672.2 449.4 675.5 449.9 677.4 452.8 672.3 456.6 668.7 454.7ZM886.3 459.8 888.6 461.4 887.5 467.2 881.2 467.3 880.7 466.5ZM828.2 459.2 832.4 458.4 833.8 460.4 831.5 466.3ZM650.5 378.5 654.7 377.1 656.4 378.3 656.3 380.7 651.5 381.6 650.4 380.3ZM717.1 487 720.9 486.7 721.9 492.9 720.9 493.3 717.1 490.9ZM796.9 492.7 801.1 489.1 803.1 489.3 804.9 493.1 798.3 497.7 797.4 497ZM864.2 558.6 870.8 556.6 870.7 563.2 867.4 565.3 864.3 564.1ZM935.6 221.8 939.6 219.8 941.6 223.9 939.1 227.6 937.8 227.2ZM850.8 348.8 856.4 348.9 856.5 349.4 852.4 356.8 849.5 353.6ZM629.6 394.7 634 393 635.7 395.5 634.3 399 630.8 398.4ZM923 527.3 928.9 527 930.3 529.4 927.9 534.3 924.5 534.7 922.1 531.9ZM643 278 647.6 277.2 648.8 278.7 645.8 285.3 645.2 285.4 642.2 283.3ZM865.2 587 870.1 583.5 871.5 584.1 872.8 589.8 867.1 589.5ZM618.6 238.1 619 237.3 625.9 237.3 625.8 238.9 622.8 241.9 620.6 241.7ZM868 441.9 872.3 436.3 874.6 437.2 873.4 444.8 869.9 445.8ZM926.3 270.3 931.2 277 930.7 278.1 925.8 279.7 924.4 278.8ZM786.7 505.9 793 503.5 794.7 504.8 791.8 510.2 787.5 510.2ZM741 368.1 745.1 366.9 745.8 367.3 747.3 373.7 744.3 376.5 741.7 374.9ZM781.5 348.4 784.1 348.1 785 354.1 778.3 353.8ZM861.5 542.8 863.1 542.2 866.8 543.8 868.7 549.1 861.1 551.3 859.7 550.2ZM939.9 337.9 941.8 336.5 947 340.2 946.8 343.7 940.2 342.3ZM836.7 345.5 842.7 344.7 843.6 345.8 842.1 350.8 835.6 351.6ZM923.7 512.9 927.5 512.5 929.7 515.8 928.3 519.2 921.6 519.5ZM856.4 526.1 859.3 525.3 861.1 526.3 859.8 535.1 858.8 535.4 855.7 533.5ZM795.4 428 798 426.2 800.2 427.3 799.8 434.2 796.3 433.7ZM649 483.6 654.4 482.3 657.2 488.1 652.4 491.2 649.3 489.6ZM708.6 418.3 710.2 418.2 712 419.8 711 424.9 706.1 426.1ZM838.7 453.8 839.7 451.7 846.9 453.3 847.3 454.3 846 456.2 840.3 456.1ZM822.5 307.4 830 307.4 829.9 310.4 824.2 313.6 821.9 309.4ZM852.1 461 853.5 459 855.7 459.3 859.1 467 852.9 465ZM821.8 342.7 827.5 341.2 829.2 343.2 828 349.5 820.7 349.2ZM648.5 421.6 652 417.6 653.9 418.1 655.3 423.4 653.6 424.1 648.5 421.7ZM612.1 580.8 618.4 578 620.3 579 620.7 584.7 612.7 586.7 611.4 583.8ZM732.5 308.3 734.9 305.2 735.7 305.2 738.8 310.2 737.2 312.6 734.2 312.5ZM768.7 233.2 773 231.3 777.1 235.6 776.2 237 770.5 237.1ZM916.3 432 917.8 429.5 924.2 431.7 922 437 919.7 437.2ZM967.9 333.8 971.1 330.7 975.9 332 976.4 337.6 969.3 336.6ZM784.2 264.8 789 263.3 790.3 264.4 788 269.5 787.4 269.5 783.8 265.8ZM768.7 567.5 773.1 566.6 774.8 567.8 772.4 575.4 771.3 575.3 767.3 570.5ZM851.3 421.3 856.6 416.9 857.2 417.3 858.1 422.8 855.6 424.2ZM798.6 457.5 798.8 456.7 803.1 454.5 806 456 806.9 460.5 802.9 463.3ZM822.7 373.5 823.9 373.5 828.1 380.1 826.7 382 821.3 378.8ZM804.4 237.1 807.9 240.4 806.7 245.3 803.8 246 800.1 243.7ZM758.9 460.1 759.8 458.7 763.6 458.5 766.6 462.2 766.3 463.4 762.5 464.6ZM685.1 301.2 685.8 301.2 688 304.7 685.6 309.5 679.8 307.6ZM912.1 259.3 912.7 257.8 916.8 255.9 920.6 257.8 921.8 263.1 913.6 262.2ZM667.2 522.4 672.9 523.7 674.1 525.5 667.6 532.3 661.9 528.4ZM637.1 320.3 642.1 320.4 642 324.2 638.1 326.8 635.1 325.3ZM960.8 363.9 963.2 362.3 967.6 368.5 965 371.5 961.1 371.2ZM920 499.7 924.4 496.8 925.2 497 927.9 501.8 926.7 504.7 922.4 505.2 919.6 502.1ZM958.4 322.6 959.1 321.1 964.6 320.3 965.6 325.1 961.9 328.7ZM748.7 573 750.2 572.2 753.1 573.8 750.8 580ZM856.1 443.4 860.7 444.7 862.3 448 857.4 451.7 854.5 451.3 853.9 449.8ZM917.8 347.2 919.4 347 923.6 350.9 920 355.8 919 355.9 916.6 353.5ZM628.9 258.1 633.5 258.7 633.9 259.5 632.2 262.8 627 260.3ZM619.7 357.5 621.5 357.6 622.7 362.5 619.8 364.9 617.4 362ZM914.7 218 915.5 217.2 922 218.9 918.2 223.3 915.4 222.8ZM753.8 367.1 758.3 365.4 760.3 367.8 757.7 372 754.8 371.6ZM749.6 404.8 752.7 403.8 755.3 406.3 752.6 412.3 748.7 407.2ZM801.8 281.2 806 278.3 809 280.2 808.6 282.9 804.5 284.7ZM898.5 407.1 904 408.5 903.8 413.6 899.5 415.4 898.8 414.9ZM869.4 256.9 877.1 259.2 871.2 262.9 868.5 259.3ZM975.7 418.1 979.4 421.3 977.9 426.1 971.8 426.9 970.5 425.7ZM732 292.8 734.2 289.8 740.2 291.8 740.2 293.2 736.2 297.4 735 297.4ZM615.5 296.9 618.3 295.8 620.5 297.4 618.9 300.5 617.2 300.6 615.1 297.7ZM706.9 341.7 708.2 341.9 709.7 345.5 708 346.9 704.3 345.3ZM663.9 347.6 668.2 344.7 669.8 351.7 667.1 352.3ZM754.1 223.7 755.9 222.7 760.6 230 754.6 231.5ZM784.1 390.1 786.5 389.5 791.8 393.9 785.6 398.7 782.1 395.8ZM958.8 378.8 964.1 379.2 967.2 386.3 962.7 388.7 958.3 386.4ZM864.9 472.8 866.1 471.3 872.8 469.4 873.3 469.6 875 472.1 873.4 478.7 870.2 480 864.9 474.5ZM661.5 416.3 664.1 414.3 666.1 415 667.7 418.8 667.5 419.4 662.6 420.4ZM767 271.6 770.1 269.4 770.8 269.7 769.5 273.9 767.3 273.8ZM629.6 551.8 631.9 549.9 637.2 555.3 632 558.4 629.6 556.8ZM726.5 220.3 735.8 220.5 732.7 227.5 728.8 226.5ZM756.6 524.8 757.4 524.4 762.6 526.2 763.6 529.8 757.7 531.9 755.1 528.9ZM877.4 354.9 879.2 352.1 882 352 884.5 355.1 883.5 359.4 882.1 359.8ZM872.5 487.6 876.3 486 882.5 490.2 882.8 492.8 881.8 494.3 873.7 494.6 871.5 490.5ZM656.8 497.6 662.9 493.7 665.9 500.3 661.3 504.6 657.5 503.6ZM968.4 474 975.8 470.1 977 478.4 975.5 480.2 972.4 479.9ZM913.9 386.1 918.4 384.7 920.4 388.1 914.2 391.3 912.8 389.5ZM817 497.6 821.5 495.5 824.1 498.9 821.4 503.1 818.6 502.4ZM843.2 241.8 848.9 239.6 850.8 241 850.6 245.2 847.6 248ZM617.5 308.3 619.3 308.3 621 310.7 618.3 313.6 615.8 311.5ZM914.9 288.2 917 285 919.1 284.7 921.3 286 921 292.2 915.8 292ZM721.5 522.7 723.4 521.7 726.9 525.3 725.2 527.8 721.3 526.1ZM646.9 293.1 647.4 293 650.7 295.7 650.3 300.1 646.4 301.2 644.3 299.6ZM685.7 226 692.7 222.6 694.2 226.8 687.6 231.7 685.9 230.8ZM889.1 329.6 894.5 331.1 892.3 335.5 890.3 335.6 887.8 332.4ZM754.7 324.3 757.2 320.2 760 320.2 760.5 324.8 756.9 327.5ZM627.2 526.8 631.2 525.3 635.2 527.4 635.4 533.8 632.6 536 626.6 531.6ZM649.2 308.5 653.1 307.4 655.2 309.1 655 313.2 648.4 314.1ZM876.6 340 877.6 337.7 881.6 337.1 883.8 339.9 881.4 344.2 879.2 344.3ZM796.3 330 800.2 335.6 798.6 338.5 792.7 338 792.3 335.6ZM818.7 327.6 821.5 326 826 330.9 825.4 333.7 819.7 335.2 817.3 332.8ZM911.8 407.5 913.2 406.5 918 409.2 918.4 411.6 914.4 415.7 911.5 414.1ZM848.8 474.4 850.7 472.5 856.9 474.4 850.5 479.2ZM728.4 370.3 733.3 369.5 733.8 374.7 730.2 376.1 727.4 372.8ZM903 278.6 906.3 277.8 909.8 281.8 908.8 283.2 901.8 282.3ZM628.1 578.7 632.4 576.2 638 579.1 635.8 584.7 629.3 586.3 628.6 585.8ZM960.2 272.2 963.8 274.1 964.2 275.7 961 278.1 957.8 276.1ZM891.9 319.2 897.8 320.6 896.9 323.7 890.5 321.9ZM933.8 507.9 935 505.2 939.8 504.6 941.4 510.6 936 511.1ZM820.6 587.1 826.5 586.2 828.4 588.2 823.1 593.4 819.8 589.7ZM910.7 538.4 916.4 537.3 918.4 539.6 916.9 543.5 911.4 544.2 910.2 542.9ZM952.6 445.1 954.9 444.3 960.8 448.2 960.4 451.2 959 452.2 952.4 450.6ZM604.1 538.8 606.6 537.1 611.4 539.8 611.2 544.4 607 544.8ZM751.5 280.8 758.2 282.2 757.9 284.9 751.3 283.1ZM666.4 279.9 669.3 276.8 670 276.8 674.8 283.7 674 285.8 668.4 287.3ZM911.5 231.9 913.2 230.3 917.1 231 919.5 235.8 916.9 237.4 912 235.3ZM876.5 290.4 881.1 288.7 881.9 292.9 877.5 295.7 877 295.4ZM797.8 266.8 799.8 266.5 801.4 267.7 801.7 271.7 797 275.1 795 272.8ZM948 266.6 953.7 265.4 954.4 266 954.5 266.5 950.3 273.4 947.7 271.8ZM778.7 439.6 784.2 443 780 445.7 776.3 443.4ZM779.1 287.9 783.7 290.8 783.9 292.5 777.9 294.9 776.6 291.6ZM714.9 572.9 718.2 569.9 721.7 570.8 722 571.2 720.1 576.7 717.5 578.1 715.9 577.6ZM951 562.1 955.6 559 962 563.1 962.3 565.8 959.9 568.4 954.8 568.5ZM864.4 391.7 869.8 387.8 874 394 869 396.6 866.1 395.4ZM800.9 415.2 804.2 412.2 809.7 417.2 808.9 419.3 804.6 420.7 801.3 419.1ZM948.1 228.3 952.7 228.5 954.5 231 947.5 234.3 945.6 233.4 945.2 232.6ZM939.5 404.2 943.6 402.6 946.7 407 941.2 411.9 940.5 411.7ZM892 357.4 897.3 356.2 898.4 357.5 897.7 361.1 893.2 362.6 891.1 360.9ZM706.3 331.6 709.2 328.6 710.6 328.9 711.7 331.7 709.4 334.2 707.6 333.9ZM704.6 376.1 709.4 374.7 710.9 376.1 709.6 380.3 704.4 380.1ZM844.6 524.6 846.9 524.1 848.7 525.1 848 532.5 843.6 533.6ZM664.2 378.7 668.5 376.3 670.7 380.5 665.1 383.8 664.1 382.6ZM803.2 524.3 808.9 521.5 810.7 523.1 808.4 527.9 806.6 528.2ZM882.4 437.6 884.1 437.1 887.3 442.8 883.8 447.1 881.1 445.7ZM857.3 379.7 857.8 378.6 861.9 377.7 864 382.4 860.8 384.7ZM924.1 546.7 925.7 542.5 928.9 542.1 933.7 547.5 927.1 551.3ZM815.5 242.4 819.2 241.4 822.2 247 816.6 249.1 814.3 247.1ZM768.3 306.7 773.3 305 774.3 307.6 772 311.4 768.5 311.4ZM664.1 322.3 669.3 322.2 670.3 324.4 665.9 328.2 663.7 327.1ZM913.7 334.6 918 330.2 921.6 331.3 922 332.3 918.2 339.3 915.6 339.7 914.5 338.9ZM763.8 358.4 768.3 356.3 771.1 357.1 771.6 358 769.8 363.4 766.8 363.5 763.6 359.6ZM664.2 428 667.9 427.2 669.4 430.2 666.6 432.7ZM760.8 575.4 761.3 575.3 764.2 578.9 759.7 583.9 758.1 582.7ZM932.2 391.9 937.3 388.6 942.3 393.3 941.9 394.9 935.4 397.4 933.9 396.8Z" fill="#000" stroke="#000" stroke-width="4.2" stroke-linejoin="round"/></mask><mask id="mcore" maskUnits="userSpaceOnUse" x="610" y="220" width="368" height="368"><rect x="610" y="220" width="368" height="368" fill="#fff"/><path d="M642.8 398.6 647.2 398.1 648.5 399.5 646.3 403 641.4 402.2ZM820.4 218.3 822.8 216.1 827.4 218 821.5 221.5 820.7 220.8ZM650.7 569.4 652.9 569.7 655.7 575.8 654 577.7 646.3 576ZM618.5 251.5 620 249.5 621.4 249.6 622.8 253.2 620.6 255.7ZM968.6 448.5 970.8 447.1 977.1 448.7 978.1 451.3 975.2 455.6 968.2 451.3ZM738.3 398.9 742.1 402.6 741.3 404.6 737.2 405.7 735.8 404.7ZM852.3 304.2 852.6 303.7 858.1 302.1 860.2 303.6 860.3 309.3 856.3 311.7 853.9 310.6ZM636.2 509.9 644.2 513.3 643.7 518.1 639 520.6 635.5 518.8ZM851 398.1 857.6 395.6 858.6 397.6 853.9 402.3 851.5 401ZM919.4 421.8 923.5 417.5 928 419.4 926.7 424.3 919.4 421.8ZM799.6 393.8 806.6 388.2 809.3 395.7 804.8 398.7 799.6 394ZM738.4 438.1 742.8 436.4 744 442.8 741.7 444.3 737.5 441.6ZM683.2 512.6 689.7 513.2 687.2 519.4 681.1 521.9 679.7 519.9ZM928.3 256.6 933.2 252.2 936.3 254.9 936.3 257.4 929.2 260.4ZM780.5 312.4 785.4 313.5 785.1 316.5 780.5 318 778.8 315.3ZM621 565.3 625.4 563.4 628.1 565.2 628.3 569.5 623.9 572.1 622.1 571.1ZM762.2 261.7 764.8 261.8 765.3 263.3 762.8 265 761.9 264.4ZM856.3 277.3 863.5 278.5 863.4 281.9 860 283.6 855.7 280.9ZM952.7 282.2 957.4 285.1 957.6 287.6 954.5 290.2 950.8 288.5ZM732.2 383.7 737.6 381.6 741.1 383.6 736.6 390.1 731.4 386.9ZM958.2 483.7 962.9 479.7 965.2 483.2 961.3 487.3ZM777.9 476.4 783.5 474.9 784.3 475.7 781.5 482.3 777.5 478ZM611.3 218.2 615.5 216.3 617.7 217.9 617.7 218.7 613.9 221.9 611.4 220.9ZM931.6 434.1 937.7 436.1 938.1 437.5 932.2 442.6 929.3 439.7ZM708.3 316.4 713.4 315.7 714.3 318.6 711.9 321.2 710.5 320.9ZM640.4 263.8 647.3 264.8 646 269.6 640.7 270.5 638.1 268.4ZM781.1 253.5 782 252.3 785.9 253.2 785.9 256.1 783.2 257ZM889.7 273 892.6 272.6 895.5 276.2 894.6 279.2 887.4 279.3 887 277.8ZM912.3 272.8 913.5 270.1 918.2 270.6 916.7 277.2 916.2 277.2ZM703.8 487.3 709.3 486.8 709.3 490.7 705.6 492.8 703.1 491.2ZM786.2 542.1 789.1 541.2 791.8 543.3 790 548.6 789.1 549 784.8 546.4ZM670.8 334.3 675.8 329.9 677.9 330.7 678.3 331.5 676.5 335.8 671.7 337.3ZM696.7 586.7 698.2 585.7 702.3 587.4 702.3 590.6 698.4 593.1 696.5 591.3ZM767.8 319.2 772 319.2 774.5 323.2 773.5 326.3 768.3 323.9ZM605.4 354.5 606.6 353 612.4 353.2 612.9 353.8 610.5 358.4 607.8 358.4ZM678.9 531.8 681.3 536.4 679.2 541 677.2 541.7 672.5 538.9ZM886.5 408.5 890.7 408 890.9 413.6 884.8 414.7 884.1 414.2ZM854.2 486.2 860.7 481.4 864.9 485.7 864.3 487.6 856.5 489.1ZM907.6 562.8 912 565.2 912.3 568.1 909.5 570.1 905.4 568.8ZM651 457.6 655.5 454.4 659.6 456.8 655.5 462 651.4 460.3ZM648.5 366.6 651.4 365.3 651.4 369.9 648 371.1ZM913.1 551.8 917.7 551.3 920 554.8 915.4 558.2 912.2 556.4ZM901.1 219.5 902 218.6 907.1 219.8 907.8 224.7 906.3 226 902.4 224.9ZM732.9 265 735.4 263.6 737.1 264.8 735.2 270.1ZM684.9 335.9 688.3 336.7 688.5 340.6 686.9 341.3 684 338.1ZM619.2 539.9 622.3 538.1 628.5 542.6 624.9 545.6 619 543.7ZM845.5 259.1 847.1 257.5 851.8 262.8 850.1 266.9 846.4 266ZM791.6 232.2 797.2 233.8 794.5 238 790.1 234ZM837.3 296.7 841.8 293.8 845.2 299.9 837.2 300.4ZM813.8 455.2 818.6 451.9 821.2 455.8 821 456.2 814.5 458.6ZM721.2 464.6 726.7 461.2 727.7 462 724 467.1 721.1 465.7ZM729.3 252.4 731.8 254.2 731.8 256.7 727.4 259.2 726 258.8 725.7 258.1ZM715 365 719.2 364.1 721.2 367.2 720 370.1 716.6 370.8 714.6 368.9ZM964.5 243.4 967.1 243.8 967.9 248.6 963.4 246.5ZM620.3 418.9 622.5 417 627.3 419.7 626.2 424.3 624.4 424.8 620.6 422.5ZM969.7 562.2 975.7 555.9 979.4 559.1 976.9 566.2 969.9 564.1ZM875.6 226 880.4 227.8 877.3 230.4 874.5 227.6ZM912.3 473.5 916.9 472.2 919.1 473.8 919.5 476.5 918.3 478.1 913.6 478.1ZM640.1 388.2 645.2 386.3 645.9 387 645.3 390.5 641.9 390.9ZM610.6 526.7 617.1 524.3 619.5 525.9 618.8 531 615.4 533.1 610.4 530.3ZM875.8 522.7 878.5 518.4 883.2 523.1 880.5 527.8ZM897.4 299.8 898 299.2 905.6 302.1 903.3 304 897.4 301.3ZM913.5 301 914.5 299.8 921 300 921.6 306.3 919.1 307 913.4 302.5ZM654.7 354.2 657.2 351.8 660.8 356.9 660.3 357.8 656 359 655.3 358.5ZM793.3 312.8 801 313.8 800.9 317 796.4 321.5 792.9 318ZM830.3 431 830.8 430.4 836.8 432.3 837.3 435 834.8 438 831.8 436.9ZM694.8 450.2 696.6 454.8 691.2 457.9 688.9 454.7ZM736.2 507 739.8 505.3 742.3 508.8 741.1 511.6 736 507.6ZM699.1 512.1 705.5 509.5 706.3 510.1 706.2 514.3 704.8 515.2ZM759.7 422.9 764.6 423.6 765.3 426 760.8 429.3 759.2 428.2ZM859 408.3 864.2 403 865.4 403.5 865.7 408.5 861 410.5 859.4 409.6ZM617.9 328.6 619.5 327.1 624.3 329.4 621.9 334.6 618.7 334.7ZM806.2 218.5 808.8 216.8 812.7 219.1 812.8 220.5 807.6 223ZM652 512.9 654.7 510.9 659.4 512.2 661.4 517.3 657 522.2 651.5 518.6ZM904.7 450.1 910.5 451.2 910.9 452.6 904.4 456.3 903.8 455.9ZM960.5 500.5 961.5 499.6 966 502.7 963.1 510 961.9 510 960.1 508.6ZM702.1 447.5 706 445.3 709.1 446.7 709.7 448.9 708.2 452.1 704.4 453.2ZM723.7 500.6 724.6 500.2 728.6 505.1 728.2 506.4 726 507.6 722.6 504.3ZM744.6 267 747.5 270 746.7 273 743.1 271.2ZM938.3 481.2 940.2 478.8 943.8 478.9 945.8 482.4 942.6 485.4 938.9 483.8ZM888 422.1 894 421 895 421.7 894.9 425.3 888.5 428.1ZM909.8 373.1 912.7 372.3 916.8 377 912.1 378.5 909.3 375.2ZM809.1 230.8 816.4 227.4 817.7 228.4 818.8 233 818.5 233.5 813.4 234.9ZM817.8 526.3 823 530.8 823.2 531.9 818 533.4 815.6 530.9ZM868.8 527.6 869.5 527.5 874 532.3 869.2 536.4 867.6 535.7ZM792 556.2 792.6 556 799.6 560.4 791.1 564 790.4 563.5ZM636.3 543 640.1 540.1 646.2 542.4 647 546.1 642.9 549.9 636.3 543.3ZM742.9 223.8 746.4 224.6 746.6 230.7 740.6 232.6 739.6 232.1ZM835 383.8 838.9 383.1 840.1 384.1 839.9 390 835.2 391 831.9 388ZM759.9 539.5 765.5 537.4 765.7 544.4 763.8 545 759.6 541ZM648.2 443.6 649.4 443.5 650.8 444.6 651.2 447.9 646.7 451.1 643.9 449.3ZM762.6 409.2 765.2 408.9 767.7 413.6 765.9 415.9 759.9 415.1ZM793.7 251.9 795.8 250.1 798.8 252 797.5 259 796.2 259.1 793.7 257.1ZM799.4 545.2 800 545.1 804.4 548.6 802.8 553.1 797.7 550ZM615.7 387 617.7 387.5 618.7 389.9 612.1 393.3 611.4 391.7ZM973.8 221.1 978.8 220 979.5 226 977.3 228 973.5 224.5ZM637 366.4 638.8 365 640.7 366.1 640.4 368.9 637.9 369ZM670.4 491.5 673.9 488.9 680.2 490.8 675 498.1 673.3 497.8ZM808.8 315.5 815.6 314.2 818.3 318.8 815.4 320.5 808.8 316.5ZM693.7 552.7 694.8 552.2 698.8 554.1 699.5 557 693.1 556.1ZM896.2 369.8 900 368.6 902.3 371.1 901.7 373.3 896.3 375.4 895.8 375.2ZM757.8 496.3 761.9 495.6 762.4 503.1 759.5 503.8 758.8 503.4ZM657 334.9 659.5 333.7 663.1 335.6 663.8 338.3 658.7 341.7 656.2 338.2ZM793.1 221.5 796.7 219.4 798.5 220 800.6 226.7 793.7 224.6ZM611.9 286.2 613.1 285.2 615.5 286.3 615.2 288.6 614 289.1ZM745.7 500.2 750.2 498.7 750.9 503 748.3 503.8ZM938.2 570.9 944.8 566.9 948 572.3 945.8 575.4 940.9 575.4ZM732.5 558.9 733.9 559.8 734.6 567.3 728.7 566.8ZM970 358.3 977.8 356.1 976.3 364.6 974.4 364.7ZM890.8 343.4 893 343.3 895.6 346.3 895.3 348.6 890.3 349.8 888.4 347.6ZM644.1 432 646.3 429.3 648.8 430.5 647.6 435.6ZM621 458.8 621.5 458.6 627.2 461.5 627.7 463.9 622 468.1 618.8 466.4ZM919.8 564.6 924.6 561.2 927.8 567.8 924 569.6 920.1 567.5ZM770.3 245.4 770.5 244.9 775.5 244.8 776.1 247.2 774.4 249.6 772.9 249.7ZM941.7 548.8 947.3 545.3 952.3 547.5 951.9 552.2 947.1 555.3ZM974.3 434.4 979.2 433.8 981.3 436.4 978.3 441 974.1 439.9ZM863.5 345.6 870.3 344.6 872.5 348.3 870.7 351 864 347.2ZM663 310 668 308 671.6 310.1 669.5 314.4 662.8 314.5ZM876.1 323.4 882.4 325.2 880.6 329.4 876.8 329.9 874.6 326.6ZM873.2 403.2 876.2 401.6 879.3 405.5 877 411 873.6 408.8ZM663.8 393.6 665.2 396.2 661.9 398.7 660.6 397.9ZM644.6 583.6 652 585.3 652.4 588.1 646.7 591.5 643.1 587.3ZM781.9 325.7 787.7 323.9 789.7 325.9 786.9 329.7 781.5 327.1ZM658.7 444.9 664.3 442.4 665.8 445.1 662.7 449.6 659 447.4ZM750.6 250.7 753.9 249 754.7 249.5 754.3 253 751.5 253ZM607 341.9 612.7 340.8 611.4 345.3 607.8 345.3ZM825.5 410 831.2 408.8 833.8 411.3 829.1 415.6 824.7 412.2ZM952.3 579.7 954.7 576.3 958.8 576.2 961.4 584.6 959.3 586.5 954.9 585.5ZM974 521.2 978 520.7 980.5 524 977 529.1 973.2 527.6ZM789.5 405.5 795.6 400.8 800.4 405.2 796 409.1 789.5 406.5ZM749.9 355 752.6 353.3 756.1 357.1 756 357.9 749.7 360.4ZM609 510.1 612.9 510.4 613.4 517.4 607.7 519.5 604.6 516.8ZM781.8 493.3 783.4 490.7 789.1 493.6 789.5 496.5 783.3 498.8ZM770.1 343.4 771.7 342.6 774.3 345.3 772 349.2 771.3 349ZM859.2 265.4 862.6 264.5 866.3 269.2 866.2 270.8 857.5 269.6ZM812 550.4 813.8 549.8 818.7 553.7 816.8 557 810.1 555.8ZM762.4 511.1 765.1 510.5 767.2 515.8 764.6 518.7 761.5 517.6ZM830.9 283.9 834.4 282.2 838.3 286.9 833.6 289.8 830.3 287.3ZM608.7 242.5 611.9 242.2 613.5 245.1 611.8 247.4 607.9 247.5ZM737.5 337.3 738.7 338.6 735.9 343.4 734.1 341.1ZM826.3 556.1 828.4 555.4 832.4 565.4 829.9 566.5 823.8 563.9 823.1 561.8ZM735.2 278.9 735.6 278.2 738 277.4 743.8 280.2 743.3 284.1 743 284.5 736 282.2ZM743.7 316.8 745.6 314.1 748.3 313.9 750.3 316.5 747.9 320.5 745.6 320.5ZM807.3 442.3 811.5 442.1 814.1 445.6 809.2 448.9 807.1 447.8ZM737.9 461.8 741 459.7 744.6 462.6 742.6 466.6ZM766.1 281.6 770.5 281.8 772.5 283.7 770.4 286.8 765.6 286ZM947.6 491.4 951.4 487.8 956.5 493.6 955.3 494.6 948 494ZM958.4 252.9 963.8 255.3 958.5 258.7ZM752.2 464.9 752.6 464.8 756.6 469.8 755.3 473 754.7 473.2 750.1 469ZM772 404.9 773.8 401.9 776.5 401.3 781.7 405.5 781.8 407.7 779.4 410.3 774.7 410.1ZM896.3 235.2 899.9 232.3 903.8 233.4 904.3 236.7 900.5 240.5 899.5 240.6 896.5 237.7ZM864.2 219.1 869.5 218.9 869.8 220.6 867.1 224.7 865.8 224.9 863.5 222.6ZM685.9 496.5 688.8 497.9 688.4 505.3 683.1 504.8 681.5 502.5ZM862.2 355.2 865.5 357 863.6 359.9 860.5 358.4ZM716.1 534 717.6 533 723.1 535.5 723.2 536.2 722 537.6 715.9 537.5ZM700.2 220.5 705.2 217 709.2 220.6 705.6 227.3 701.9 225.5ZM921.1 243.9 923.7 242.3 927.5 246.9 923.4 250.5 920.9 249.2ZM975.2 294.5 977.3 292.2 980.2 292.4 981.9 296.5 980 298.4 975.4 296.7ZM709.2 433.4 713.3 432.4 716 434.7 715.9 435.7 711.7 439.3 709.5 438.3ZM712.6 353.2 715.6 350.8 716.3 350.9 718.7 354.9 718.1 356.4 712.8 357.5ZM632.3 346.4 637.3 345.3 637.9 348.9 636.7 350.2 632 348.7ZM955.8 308.7 957.7 306.4 963.2 307.9 963.9 312.5 958.5 313.3ZM696.1 464.1 700.4 461.6 701.3 467.1 699.7 468ZM947.1 312.3 948.8 312.2 952 317.8 951.3 319.2 944.6 320.4 944.3 320.1ZM742.6 475.9 743.4 474.5 744.3 474.3 748.7 478.3 747.7 480.2 743.3 480.2ZM907.1 436.7 909.8 436.3 913.1 441.4 911.8 443.5 905.2 442.2ZM654.8 266.6 660.1 267 663 272.2 660.5 274.8 655.3 274.4 653.5 272.1ZM890.3 489.4 894.6 485.4 900.4 489.5 898.3 492.1 890.4 490.5ZM948.3 515.2 955 514.4 955.7 515 952.2 522.5 950.9 522.6ZM762.4 250.7 764.1 250.2 766.2 253.6 765.9 254 762.1 253.9ZM952.3 472 957.5 471.4 958.9 472.8 952.5 478.3 950.6 475.1ZM822.1 476.9 829 473.7 829.9 474 828.8 479.9 825 481.4 821.8 477.5ZM745.2 342.9 747.4 347.3 745.9 348.3 742.9 346.8ZM814.3 386.3 816.6 385.1 822.8 388.7 816.8 393.5ZM872.2 571.5 874.9 569.8 879.1 571.6 879.4 574.4 874.7 577 873.1 576.3ZM936.2 350.9 937.5 349.6 943.5 351.2 943.1 357.1 942.2 357.7 940.8 357.6ZM739.9 574.1 740.9 574.3 743.3 582.2 740.7 584.1 739.5 584ZM743.3 519.4 748.8 523.4 747.8 526.3 744.3 527.1 741.1 523.6ZM625.1 384.9 627.8 381.6 629.7 381.7 631.8 385.5 626.2 387.6ZM800.4 510.7 805.6 513.6 805.6 514.4 800.4 517 798.6 513.9ZM933.5 267.1 939.6 264.5 940.2 265.1 939.9 271 937.1 271.9ZM840.4 443.5 842.9 440.5 848.4 442 847.2 445.4 840.6 443.9ZM643 527.3 647.2 525.1 653.7 529.4 648.5 534.9 643.2 533ZM804.9 582.5 809 579.6 810.3 579.8 813.3 584.2 812.3 587.5 806.3 589.5 804.8 588.2ZM666.5 405.1 671 401.5 672.1 401.8 672.7 403.5 668.2 407.5 666.8 407ZM716.1 453.6 722.5 454.7 718.1 457.3 715.6 454.6ZM837.4 398.5 842.7 397.3 843 397.6 843.7 401.7 838.7 405.2 836.7 403.2ZM727.9 394 731 395.9 728.2 402.6 725.6 400.9ZM741.8 560.5 746.4 559.3 747.4 560.1 746.8 565.2 743.5 566.9 742.4 566.6ZM767.4 387.2 773.4 385.3 776.6 388 774.5 393.7 772.8 394.1ZM692.9 297.9 696.4 293.5 700.9 294.9 701.7 297.6 699.3 301.1 694.8 300.8ZM972.1 318.4 978 317.8 978.9 324 978.4 324.5 973.2 323.2ZM948.6 428.9 954.2 429.4 952.2 437 949.2 438 945.8 436.1 945.1 433.8ZM973.6 504.7 975.2 504.4 978.7 508.8 977 513 971.7 513.6 970.4 512.6ZM810.2 486.2 812.6 483 815.8 482.4 819.6 487 819.3 487.9 812.6 491.1ZM877.3 384.8 881 381.1 883.5 382 882.5 387.4 879.8 388.6ZM848.1 289.1 851.3 287.3 855.6 290.1 855.1 294.8 851.9 295.8ZM782.4 569.7 785 569.3 787 570.7 787.7 574.7 781.6 580.6 779.7 578.5ZM694.8 521.4 695.8 519.2 700.8 521.9 700.4 524.9 699.2 525.6ZM973.1 255.6 973.9 254.5 979.9 254.4 979.3 259.6 977.8 260.9 976.5 260.7ZM655.7 282.3 659.1 282.5 660.5 287.9 655.6 289.6 653.3 287.8ZM737.6 240.8 739.3 246.2 736.2 247.7 733.8 246ZM968.9 344.4 974.6 345.2 974.8 348.8 966.9 351.1 966.2 349.3ZM847.8 385.3 851.1 384.4 854 388.6 847.6 391ZM885.4 514 887.7 511 892.2 512.3 890.8 518.2 889.4 518.4ZM746.4 424.4 751.7 420.1 752.2 420.2 751.4 427.1 747.3 428.4ZM622.9 320.1 627.6 315.1 628.4 315.2 630 317.1 627.9 322.4ZM676.2 318.4 677.8 315.2 684.4 317.3 679.6 323 677.9 322.3ZM719.6 421.7 721.9 421.3 725.2 424.2 724.8 426.4 720.6 428.4 718.6 426.7ZM726.5 334.1 729 331.2 731.3 332.6 727.7 336.5ZM937.8 448 943.1 443.5 944.8 444.5 944.5 451.7 943.8 452.3ZM879.3 583.4 883.3 581.2 884.4 584.6 881.9 587.8 880.3 587.7ZM675.1 562.8 676.3 562 682.8 564 682.9 567.8 681.1 569.6 676 568.8ZM686.4 410.6 687.9 410.1 690.8 412.5 688.1 417.8 687.1 417.8 685.7 416.5ZM865 511.2 867.2 510.5 871.3 515.2 868.5 519.7 866 520.2 864.1 519ZM693.8 387.5 697.1 387.2 696.9 392.7 692.7 393.2 691.7 392ZM608.9 316.6 609.6 316.5 614.8 320.9 612.7 322.9 606.8 321.6ZM831.1 502.6 835.1 502.6 835.9 503.6 832.1 510.5 828.4 509.2 827.7 507.8ZM946.3 328 951.9 327.1 954 331 950.9 333.4 946 330ZM655.1 403.6 658.7 405.9 659.1 408.2 656.2 410.6 653.5 409.9 652.6 407.7ZM826.9 489.8 827.1 488.9 831.6 487.2 835.7 490.2 834.2 494.8 830.8 494.8ZM843 569.4 844.6 568.7 851.4 571.6 850.5 575.5 846 575.9ZM785.5 519.1 786.3 518.1 791.9 518 794.5 522.3 791.5 523.9 785.8 520.5ZM647.2 556.5 652.2 551.9 656.7 553.6 658 557.6 654 561.9 651 561.6ZM765.8 552.5 769.4 551.4 771 552.2 770.3 559.2 767.6 559.8 764.6 555.9ZM716.8 445.3 719.8 442.7 723.9 446.1 723.5 446.9 716.9 445.9ZM924.5 482.7 925.1 482 930.8 483.4 931.2 485.2 926.7 489.4ZM833.4 573.5 835.8 572.4 839.2 579.8 836.3 584.6 835.8 584.5 832.1 580.7ZM633.7 238.5 640.4 236.6 639.9 242.6 633.7 238.6ZM821.7 571.5 825.6 573.1 824.5 578.6 819.5 579.4 817.4 576.4ZM860.9 318 864.5 315.8 869.7 318.2 867.5 323.3 861.8 323.9ZM637.4 376.9 642.3 376.6 642.8 377.1 642.6 378.9 638 380.6 636.6 378ZM793.9 378.1 799.1 378.3 801.3 382.5 795.7 387 792 383.9ZM837.8 308.2 845.1 307.7 846.1 311.7 841.6 314.7 837.6 311.1ZM932 312 939.7 309.5 937.3 316.5 933.7 316ZM631.6 332.3 634.9 333.9 635.5 337.7 630.1 338.8 629.1 337.7ZM963.2 265 967.9 262 969.2 263.8 966.4 266.7ZM701.6 574.7 703.2 573.2 707.2 574.5 708.2 578.8 705.7 580.4 701.6 578.6ZM730.6 533.6 734.2 528.6 734.9 528.4 738.4 532.3 736.8 536.2 730.8 534.2ZM606.7 552.7 609.7 552.4 610.4 558.6 609.4 558.8ZM677.3 273.6 681.1 270.1 682.2 270.2 684.7 277.2 680.7 278.6ZM819.5 256.4 825.2 254.3 826.9 257.4 825 261.7 822.1 262.6 819.2 260ZM930 355.5 933.3 360.4 930.6 362.5 927.2 359.1ZM716.9 391.6 720.3 392.3 718.1 398.7 717 398.8 714.9 397ZM699.2 431.8 700.3 431.7 701.3 432.4 701.7 438.7 697.3 441.3 695.1 437.8ZM891.6 581.4 895.3 580 896.1 583.8 891.9 582.4ZM927.5 576.5 931.4 574.7 934.3 579.4 931.2 584.9 929.6 585.4 926.8 582.2ZM843.5 491.7 847.4 490.2 850.7 494.4 849.3 500.9 848.9 501.1 842.7 499.7 841.4 497.9ZM825.8 237.3 833 236.9 834.7 239.5 828.8 242.8ZM605.4 497.3 610.9 491.7 614.1 492.4 615.1 502.7 609.1 502.3ZM666.9 510.1 671.8 505.5 674.4 506 676.4 508.9 673.1 515.7 668.7 514.8ZM805.9 374.5 808.4 370 814.3 369.6 815.4 370.8 813.4 378 809.1 380.2ZM628 299.9 631.4 302.4 628.4 307.3 625.9 304ZM715.5 339.1 717.7 336.8 719.2 337.1 720.6 339.6 717.4 343.2ZM874.6 270 880 266.5 882.6 269.8 881.1 272.3ZM765.1 435.9 770.2 432.1 773.3 433.6 769.5 439.6 765.3 437.1ZM974.7 241.9 977 239.8 979.6 242.6 978.6 246.6 975.5 246.6ZM622.2 266.6 628.5 269.7 625.7 271.8 622 268.3ZM667.1 263.6 671.4 257.3 675 265.1 670.7 269.1 670.1 269ZM623.4 286.2 624.6 285.5 627.5 287.8 625.9 291.7 623 289.6ZM670.6 389.6 674 387.6 676.2 391.7 673.9 394.2 672.8 393.9ZM849.8 334.5 855.1 333.4 856.9 341.1 849.7 341 848.6 339.6ZM662.8 240.9 667.4 238.2 670.1 239.5 669.9 248.6 662.3 244.1ZM689.6 267.9 692.6 265.7 695.3 273.6 692.4 275.7ZM778.8 552.7 779.7 552.4 784.3 555.2 782.8 561.7 780.3 562.1 778.1 560.5ZM871.3 277.1 879.6 280.1 879.7 280.9 872.9 283.4 871.2 282.3ZM607.4 228.8 608.3 228.1 611.4 229.3 612.5 233 611.7 234.4 606.8 234.8ZM777.4 333.7 784.6 337.3 785.1 340.2 780.7 340.6 776.8 336.5ZM867.3 232.6 868.2 232.4 873.1 237.2 873 237.7 870.5 239 866.5 235ZM687.6 471.8 690.1 469.1 694.4 473.8 693.9 475.5 689.9 476ZM808.5 405.6 814.7 401.5 818.2 407.1 816.9 410.7 815.1 411.5ZM952 240.8 957.1 238.5 957.7 239.4 955.4 245.6 954.4 246.1 953.3 245.5ZM674.5 422.8 680.1 422 680.8 422.6 678.2 427.9 676.8 427.6ZM898.2 477.6 904.7 475.3 906.4 481.2 904.9 483.1 898.2 478.4ZM638.2 437.1 641.1 440.1 638.3 443.8 636 441.7ZM723.6 347.9 726.8 344.4 730.3 349 725 350.2ZM932.7 494.4 936.3 491.2 939.9 492.7 940.6 496.6 934.4 497.4ZM880.9 311.5 885.4 313 885.7 314.2 884 317.6 877.6 315.7ZM755.1 271.7 757.4 270.8 759.2 272 759.5 274.5 754.7 273.5ZM832.5 539.2 838.1 539.1 838.6 539.6 838.2 545.1 832.7 547.3ZM914.3 576.3 916.7 574.5 919.7 576.1 919.2 580 914.7 580.6ZM690.1 483.9 695.2 483.2 696.4 484.7 695.3 490.3 692.9 491.2 687.8 488.8 687.5 488.1ZM640.9 410 645.5 410.8 646.1 412.4 643.2 415.8 639.8 414.1ZM625.9 409.5 629.1 406.1 633.7 406.8 631.9 413.3 625.9 410ZM807.3 339 811.7 338.2 814.2 340.7 813.1 346 806.8 346.1 805.1 342.8ZM729.6 479 735.2 479 735.5 480.9 729.6 479.1ZM793.3 362.1 798.4 361.6 801.5 366.3 799.2 370.5 793 370.3 792.3 369.3ZM638.8 305.3 641.4 307.3 640.8 312.6 636.3 312.5 635.2 311.2ZM740.6 546 744 548.1 743.7 551.9 738.3 553.4 737.6 552.9ZM938 280.8 938.5 279.7 943.2 278.1 945.4 279.5 942.9 287.5ZM702 475.5 705.9 473.6 708 474.3 708.3 479.1 702.3 479.6 701.2 478.2ZM722.2 584.4 723 584 729.7 588.5 728.8 589.6 723.1 589.1ZM742 488 747.4 488 748.6 491 743.7 492.6 741.7 489.5ZM863.4 290.6 867 288.8 868.7 290 869.2 295.3 864.6 297.1 862.9 295.9ZM932.8 323.8 937.8 324.4 938.8 325.7 938.2 329.5 935.3 331.6 929.3 329.4 929 328.7ZM632.1 227.5 636 225.3 636.7 229.5 632 230.9ZM772 449.9 775.9 452.3 775.7 455.1 772.1 456.6 770 453.9ZM701.3 534.6 701.8 533.1 704.1 531.8 708.3 534 708.1 537.7ZM699.9 542.6 703.5 544.2 701.2 546.7 699.3 545.7ZM607.1 302.9 608.9 302.5 610.6 304.8 608.3 308.8 607.7 308.9 606 307ZM659.3 366.1 661 365.7 663.6 370.1 660.6 371.7 659.2 370.7ZM725.9 358 729.9 357.2 731.4 361.9 727.5 362.6 725.4 359.3ZM935.9 419.8 937.5 419 939.6 419.5 942.2 424.5 939.3 428.5 934.2 426.8ZM821.8 357.1 829.1 357.4 829 361.8 824.6 365.6 821.3 365.7 820.1 364.4ZM917 398.6 924.8 394.5 926.2 398.3 921.2 402.1 917 399.6ZM886.9 570.7 888.9 569.1 893.7 572.2 887.5 574.6ZM831.2 370.3 833.2 368.5 837.2 371 836.5 375.6 834.7 375.9ZM690.6 563.6 697.8 564.7 698.1 567.3 696.7 568.5 690.6 566.5ZM900.2 512.2 901.4 511.6 904.7 518.4 901 522 898.4 520ZM675.4 372.8 679.4 369.4 680.2 369.5 683 373.1 682.7 374.6 677.5 376.6ZM943.4 296.1 943.9 295.4 945.8 294.8 951.7 297.5 952.2 300.8 949.2 304.4 945.8 304.5 944.3 303.1ZM925.8 408.4 931.3 404.2 932.8 412.6 932.4 412.8 926.1 410.1ZM676 344.1 678.3 343.4 681.5 346.9 681.3 347.6 677 348.3ZM609.2 477.6 612 473.2 613.8 472.7 619 475.3 620.8 482.8 617 485.1 612.3 484ZM714.1 511.1 717.3 510 721 513.6 720.8 514.2 717.7 516 714 514ZM673.7 413 677.8 409.4 678.6 409.8 678.1 414.4 674.5 414.7ZM902.8 422.5 907.3 420.6 911.7 423.1 911.9 424.1 909.3 428.5 905.5 429 902.7 426.3ZM635.9 565.1 641.5 561.8 644.1 565.4 640 571.4 636.1 569.3ZM891.9 435.1 897.9 432.5 899.6 434.3 897.8 439.9 894.4 439.6ZM723.8 435.6 727.6 433.7 730.8 436.5 729.8 440.5 723.8 435.8ZM745.3 239.3 750 237.8 750.2 242.1 746.8 243.8ZM643.9 225.6 649.6 224.5 648.2 229.5 645.3 230.5 644.7 230ZM658.5 296.9 663.8 295 664.2 301.1 659.9 302.8 658 301.3ZM844.4 430.7 847.1 427.9 851.2 430.7 850.8 434.6 844.8 432.9ZM830.8 530 836.7 523.5 836 531.4 831 531.4ZM620.3 342.5 622.8 342.4 624.6 344.4 624 349.3 623.3 349.9 619.5 349.6 618.6 348.5ZM626 369.9 628.1 368.2 629.5 368.5 630.9 372.5 630 373.9 628.3 373.8ZM619 227.7 621.9 225.4 624.3 227.1 624.2 229.5 619.6 229.5ZM629.1 355.9 634.2 357.6 634.3 358.6 631.4 361 630.3 360.7ZM893 310.9 894.8 308.7 899.6 310.9 899.3 313 893.1 311.5ZM888.8 287.1 895 287 893.8 292.6 892.8 293.4 889.7 292ZM704.9 387.9 709.8 388.1 707.5 394.6 705.1 394.8 704.6 394.4ZM615.9 376.8 618.8 373.1 621.3 377.3 619.2 379.9 617.2 379.3ZM819.9 541 824.7 539.6 825 548.3 824.5 548.5 819.1 544ZM620.6 508.6 628.5 509.2 627.7 518.2 624.1 519.6 621.3 517.8ZM816.3 421.9 817.4 419 819.5 418.1 825.5 422.7 825.6 424.5 824.3 426 819.5 426.1ZM617.4 551.4 621.8 552.8 621.8 556.4 618.2 558ZM698.2 415 699.6 414.9 701.1 416 698.6 424 695.3 420.8ZM807.2 563.2 815.9 564.8 816.3 565.9 811 572ZM676.9 462.9 682.3 458.9 685.2 462.9 681.2 467.2 677.7 466.9ZM822.4 399 827.8 394.8 829.8 396.7 829.1 401.2 824.4 402.2ZM833.3 422.3 838.2 417.8 842.3 421.7 839.2 424.9 833.3 423ZM729.8 451.7 731.6 448.1 732.7 447.7 737.7 450.9 737.5 452.6 732.7 455.9 730.4 454.3ZM622.2 396.9 623.3 400.8 621.5 402.8 616.9 399.6ZM787.8 277.3 788.7 277.3 791 280.1 786.9 283.7 784.4 282ZM819.1 465.2 821.9 464.2 823.6 467.6 820.9 468.8ZM649.9 321.8 656.4 320.8 655.9 326.8 654.1 327.6 649.8 324.4ZM613.6 431.9 617 429.5 619.4 430.9 618.2 436.2 615.5 436.1ZM635.1 289.9 637.2 289.3 639.4 290.9 637 296.9 633.3 294.2ZM779.3 375 786.4 374.5 786.8 375 784.4 382 782.2 382.5 778.5 379.4ZM685.3 440.7 688.1 441.2 689.9 444.1 684 448.6 682.4 446.1ZM688 425.6 689 425.6 692 428.4 688.7 433.4 685.6 432.9 684.9 431.9ZM731.5 322.6 733.4 320.2 736.8 320.3 738.6 324 736.7 326.8 731.7 323.7ZM781.4 432.1 785 428.7 787.7 429.4 788.7 435.6 788.1 436.2ZM837.4 476.2 841.4 476.9 843.7 483.3 840.9 484.3 836.5 481.1ZM692.6 237.8 699.2 232.8 700.9 233.7 699.1 241.3 693.5 240.5ZM690.2 322.6 692 328.6 691.1 329.4 685.5 328ZM836.9 359.3 843.5 358.5 846.3 362.1 846.1 362.6 841.7 364.7 836.8 361.6ZM716.6 223.3 719.2 223 721.3 228.9 718.1 232.4 713.3 229.4ZM831.8 250.1 837.3 247 841.2 252.4 839.9 253.7 833.6 253.4ZM799.2 475.6 801.7 473.1 805.7 479.3 803.9 481.6 802.3 481.4ZM833.7 261.2 838 261.4 838.7 267.2 837 268.3 832.5 264ZM729 574.7 732.1 574.9 731.8 580.5 727.9 577.9ZM626.8 474.2 632.3 470.2 636.3 472.4 636.8 475.5 628.1 479.9ZM758.5 447.2 762 444.2 765.2 446.1 762.9 450.7 760 450.9ZM739.6 254.7 743.1 253 744.6 256.6 743.1 259.1 742.6 259.2 739.6 257ZM935.3 522.6 936.9 518.9 941.1 518.4 943.6 525.6 937 525.3ZM740.3 413 742.8 412.3 745.1 415.4 741.6 418.2 740 417.5ZM606.9 329.6 610.3 330.4 610.6 333.3 605.2 334.3ZM749.6 511.5 754.7 510 753.6 517.3 748.7 513.7ZM882 370.4 883.6 367.5 885.9 366.8 888.4 368.7 888 375.2 883.1 373.6ZM757.9 238.7 762.1 237.6 763.7 241.1 763.1 242.4 759.5 243.4 758 242.4ZM844.9 371.8 847.7 370.5 850.7 375.5 850.1 376.7 844.9 378 844.1 377.3ZM705.7 305.6 707.7 302.6 713 303.8 714.2 306.9 713.7 307.8 707.1 308.7ZM795.3 300.5 800.5 299.2 801.4 300.4 800.3 305.9 795.4 305.2ZM780.6 302.2 787.4 299.5 787.7 306 781.6 304.7ZM794.9 570.9 800.8 568.3 803.2 574.1 800.7 576 795.4 573.4ZM939.4 467.3 942.7 464.7 945.3 468.6 943.9 471.1 941 471ZM947.1 501.7 952.6 502.2 952.4 506.9 948.6 507.3ZM853.5 365.1 853.7 364.6 854.8 364.3 861.6 367.7 862 369.2 861.6 369.7 857 370.8ZM639.4 499.6 645.5 496.4 649 498.2 649.8 504.8 647.8 506.3 638.6 502.5ZM846 583.7 851.8 583.2 853.7 585.6 849.9 589.2 843.7 587.5ZM718.5 558.1 718.9 557.4 724.7 555.7 725.3 556.1 722 562.8 720 562.3ZM672.6 577.6 673.9 576.4 679.4 577.2 680.1 580.2 675.5 585.1ZM686.9 574.9 687.9 573.8 693.8 575.8 693.8 579.2 692.3 580.3 687.7 578.5ZM920.2 363.6 920.7 363.5 926.1 369.1 922.3 371.4 918.6 367.2ZM893.1 560.4 894.8 559.3 899.6 561.8 898.2 565.8 892.9 562.3ZM716.1 545.3 720.5 545.4 721 548.7 718.2 549.5ZM698.2 322.1 701.7 320.7 703.2 323.6 700.1 326.8 699.6 326.7ZM608 266.1 614.4 266.4 614.2 267.5 611.3 269.6 608.2 268.4ZM809.2 268.1 814.4 266.2 816.9 268.3 815.9 272.6 813.5 273.8 809.5 271.3ZM900.4 248.6 905.3 255.4 905.1 255.8 899.6 256.4 897.8 253.9ZM671.6 294.6 675.6 293.5 678.5 297 674 302.5 672 301.4ZM827 517 830.8 518.3 826.3 523.3 823.9 521.3ZM888.2 498.8 888.6 498.1 896.5 499.7 897.4 504.9 896.4 505.4 889.4 503.3ZM865.1 417.2 869.4 415.5 871.7 416.9 867.7 422.9 865.9 422.2ZM722.3 269.8 724.8 266.6 728.4 273.9 723.9 273.5ZM933.9 369.9 939.8 365.3 941.2 372.3 938.4 374.2 933.8 370.2ZM853.4 229.2 858.1 228.1 859.9 230.1 858.9 233.1 855.3 234.6 853.4 233.2ZM722.8 238.7 727.1 234.1 731.9 235.3 727.3 241.7 722.8 238.7ZM731.9 496.8 736.1 495.1 737.6 497.7 734 499.4ZM732.9 468 735.7 471.2 730.6 471.2ZM645 344.4 650.3 343.3 652.1 345.9 649.5 348.3 645.5 347.1ZM759.2 394.1 761.8 392.8 766.6 398.8 765.2 401.1 761.4 401.4 758.1 398.2ZM676 474.6 680.4 475 683.3 480.1 681.5 483.1 676.8 481.6ZM949.8 530.9 950.1 530.6 953.6 530.2 958.8 534.3 957.5 539.5 956 540.6 950.6 538.3ZM732.9 425.4 735.8 424.1 738.6 425.5 739.5 429.3 735.9 430.7 732.5 427.6ZM621.8 491.3 625.1 489.3 631.8 497.8 630.8 501.6 622.7 500.9ZM770.9 583.1 773.5 583.3 775.5 585.4 770.2 591.7 765.8 588.7ZM783.6 528.2 787.1 530.3 786.5 533.8 784.1 534.5 781.1 531.8ZM900.4 264.2 905.5 263.6 906.8 266 904.9 270.1 901.3 271 898.7 267.9ZM709.6 499.5 713 497.6 715.9 499.4 715 502.5 711 503.9 709.9 503ZM757.2 304.4 757.7 304.2 760.5 306.1 760.7 312.5 756.9 312.4 754.7 309.4ZM966.5 535.5 969 534.4 975.3 536.9 976.4 539.8 973.8 544 965.5 539.8ZM729.8 410.3 732.5 412 732.2 417.2 730.1 418.1 727.6 416ZM965.2 284.7 969.1 281.8 970 282.2 971.4 287.1 970.1 288.6 965.3 286.6ZM960.1 547.2 961.2 546.4 969.9 550.7 965 555.8 959.7 552.4ZM882.3 475.1 889.1 475 890.4 476.3 890.4 478.7 885.8 483 881.1 479.8ZM878.9 420.1 880.1 421 880.8 430 879.1 430.5 873.8 428.5 873.6 428.1ZM824.5 270 826.8 269.3 832.2 274.5 827.9 276.7 823.7 273.6ZM808.3 469 811.3 467 814.8 474.1 814.5 474.7 812.3 475.1ZM789 464.9 793 463.1 796.3 467.5 792.8 471 790.5 470.9 788.7 469.1ZM770.1 524.2 773.2 520.8 778.1 521.6 778.2 522.2 773.9 528.6 771.4 528.8ZM880.9 237.6 885.3 233.8 888.5 235.8 888.6 237.1 882.7 239.9 880.8 238.4ZM907.5 310.6 909.3 309.2 913.5 312.5 912 315.7 906.9 314.8ZM642.4 250.1 643.6 249.5 648.2 251.8 647.7 256.9 640.9 256 640.4 255ZM718.5 406.5 719.9 406.4 722.3 408.1 720.2 413.7 717.5 414.1 716.1 413ZM720.4 284.5 723 281.3 727.8 281.7 728.5 284.4 725.2 288.8 723.4 288.8ZM903.2 348 910.2 345.4 909.1 351.3 904.2 352.2 902.8 350.6ZM928.8 299.7 936 299.3 936.3 302.4 929.3 304.7ZM862.7 331.6 868.2 331.1 870.5 334.5 869.5 336.8 864.1 337.7ZM931.3 456.3 932.8 454.1 938.5 458.1 934 461.6ZM858.5 241.7 861.1 240.6 865.1 244.7 864.5 246.4 858.5 244.2ZM901.6 334.3 906 336.1 906.5 338.5 900.9 340.5 899.4 338.8ZM874.5 542.1 880.7 536.8 883.4 539.8 876.6 547.8ZM941.9 381.3 946.2 378.3 951 379.5 950.5 386.1 947.5 387.5 941.8 382.1ZM605.3 420.6 607.6 418.4 612.6 420.1 612.8 422.9 608.2 426.2ZM807.6 535.9 809.5 535.7 812.4 538.9 811.4 542.3 809.7 542.9 805.7 539.7ZM680.8 383.7 684.8 382.1 686.6 384.3 684.7 388.6 683.3 388.5ZM750.6 435.5 754.4 434.4 757.3 436.4 757.5 437.8 752.8 441.8 751.7 441.5ZM872.3 360.9 876.1 364.9 875.5 366.1 869.2 365.9ZM742.7 301.8 744.7 299.7 749.3 302.7 747.6 306.1 745.6 306.3ZM772 420.9 774.2 417.9 778 418.1 779.4 423.2 776.2 426.3 773 424.8ZM743.8 393.4 746.4 389.7 751.4 393.1 750.5 396.3 747.7 397.2ZM846.4 541 851 539.7 853.8 541.5 852.2 548.3 849.5 548.8 845.9 546.1ZM806.7 353.9 814.4 353.8 812.7 361.9 808.1 362.2 804.9 357.3ZM971.5 272.7 975.5 268.5 977.2 272.5 973 275 971.9 274.5ZM607.6 568.1 608.9 566.7 613.2 566.1 614.2 571.3 609.8 573.3 607.3 570.1ZM691 250.3 692.5 248.2 696.9 248.9 696.8 256.5 694.6 257.7ZM745.2 328.2 748 328.3 750.1 331.4 746.3 334.6 745.4 334.5 742.9 331.5ZM728 542.7 728.7 541.7 733.3 543.3 730.3 550 728.9 549.1ZM704.7 249.4 709 250.7 709.5 253.2 705.9 256.2 704.6 255.9ZM762.5 345.4 763.5 349.9 761.2 351 759.2 348.9ZM902.4 576 906.6 577.3 907 581.8 903.6 581.5ZM794.9 530.9 797.4 529.6 800.4 532.9 798.2 537.5 797.4 537.7 794.2 535.2ZM696 335.4 697.5 334.2 698.9 334.5 700.5 337.3 697.7 341.1 696.3 340.5ZM822.2 294.9 825.5 293.5 829.5 296.4 829.4 299.6 822 299.6 821.3 298.3ZM696.9 282.1 701.1 279.1 702.8 279.2 705.8 283.8 702.7 287.3 698.1 285.9ZM688.2 540.1 692.5 540.1 691.4 545.2 690.6 545.5 686.9 542.9ZM907.2 244.8 909.3 242.7 913.3 244.3 913.1 249 911 250ZM728.9 487.1 732.5 488.1 729.2 489.5ZM947.1 417.1 953.1 411.8 953.6 411.8 954.5 421.6 949.2 421.1ZM882.2 302 886.5 299.2 889.6 300.5 889.7 302.6 887.4 305.4 882.7 303.9ZM910.9 523.3 915 523.7 915.6 524.5 914.6 529.7 908.5 530.9 905.9 528.2ZM748 290.5 756.1 292.5 755 296.9 748 292.6ZM605 458.8 608.2 455.1 613.1 457.9 611 465.3ZM792.6 580.8 797.1 582.9 797.1 586.8 790.3 588.6 787.6 585.6ZM607.9 366.2 610.9 366.2 612.5 368.5 609.7 372.1 605.9 371.5 605.3 370.7ZM751.8 548.4 754.6 547 758.3 550.4 757.2 553.2 752.6 554.3 751.4 553.3ZM615.9 275.9 617.5 274.8 621.3 278.3 619.4 279.5 616.1 278ZM701.4 352.5 704.8 354 704.9 356.2 699.4 357.1ZM825 447.4 829.2 444.3 832.9 445.6 833.3 446.9 831.6 450.6 827.5 451.2ZM840.8 463.9 844.8 464 845.3 466.8 843 469.3 839 468.6ZM836 217.4 842.8 217.4 842.8 220.4 838.4 221.5 835.9 218.5ZM859 431.2 862.6 429.3 866.3 430.8 861.9 437 858.5 436ZM667.4 361.1 667.9 360.1 670.6 359.5 673.2 364.4 670.6 366.6ZM680.3 548.9 681.4 548.6 685.9 551.8 685.1 556.5 679.8 554.9ZM709.9 275.7 712.2 272.7 715.2 272.9 716.8 276.6 713.7 280.4 712.8 280.3ZM904 497.5 906.4 494.5 912.2 499 911.9 500.5 905 503.1ZM927 473.3 931.9 469.7 933.8 474.2 932.6 475.8 927.1 474.4ZM749.4 382.4 752.8 379.2 757.3 379.8 760 384.5 759.8 385.1 756.2 386.9ZM818 437.8 820 433.9 823 433.9 824.1 438.4 820.5 441.1ZM970.8 306.2 972.9 304 977.5 305.8 978.2 309.9 971.5 310.6ZM659.6 583.2 662 580.3 665.4 580.5 667.9 587.1 663.7 589.9 660.2 587.8ZM694 400.9 699.4 400.3 697.6 407.2 696.8 407.3 693.1 404.3ZM963.7 458.5 964.3 458 972.5 463 964.4 467.3 963 465.8ZM791.5 478.7 792 478.7 794.9 484.2 792.3 486.4 788.9 484.7ZM656 251.9 658.1 250.6 664.1 254.2 660.6 259.3 655.3 258.8ZM711.6 261.6 714.5 259.2 718.4 260.8 718.7 261.6 716 265.2 713.1 265ZM901.4 534.7 903.1 536.5 902.6 541 897 542.3 894.9 540.1ZM648.3 237.7 650.6 236.9 655 240.3 654.5 243.7 652.2 245.1 647.8 242.9ZM715.8 473.6 717.3 472.6 722.2 474.9 722.5 475.5 721.6 478.8 716.1 479.2ZM901.1 381.9 903.8 380.8 906.4 383.8 905.5 386.6 902.6 386.8ZM851.4 556.4 854.3 555.9 856.4 557.5 856.5 564.6 855.7 565 849.4 562.3ZM943.7 241.2 944.1 241.4 945.4 246.2 940.7 248.5 939 246.9ZM872.9 505.3 874.1 502.4 881 502.2 881.9 505.7 878.3 510.6 877.7 510.6ZM947.5 363.4 953.1 364.9 953.4 372 948.9 370.9ZM653.4 389.1 658 388.4 653.9 393.8 652.8 392.7ZM736.8 353.3 737.3 352.7 742.1 355.1 741.9 359.7 739.2 360.5ZM908.9 462.7 914.3 459.6 913.9 465 909.8 466.1ZM863.3 457 866.5 454.6 868.3 462.6 866 463.2ZM656.8 227.7 662.5 228.4 663 231.7 659.4 233.8 655.8 231.1ZM745.8 534.8 749.3 534 752.3 537.6 751.9 539.7 748.2 541.5 744.1 539ZM852.9 508.2 857.2 510.5 856.4 518 853.4 518.8 851.7 517.9ZM842.5 507.7 845.1 508.2 844 516.8 841.6 517.3 838.6 515.7 838.4 515.3ZM941.1 583.2 945.3 583.2 947.4 587.9 944.2 590.7 939 587ZM890.4 526.1 893 525.7 896.6 528.5 889.3 534.6 887 532.2ZM959.4 296.3 962.3 293.8 967.5 295.9 967.8 298.1 965.4 300.5 959.8 298.9ZM716.6 248.9 719.6 246 722.8 248.1 719.8 252.9 717.2 251.9ZM850.6 217.6 856.6 217.1 856 220.6 850.7 221.9ZM921.1 314.5 924.2 313.6 926.5 319 923 323.6 919.7 322.6 918.6 320.1ZM878.6 556.3 885.3 560.2 885.1 562.2 882.2 564.5 878.5 562.9ZM868.7 373.7 875 373.9 875.6 375.6 871.4 379.7ZM836.4 554.3 841.3 552.3 843.9 554.3 841.4 561.5 839.6 562.3ZM868 304.1 873.1 302.2 874.3 302.9 875.2 306.1 871.7 310.6 868.1 308.9ZM840.1 229.1 845.6 227.8 845.6 232.5 840.7 234.4 839.3 232.2ZM808 427.8 810.4 427 813 430.5 810.9 434.3 807.6 434.5ZM705.3 562.3 705.7 561.7 711.5 561.7 712.5 564.4 709.6 567.1 705.8 565.8ZM678.9 254.9 684.2 254.2 687.1 260.1 683.9 262.5 682.3 262.4ZM717.9 326.2 720 323.9 724 324.9 720.3 329.3 719.1 329.1ZM948.1 458.8 949.3 457.9 955.7 459.5 955.3 463.8 951.8 464.2ZM641.9 356 643.2 354.6 647 355.7 647.4 358.5 645.1 359.6 642.1 357.9ZM632.7 486.3 640.7 482.3 641.2 482.6 641.5 489.7 637.1 492ZM930.2 238 935.5 234.6 937.9 235.4 933.2 241.7ZM791.4 290.1 795.8 286.2 799 290.4 798.8 291.6 792.2 293.2 791.8 292.9ZM696.6 498.2 698.4 497.5 701.8 499.6 702 502.5 696.2 504.8ZM803 326 805.4 323.6 810.8 326.9 809.8 330.6 806.6 331.2ZM614.7 443.9 619.5 444.1 619.9 444.5 618.3 451.5 611.5 448ZM644 471.4 648.6 467.6 653.6 469.7 654.7 472.8 653.9 474.3 645.9 476.4 644.7 475.5ZM885.1 258.1 891.3 258.2 893.3 261 891.5 264.9 889 265.2 884.9 260.2ZM839.9 275.7 843.6 273.3 848.8 274.7 847.9 280.3 844.5 282.2 839.7 276.4ZM905.4 322.5 911.6 323.6 912.2 324.9 908.5 328.7 904.1 326.8ZM874.1 452.7 876.4 452 880.7 454.3 875.8 460.2ZM816.8 280.8 818.9 279.8 823.2 282.9 822.6 286.3 819.8 287.5 816.3 284.2ZM928.2 337.3 932.1 338.7 932.4 343.7 929.9 346.1 925.5 342.1ZM899.5 397 901.6 394.7 906.7 394.3 909.2 397.5 909.1 399.8 907.2 401.3 899.5 399.3ZM768.8 485.1 772.2 483.7 776 487.8 775.4 488.8 768.2 489ZM728.5 515.7 728.7 515 731.1 513.7 735.6 517.3 733.9 520.7 733.4 520.8ZM769.8 496.7 774.7 496.7 775.5 499.7 770.2 501.8ZM859.3 571.9 860.7 571.1 864.4 572.5 865.4 577.3 860.1 581.1 857.8 578.2ZM752.4 339.7 755.3 337.3 757 339.9 754 343ZM756.3 480.8 757.3 480.5 761.1 483.9 760.5 487.9 756.1 488.7 754.3 484.4ZM685.4 585.9 688.9 587.3 688.8 590 683 591.8 681.7 589.9ZM893.6 447.3 897.2 447.7 896.1 454.7 893.6 455.4 889.5 452.5ZM708.7 522 710.3 520.9 713.7 522.7 713.5 526.3 712.1 527.2 708.2 525.2ZM963.1 517.8 964.4 517.7 966.4 519.3 965.3 527.5 963.7 528.2 959.7 525ZM962.9 233.2 968.7 230.7 972.1 233.7 969.2 236.2 964.4 235.4ZM889 545.2 891.5 547.9 890.9 552.5 889.3 553.5 884.4 550.7ZM779 223 783.4 221.3 785.4 222.2 786.1 226.6 783 230.5 778.3 225.5ZM806.6 292.3 811.4 290.3 814.6 293.3 814.1 295.1 807.4 295.4 806.3 293.9ZM917.9 448.5 920.1 445 923.3 444.7 927.2 448.7 924.6 452.2 919.6 452.7 918.8 452.1ZM896.3 462.8 899 462 901 463.3 902.2 467.9 895.5 470.3 895 469.8ZM782.6 241.4 784.1 239.1 790.2 244.6 788.7 245.9 783.5 244.7ZM706.9 402.5 709 402.3 711.1 404 708.7 410.4 706.9 410.5 705.2 409.2ZM827.3 320.8 833.1 317.5 837.2 321.2 837.1 322.5 831.2 325.1ZM642.7 333.1 645.7 331.1 649.2 333.7 648.8 335.6 643.2 336.8ZM660.1 566.8 663.7 562.9 667.4 564 668.4 570.8 666.5 572.7 662.8 572.6ZM677.6 356.2 682.3 355.3 683.5 357.2 680.5 361.5ZM808.8 303.2 814.9 302.8 815.5 303.9 814.6 306.5 807.9 307.8ZM785.3 415.4 786.8 413.8 793.2 416.4 793.5 419.8 790.4 422 787 421.2ZM806.5 253.3 808.9 252.8 811.8 255.3 811.5 258.9 805.6 261.1 805.1 260.7ZM881.9 396.2 885.8 394.5 891.7 397.8 891.7 400.1 885.5 400.8ZM689.1 348.8 692.5 347.3 694.7 348.4 692.4 353.8 690.5 353.6 688.5 350.5ZM791.7 345.7 798.2 346.3 800 350 797.9 353.8 792.9 354.3ZM690.1 361.4 692.8 361.7 693.6 362.6 693.2 366.4 688.7 367.7 687.1 365.6ZM764 472.3 768.1 471.1 770.5 474.1 769.9 476.2 766 477.8 762.9 475.1ZM670 225.8 672.2 222.6 674.2 222.6 677.9 225.6 678.1 230.8 674 232.7 670.8 231.1ZM928 223.8 930.1 228.9 926.1 231.5 924.4 228.1ZM843.1 411.7 848.2 408 851.3 409.8 851.6 410.9 846.7 415.1ZM944.1 255.5 950 252.6 950.6 252.9 950.7 258.1 945.3 259.2 944.2 258.2ZM661.1 467.5 665.5 461.8 669.2 463.8 670.2 469.3 661.7 469.2ZM656.7 431.2 659.6 436 655.1 438ZM853.6 253.1 855.4 251.4 862.2 253.9 861.1 256.8 857.7 257.7ZM906 359.8 911 358.9 912.9 360.8 911.2 364.7 907.9 365.6 905.3 362.9ZM627.3 447 629.9 446.7 633.9 450.4 630 454.2 626.1 452.2ZM701.2 364.7 707.2 363.7 706.9 367.3 701.9 368.7 700.9 367.8ZM954.8 340.2 960 336.3 960.5 336.4 962.3 340.1 960 344.4 954.7 342.8ZM608.8 255.3 611.6 255.2 613.3 258.5 608.5 258.3ZM809.5 499.5 811 504.5 808.9 506.5 803.6 503.6ZM891.4 382.2 891.9 382 893.2 382.5 895.4 390 894.8 390.6 890.3 388.1ZM677.9 239.5 682 237.6 684.7 239.1 686.3 243.4 684.3 246.3 677.8 247.1ZM682.2 286.3 689.3 283.9 690.7 288.2 686.4 293.5 685.5 293.4 681.4 288.3ZM951.3 350.1 959 352.3 960.1 355 956.2 357.7 950.9 356.2ZM634.9 460.2 639.5 455.8 643.2 458.1 643.7 461.5 639.3 465.1 635.4 463.1ZM685.9 528.4 689.3 526.9 694.1 531.6 693.8 532.3 688 532.3ZM774.2 464.2 778.9 462.3 781.2 464.1 781 467.5 776.2 468.8 773.8 465.7ZM858.2 496.7 865.2 495.3 867.1 498.9 865.5 502.9 861.8 504.1 857.1 501.6ZM772.1 258.7 773 257.5 774.4 257.4 777 261.8 776.3 263.3 775.9 263.4 773 262.2ZM924.5 379.6 924.6 379 929.2 376.5 934.1 380.8 934.1 381.4 927.9 385.4ZM773 509 778.9 506.7 780.1 513.2 779.6 513.9 774.6 513.1ZM745.5 451.1 749 448.8 750.9 449.4 753.2 454.6 751.7 457 750.4 457.3 745.3 453.1ZM628.8 247 630.1 245.6 634.6 248.7 633.7 250.9 630.1 250.4ZM694.8 308.6 698.6 308.9 700.4 312.8 693.6 315.6 692.1 314.9 691.9 314.3ZM763.8 293.6 769.4 294.5 770.6 297.7 764.9 299.7 762.7 298.2ZM971.3 376.2 974.4 372.6 978.4 372.2 979 372.7 977.2 384.1 976.1 384.9 975 384.6ZM755 561.7 758.6 560.9 761.5 564.6 760 567.6 758.5 568 754.6 565.7ZM909.2 509.9 914.3 507.9 916.4 510.1 914.4 515.8 912 515.5ZM971.7 487.6 974.3 487.9 976.1 492.7 974.2 496.7 971.6 497.1 966.3 493.4ZM710 586.9 713.1 584.9 714.4 585.3 715.6 591.5 714.3 593 710.1 590.5ZM762 333.4 765.2 331 769.6 333 769.1 335.1 765.2 337.2 764.3 337ZM778.6 361.6 785.4 362 784.7 366.8 777.7 367.3 777 366.4ZM937.2 533.1 942.2 533.3 942.8 538.9 938.8 541.5 935.1 537.3ZM902.3 290.2 907.5 290.9 908.4 294.8 901.8 292.3ZM763.5 220 768.2 218.4 771.3 221.3 770.7 223.8 766.9 225.5ZM888.1 225.7 890.9 221.3 893.6 221.7 894.7 226.5 892 228.7 888.3 226.6ZM751.2 260.8 754.4 260.8 754.2 263.7 752.8 264.3 750.5 261.9ZM931.6 557.7 936.6 554.8 940.9 560.1 934.6 564ZM709.4 549.3 711.7 553.9 706.7 553.9 706.4 552.5ZM660.9 477.7 661.3 477 668.4 477.1 669 482.8 664.8 485.9ZM690.5 375.3 695.9 373.7 696.9 374.7 696.6 379.4 692.9 379.7 690.2 376.4ZM833.6 332.5 839.8 329.8 842.3 332.3 841.2 337.1 835 337.9 833 335.7ZM675.4 435.3 678.1 435.8 678.7 436.6 675.7 442 672.8 441.6 671.3 439ZM723.5 296.6 725.1 296.6 728.2 301.1 726.2 303.8 721.2 303.6 720.3 301ZM629.1 279 634.1 275.2 635.4 276.3 634.6 282 633.1 282.3 629.1 279ZM886.4 246.7 891.9 244.1 893.3 245.4 890.9 250.4 886.8 250.3ZM845 321.8 851 317.8 853.1 318.8 854.2 325.6 847.9 326.9 844.8 323.7ZM679.6 399.5 682.5 396.3 685.2 396.4 686.7 398.2 685.5 402.7 683.2 403.4 680.4 402ZM767.3 371.3 770.8 371.2 771.9 372.4 770.9 377.9 766.1 379.4 764.3 376.3ZM635.2 420.5 640.8 423.3 637 428.4 633.8 425.9ZM627.2 432.1 628.5 431.7 631.1 433.7 628.7 439 625.7 439.3ZM708.4 292.7 712.3 288.1 713.4 288.2 716.7 292.7 714.3 296.1 709.1 294.9ZM962.1 430.1 963.8 430.2 966.6 432.6 966.2 440.7 965 441.6 959.9 438.3ZM609.5 405.6 610.4 404.6 618.1 409.9 618.1 410.5 615.4 412.8 610.2 411.1ZM960.7 219.7 965.4 218.8 966.2 219.5 965.8 223.4 960.3 225.8 959.2 224.1ZM700.1 263.6 701.1 263 704.1 263.8 705.9 268.1 703.3 271.4 702.8 271.4ZM961.4 410.6 962.7 409.8 970.1 412.5 963.4 422.4 962.4 422.3ZM910.9 488.1 912.6 485.9 917.4 485.9 919 491 916.6 492.6ZM708.1 460.3 709.7 459.8 713.4 463.7 713.3 465.9 711.3 467.2 709.1 466.4ZM718.3 378.4 721.4 377.8 724.7 381.7 723.8 385.1 716.8 383.6ZM929 286.8 932 285.9 936.1 291.5 928.9 291.9ZM653.8 540.7 658.6 535.6 664.7 539.8 664.7 540.2 658.8 546 654.7 544.5ZM778.4 271.5 780.7 273.8 777.7 278 776.7 276.9ZM720.3 311.8 720.6 311.3 725.4 311.6 727.1 315.6 725.8 317.3 721.8 316.3ZM949.3 397.2 950 395 954.1 393 958.8 395.5 958.5 403.2 956.5 404.4 954.2 404ZM966.6 395.5 972.8 392.1 973.5 392.3 975.7 401.8 973 405.2 966.3 402.8ZM966 573.3 967.6 571.5 976.1 574.1 973.1 582.4 968.8 582.1ZM813.4 512.9 816.6 509.9 820.5 510.9 821 511.9 816.6 517.9 813.4 515ZM708.5 235.6 715 239.6 711.3 243.2 707 242ZM825.6 228.1 831.1 224.9 832.6 226.7 832 229.1 825.9 229.5ZM783.7 452.6 787 450.6 791.2 455 791 455.5 785.8 457.8 783.5 456ZM899.1 549.8 904.8 548.5 905.7 549.5 904.4 555.5 898.7 552.5ZM664.2 551.6 669.6 546.3 672.5 548 671.9 555.6 670.2 556.7 665.5 555.4ZM792 443.1 794.1 441.3 799.5 442 799.3 447.7 796.4 449.2 791.9 444.3ZM773.3 536.5 774.6 536.4 778.6 540.1 777.1 545 775.4 545.6 773.5 544.8ZM922.1 460.3 924.4 460 926.4 464 922.7 466.8 921.7 466.1ZM872.8 246.5 876.3 244.8 878.5 246.5 879.1 251.6 871.7 249.4ZM672.2 449.4 675.5 449.9 677.4 452.8 672.3 456.6 668.7 454.7ZM886.3 459.8 888.6 461.4 887.5 467.2 881.2 467.3 880.7 466.5ZM828.2 459.2 832.4 458.4 833.8 460.4 831.5 466.3ZM650.5 378.5 654.7 377.1 656.4 378.3 656.3 380.7 651.5 381.6 650.4 380.3ZM717.1 487 720.9 486.7 721.9 492.9 720.9 493.3 717.1 490.9ZM796.9 492.7 801.1 489.1 803.1 489.3 804.9 493.1 798.3 497.7 797.4 497ZM864.2 558.6 870.8 556.6 870.7 563.2 867.4 565.3 864.3 564.1ZM935.6 221.8 939.6 219.8 941.6 223.9 939.1 227.6 937.8 227.2ZM850.8 348.8 856.4 348.9 856.5 349.4 852.4 356.8 849.5 353.6ZM629.6 394.7 634 393 635.7 395.5 634.3 399 630.8 398.4ZM923 527.3 928.9 527 930.3 529.4 927.9 534.3 924.5 534.7 922.1 531.9ZM643 278 647.6 277.2 648.8 278.7 645.8 285.3 645.2 285.4 642.2 283.3ZM865.2 587 870.1 583.5 871.5 584.1 872.8 589.8 867.1 589.5ZM618.6 238.1 619 237.3 625.9 237.3 625.8 238.9 622.8 241.9 620.6 241.7ZM868 441.9 872.3 436.3 874.6 437.2 873.4 444.8 869.9 445.8ZM926.3 270.3 931.2 277 930.7 278.1 925.8 279.7 924.4 278.8ZM786.7 505.9 793 503.5 794.7 504.8 791.8 510.2 787.5 510.2ZM741 368.1 745.1 366.9 745.8 367.3 747.3 373.7 744.3 376.5 741.7 374.9ZM781.5 348.4 784.1 348.1 785 354.1 778.3 353.8ZM861.5 542.8 863.1 542.2 866.8 543.8 868.7 549.1 861.1 551.3 859.7 550.2ZM939.9 337.9 941.8 336.5 947 340.2 946.8 343.7 940.2 342.3ZM836.7 345.5 842.7 344.7 843.6 345.8 842.1 350.8 835.6 351.6ZM923.7 512.9 927.5 512.5 929.7 515.8 928.3 519.2 921.6 519.5ZM856.4 526.1 859.3 525.3 861.1 526.3 859.8 535.1 858.8 535.4 855.7 533.5ZM795.4 428 798 426.2 800.2 427.3 799.8 434.2 796.3 433.7ZM649 483.6 654.4 482.3 657.2 488.1 652.4 491.2 649.3 489.6ZM708.6 418.3 710.2 418.2 712 419.8 711 424.9 706.1 426.1ZM838.7 453.8 839.7 451.7 846.9 453.3 847.3 454.3 846 456.2 840.3 456.1ZM822.5 307.4 830 307.4 829.9 310.4 824.2 313.6 821.9 309.4ZM852.1 461 853.5 459 855.7 459.3 859.1 467 852.9 465ZM821.8 342.7 827.5 341.2 829.2 343.2 828 349.5 820.7 349.2ZM648.5 421.6 652 417.6 653.9 418.1 655.3 423.4 653.6 424.1 648.5 421.7ZM612.1 580.8 618.4 578 620.3 579 620.7 584.7 612.7 586.7 611.4 583.8ZM732.5 308.3 734.9 305.2 735.7 305.2 738.8 310.2 737.2 312.6 734.2 312.5ZM768.7 233.2 773 231.3 777.1 235.6 776.2 237 770.5 237.1ZM916.3 432 917.8 429.5 924.2 431.7 922 437 919.7 437.2ZM967.9 333.8 971.1 330.7 975.9 332 976.4 337.6 969.3 336.6ZM784.2 264.8 789 263.3 790.3 264.4 788 269.5 787.4 269.5 783.8 265.8ZM768.7 567.5 773.1 566.6 774.8 567.8 772.4 575.4 771.3 575.3 767.3 570.5ZM851.3 421.3 856.6 416.9 857.2 417.3 858.1 422.8 855.6 424.2ZM798.6 457.5 798.8 456.7 803.1 454.5 806 456 806.9 460.5 802.9 463.3ZM822.7 373.5 823.9 373.5 828.1 380.1 826.7 382 821.3 378.8ZM804.4 237.1 807.9 240.4 806.7 245.3 803.8 246 800.1 243.7ZM758.9 460.1 759.8 458.7 763.6 458.5 766.6 462.2 766.3 463.4 762.5 464.6ZM685.1 301.2 685.8 301.2 688 304.7 685.6 309.5 679.8 307.6ZM912.1 259.3 912.7 257.8 916.8 255.9 920.6 257.8 921.8 263.1 913.6 262.2ZM667.2 522.4 672.9 523.7 674.1 525.5 667.6 532.3 661.9 528.4ZM637.1 320.3 642.1 320.4 642 324.2 638.1 326.8 635.1 325.3ZM960.8 363.9 963.2 362.3 967.6 368.5 965 371.5 961.1 371.2ZM920 499.7 924.4 496.8 925.2 497 927.9 501.8 926.7 504.7 922.4 505.2 919.6 502.1ZM958.4 322.6 959.1 321.1 964.6 320.3 965.6 325.1 961.9 328.7ZM748.7 573 750.2 572.2 753.1 573.8 750.8 580ZM856.1 443.4 860.7 444.7 862.3 448 857.4 451.7 854.5 451.3 853.9 449.8ZM917.8 347.2 919.4 347 923.6 350.9 920 355.8 919 355.9 916.6 353.5ZM628.9 258.1 633.5 258.7 633.9 259.5 632.2 262.8 627 260.3ZM619.7 357.5 621.5 357.6 622.7 362.5 619.8 364.9 617.4 362ZM914.7 218 915.5 217.2 922 218.9 918.2 223.3 915.4 222.8ZM753.8 367.1 758.3 365.4 760.3 367.8 757.7 372 754.8 371.6ZM749.6 404.8 752.7 403.8 755.3 406.3 752.6 412.3 748.7 407.2ZM801.8 281.2 806 278.3 809 280.2 808.6 282.9 804.5 284.7ZM898.5 407.1 904 408.5 903.8 413.6 899.5 415.4 898.8 414.9ZM869.4 256.9 877.1 259.2 871.2 262.9 868.5 259.3ZM975.7 418.1 979.4 421.3 977.9 426.1 971.8 426.9 970.5 425.7ZM732 292.8 734.2 289.8 740.2 291.8 740.2 293.2 736.2 297.4 735 297.4ZM615.5 296.9 618.3 295.8 620.5 297.4 618.9 300.5 617.2 300.6 615.1 297.7ZM706.9 341.7 708.2 341.9 709.7 345.5 708 346.9 704.3 345.3ZM663.9 347.6 668.2 344.7 669.8 351.7 667.1 352.3ZM754.1 223.7 755.9 222.7 760.6 230 754.6 231.5ZM784.1 390.1 786.5 389.5 791.8 393.9 785.6 398.7 782.1 395.8ZM958.8 378.8 964.1 379.2 967.2 386.3 962.7 388.7 958.3 386.4ZM864.9 472.8 866.1 471.3 872.8 469.4 873.3 469.6 875 472.1 873.4 478.7 870.2 480 864.9 474.5ZM661.5 416.3 664.1 414.3 666.1 415 667.7 418.8 667.5 419.4 662.6 420.4ZM767 271.6 770.1 269.4 770.8 269.7 769.5 273.9 767.3 273.8ZM629.6 551.8 631.9 549.9 637.2 555.3 632 558.4 629.6 556.8ZM726.5 220.3 735.8 220.5 732.7 227.5 728.8 226.5ZM756.6 524.8 757.4 524.4 762.6 526.2 763.6 529.8 757.7 531.9 755.1 528.9ZM877.4 354.9 879.2 352.1 882 352 884.5 355.1 883.5 359.4 882.1 359.8ZM872.5 487.6 876.3 486 882.5 490.2 882.8 492.8 881.8 494.3 873.7 494.6 871.5 490.5ZM656.8 497.6 662.9 493.7 665.9 500.3 661.3 504.6 657.5 503.6ZM968.4 474 975.8 470.1 977 478.4 975.5 480.2 972.4 479.9ZM913.9 386.1 918.4 384.7 920.4 388.1 914.2 391.3 912.8 389.5ZM817 497.6 821.5 495.5 824.1 498.9 821.4 503.1 818.6 502.4ZM843.2 241.8 848.9 239.6 850.8 241 850.6 245.2 847.6 248ZM617.5 308.3 619.3 308.3 621 310.7 618.3 313.6 615.8 311.5ZM914.9 288.2 917 285 919.1 284.7 921.3 286 921 292.2 915.8 292ZM721.5 522.7 723.4 521.7 726.9 525.3 725.2 527.8 721.3 526.1ZM646.9 293.1 647.4 293 650.7 295.7 650.3 300.1 646.4 301.2 644.3 299.6ZM685.7 226 692.7 222.6 694.2 226.8 687.6 231.7 685.9 230.8ZM889.1 329.6 894.5 331.1 892.3 335.5 890.3 335.6 887.8 332.4ZM754.7 324.3 757.2 320.2 760 320.2 760.5 324.8 756.9 327.5ZM627.2 526.8 631.2 525.3 635.2 527.4 635.4 533.8 632.6 536 626.6 531.6ZM649.2 308.5 653.1 307.4 655.2 309.1 655 313.2 648.4 314.1ZM876.6 340 877.6 337.7 881.6 337.1 883.8 339.9 881.4 344.2 879.2 344.3ZM796.3 330 800.2 335.6 798.6 338.5 792.7 338 792.3 335.6ZM818.7 327.6 821.5 326 826 330.9 825.4 333.7 819.7 335.2 817.3 332.8ZM911.8 407.5 913.2 406.5 918 409.2 918.4 411.6 914.4 415.7 911.5 414.1ZM848.8 474.4 850.7 472.5 856.9 474.4 850.5 479.2ZM728.4 370.3 733.3 369.5 733.8 374.7 730.2 376.1 727.4 372.8ZM903 278.6 906.3 277.8 909.8 281.8 908.8 283.2 901.8 282.3ZM628.1 578.7 632.4 576.2 638 579.1 635.8 584.7 629.3 586.3 628.6 585.8ZM960.2 272.2 963.8 274.1 964.2 275.7 961 278.1 957.8 276.1ZM891.9 319.2 897.8 320.6 896.9 323.7 890.5 321.9ZM933.8 507.9 935 505.2 939.8 504.6 941.4 510.6 936 511.1ZM820.6 587.1 826.5 586.2 828.4 588.2 823.1 593.4 819.8 589.7ZM910.7 538.4 916.4 537.3 918.4 539.6 916.9 543.5 911.4 544.2 910.2 542.9ZM952.6 445.1 954.9 444.3 960.8 448.2 960.4 451.2 959 452.2 952.4 450.6ZM604.1 538.8 606.6 537.1 611.4 539.8 611.2 544.4 607 544.8ZM751.5 280.8 758.2 282.2 757.9 284.9 751.3 283.1ZM666.4 279.9 669.3 276.8 670 276.8 674.8 283.7 674 285.8 668.4 287.3ZM911.5 231.9 913.2 230.3 917.1 231 919.5 235.8 916.9 237.4 912 235.3ZM876.5 290.4 881.1 288.7 881.9 292.9 877.5 295.7 877 295.4ZM797.8 266.8 799.8 266.5 801.4 267.7 801.7 271.7 797 275.1 795 272.8ZM948 266.6 953.7 265.4 954.4 266 954.5 266.5 950.3 273.4 947.7 271.8ZM778.7 439.6 784.2 443 780 445.7 776.3 443.4ZM779.1 287.9 783.7 290.8 783.9 292.5 777.9 294.9 776.6 291.6ZM714.9 572.9 718.2 569.9 721.7 570.8 722 571.2 720.1 576.7 717.5 578.1 715.9 577.6ZM951 562.1 955.6 559 962 563.1 962.3 565.8 959.9 568.4 954.8 568.5ZM864.4 391.7 869.8 387.8 874 394 869 396.6 866.1 395.4ZM800.9 415.2 804.2 412.2 809.7 417.2 808.9 419.3 804.6 420.7 801.3 419.1ZM948.1 228.3 952.7 228.5 954.5 231 947.5 234.3 945.6 233.4 945.2 232.6ZM939.5 404.2 943.6 402.6 946.7 407 941.2 411.9 940.5 411.7ZM892 357.4 897.3 356.2 898.4 357.5 897.7 361.1 893.2 362.6 891.1 360.9ZM706.3 331.6 709.2 328.6 710.6 328.9 711.7 331.7 709.4 334.2 707.6 333.9ZM704.6 376.1 709.4 374.7 710.9 376.1 709.6 380.3 704.4 380.1ZM844.6 524.6 846.9 524.1 848.7 525.1 848 532.5 843.6 533.6ZM664.2 378.7 668.5 376.3 670.7 380.5 665.1 383.8 664.1 382.6ZM803.2 524.3 808.9 521.5 810.7 523.1 808.4 527.9 806.6 528.2ZM882.4 437.6 884.1 437.1 887.3 442.8 883.8 447.1 881.1 445.7ZM857.3 379.7 857.8 378.6 861.9 377.7 864 382.4 860.8 384.7ZM924.1 546.7 925.7 542.5 928.9 542.1 933.7 547.5 927.1 551.3ZM815.5 242.4 819.2 241.4 822.2 247 816.6 249.1 814.3 247.1ZM768.3 306.7 773.3 305 774.3 307.6 772 311.4 768.5 311.4ZM664.1 322.3 669.3 322.2 670.3 324.4 665.9 328.2 663.7 327.1ZM913.7 334.6 918 330.2 921.6 331.3 922 332.3 918.2 339.3 915.6 339.7 914.5 338.9ZM763.8 358.4 768.3 356.3 771.1 357.1 771.6 358 769.8 363.4 766.8 363.5 763.6 359.6ZM664.2 428 667.9 427.2 669.4 430.2 666.6 432.7ZM760.8 575.4 761.3 575.3 764.2 578.9 759.7 583.9 758.1 582.7ZM932.2 391.9 937.3 388.6 942.3 393.3 941.9 394.9 935.4 397.4 933.9 396.8Z" fill="#000" stroke="#000" stroke-width="5.7" stroke-linejoin="round"/></mask></defs><filter id="mblur" x="-2%" y="-2%" width="104%" height="104%"><feGaussianBlur stdDeviation="0.6"/></filter><g clip-path="url(#mclip)" filter="url(#mblur)"><rect x="610" y="220" width="368" height="368" fill="#d0dcee" fill-opacity="0.85" mask="url(#mhalo)"/><rect x="610" y="220" width="368" height="368" fill="#7890a5" mask="url(#mcore)"/></g><path d="M629.2 199.6 L647 229.4" stroke="#e4da3a" stroke-width="3.4"/><path d="M630.8 199.2 L648.4 228.8" stroke="#7a7418" stroke-width="0.9"/><path d="M621.2 217 H642.2 L645.2 229.4 L641.4 239.2 H621.2 Z" fill="none" stroke="#18233f" stroke-width="1.5" stroke-opacity="0.9"/><rect x="420.5" y="287.5" width="18" height="17.5" fill="#ffff30" stroke="#333" stroke-width="1"/><path d="M612.6 584 V532" stroke="#14b41c" stroke-width="2"/><path d="M612.6 519 l3.2 15 h-6.4z" fill="#10a818"/><path d="M612.6 584.4 H664" stroke="#c81414" stroke-width="2"/><path d="M677.4 584.4 l-15 3.2 v-6.4z" fill="#d01010"/><circle cx="612.4" cy="584" r="3" fill="#0a0a8a"/><rect x="931.5" y="626" width="457.5" height="8.6" fill="#fff" stroke="#555" stroke-width="1"/><rect x="931.5" y="626" width="114.4" height="8.6" fill="#000"/><rect x="1160.2" y="626" width="114.4" height="8.6" fill="#000"/><defs><radialGradient id="sph" cx="0.35" cy="0.3" r="0.8"><stop offset="0" stop-color="#6cf0f0"/><stop offset="0.5" stop-color="#14b4b8"/><stop offset="1" stop-color="#0a7a80"/></radialGradient><radialGradient id="sphb" cx="0.35" cy="0.3" r="0.8"><stop offset="0" stop-color="#3a3af0"/><stop offset="0.6" stop-color="#0a0aa0"/><stop offset="1" stop-color="#04045a"/></radialGradient></defs><path d="M1811 577 V516" stroke="#0c8410" stroke-width="4.4"/><path d="M1811 498.6 l7.8 19.4 h-15.6z" fill="#0c8c12"/><path d="M1811 577.8 H1873" stroke="#c00808" stroke-width="4.4"/><path d="M1890.4 577.8 l-19.4 7.8 v-15.6z" fill="#d00c0c"/><circle cx="1810.8" cy="577.6" r="7.6" fill="url(#sphb)"/><circle cx="1848" cy="540.8" r="8.2" fill="url(#sph)"/></svg>
<div class="t" style="left:420.00px;top:192.80px;font-size:15px;line-height:18px;color:#10182c;font-weight:bold;letter-spacing:-0.214px;">A:</div>
<div class="t" style="left:440.00px;top:192.80px;font-size:15px;line-height:18px;color:#10182c;letter-spacing:0.480px;">Trabecular_Bone_Sub_Axial-Shear_Unloading</div>
<div class="t" style="left:420.00px;top:211.00px;font-size:15px;line-height:18px;color:#10182c;letter-spacing:0.469px;">Displacement</div>
<div class="t" style="left:420.00px;top:229.80px;font-size:15px;line-height:18px;color:#10182c;letter-spacing:0.132px;">Time: 3.3617 s</div>
<div class="t" style="left:420.00px;top:248.40px;font-size:15px;line-height:18px;color:#10182c;letter-spacing:0.626px;">2023/3/7</div>
<div class="t" style="left:490.00px;top:249.25px;font-size:14px;line-height:17px;color:#10182c;">上午</div>
<div class="t" style="left:523.80px;top:248.40px;font-size:15px;line-height:18px;color:#10182c;letter-spacing:-0.008px;">12:48</div>
<div class="t" style="left:446.00px;top:286.00px;font-size:15px;line-height:18px;color:#10182c;letter-spacing:0.469px;">Displacement</div>
<div class="t" style="left:446.00px;top:304.80px;font-size:15px;line-height:18px;color:#10182c;letter-spacing:0.301px;">Components: -0.17927,0.31915,Free mm</div>
<div class="t" style="left:613.00px;top:504.25px;font-size:14px;line-height:17px;color:#20d030;">Y</div>
<div class="t" style="left:679.60px;top:570.05px;font-size:14px;line-height:17px;color:#f03030;">X</div>
<div class="t" style="left:614.60px;top:570.25px;font-size:14px;line-height:17px;color:#2030e0;">Z</div>
<div class="t" style="left:918.00px;top:607.40px;font-size:15px;line-height:18px;color:#111;letter-spacing:-0.300px;">0.00</div>
<div class="t" style="left:1137.96px;top:607.40px;font-size:15px;line-height:18px;color:#111;letter-spacing:-0.300px;">150.00</div>
<div class="t" style="left:1026.78px;top:636.00px;font-size:15px;line-height:18px;color:#111;letter-spacing:-0.300px;">75.00</div>
<div class="t" style="left:1251.76px;top:636.00px;font-size:15px;line-height:18px;color:#111;letter-spacing:-0.300px;">225.00</div>
<div class="t" style="left:1366.00px;top:607.40px;font-size:15px;line-height:18px;color:#111;letter-spacing:0.361px;">300.00 (mm)</div>
<div class="t" style="left:1810.40px;top:472.65px;font-size:14px;line-height:17px;color:#20c030;">Y</div>
<div class="t" style="left:1902.20px;top:564.27px;font-size:14.5px;line-height:17px;color:#f03030;">X</div>
<div class="t" style="left:1811.40px;top:565.49px;font-size:13px;line-height:16px;color:#1818ff;font-weight:bold;">Z</div>
<div class="t" style="left:1770.80px;top:191.23px;font-size:47.5px;line-height:57px;color:#ffffff;font-weight:bold;letter-spacing:-0.995px;">Ansys</div>
<div class="t" style="left:1823.50px;top:244.66px;font-size:22.6px;line-height:27px;color:#ffffff;font-weight:bold;letter-spacing:-0.050px;">2022 R2</div>
<svg class="r" style="left:401px;top:728px;" width="799" height="235" viewBox="401 728 799 235"><path d="M485.5 758.4 H1171.0 M485.5 882.4 H1171.0" stroke="#9a9a9a" stroke-width="1.2"/><path d="M494.5 758.4 V882.4" stroke="#dcdcdc" stroke-width="1"/><path d="M663.5 758.4 V882.4" stroke="#dcdcdc" stroke-width="1"/><path d="M663.5 882.4 v6" stroke="#9a9a9a" stroke-width="1"/><path d="M832.5 758.4 V882.4" stroke="#dcdcdc" stroke-width="1"/><path d="M832.5 882.4 v6" stroke="#9a9a9a" stroke-width="1"/><path d="M1002.5 758.4 V882.4" stroke="#dcdcdc" stroke-width="1"/><path d="M1002.5 882.4 v6" stroke="#9a9a9a" stroke-width="1"/><path d="M1171.5 758.4 V882.4" stroke="#dcdcdc" stroke-width="1"/><path d="M1171.5 882.4 v6" stroke="#9a9a9a" stroke-width="1"/><path d="M1171.5 758.4 V882.4" stroke="#b4b4b4" stroke-width="1"/><path d="M485.5 812.5 h8.5" stroke="#9a9a9a" stroke-width="1"/><path d="M485.5 848.5 h8.5" stroke="#9a9a9a" stroke-width="1"/><path d="M494.0 830.0 L663.2 830.0 L832.5 758.4 L1001.8 820.4 L1171.0 882.4" fill="none" stroke="#d2141e" stroke-width="1.2"/><rect x="492.3" y="828.3" width="3.4" height="3.4" fill="#d2141e"/><rect x="661.5" y="828.3" width="3.4" height="3.4" fill="#d2141e"/><rect x="830.8" y="756.7" width="3.4" height="3.4" fill="#d2141e"/><rect x="1000.0" y="818.7" width="3.4" height="3.4" fill="#d2141e"/><rect x="1169.3" y="880.7" width="3.4" height="3.4" fill="#d2141e"/><path d="M494.0 830.0 L663.2 758.4 L832.5 758.4 L1001.8 794.2 L1171.0 830.0" fill="none" stroke="#0a8c14" stroke-width="1.2"/><rect x="492.3" y="828.3" width="3.4" height="3.4" fill="#0a8c14"/><rect x="661.5" y="756.7" width="3.4" height="3.4" fill="#0a8c14"/><rect x="830.8" y="756.7" width="3.4" height="3.4" fill="#0a8c14"/><rect x="1000.0" y="792.5" width="3.4" height="3.4" fill="#0a8c14"/><rect x="1169.3" y="828.3" width="3.4" height="3.4" fill="#0a8c14"/><rect x="1061.4" y="751" width="3.2" height="132" fill="#000"/><rect x="494.5" y="930.5" width="676" height="17" fill="#efefef" stroke="#9c9c9c" stroke-width="1"/><rect x="1002.0" y="930" width="169.5" height="18" fill="#0078d7"/><path d="M663.5 930.5 v17" stroke="#9c9c9c" stroke-width="1"/><path d="M832.5 930.5 v17" stroke="#9c9c9c" stroke-width="1"/><path d="M1002.5 930.5 v17" stroke="#9c9c9c" stroke-width="1"/></svg>
<div class="t" style="left:1062.00px;top:732.52px;font-size:13.5px;line-height:16px;color:#1a1a1a;letter-spacing:0.118px;">3.3617</div>
<div class="t" style="left:469.84px;top:752.32px;font-size:13.5px;line-height:16px;color:#1a1a1a;letter-spacing:-0.350px;">1.</div>
<div class="t" style="left:455.52px;top:806.01px;font-size:13.5px;line-height:16px;color:#1a1a1a;letter-spacing:-0.350px;">0.25</div>
<div class="t" style="left:451.38px;top:841.81px;font-size:13.5px;line-height:16px;color:#1a1a1a;letter-spacing:-0.350px;">-0.25</div>
<div class="t" style="left:429.90px;top:876.32px;font-size:13.5px;line-height:16px;color:#1a1a1a;letter-spacing:-0.350px;">-0.73205</div>
<div class="t" style="left:660.27px;top:895.72px;font-size:13.5px;line-height:16px;color:#1a1a1a;letter-spacing:-0.300px;">1.</div>
<div class="t" style="left:829.87px;top:895.72px;font-size:13.5px;line-height:16px;color:#1a1a1a;letter-spacing:-0.300px;">2.</div>
<div class="t" style="left:999.47px;top:895.72px;font-size:13.5px;line-height:16px;color:#1a1a1a;letter-spacing:-0.300px;">3.</div>
<div class="t" style="left:1160.47px;top:895.72px;font-size:13.5px;line-height:16px;color:#1a1a1a;letter-spacing:-0.300px;">4.</div>
<div class="t" style="left:574.87px;top:931.32px;font-size:13.5px;line-height:16px;color:#1a1a1a;">1</div>
<div class="t" style="left:744.12px;top:931.32px;font-size:13.5px;line-height:16px;color:#1a1a1a;">2</div>
<div class="t" style="left:913.37px;top:931.32px;font-size:13.5px;line-height:16px;color:#1a1a1a;">3</div>
<div class="t" style="left:1082.62px;top:931.32px;font-size:13.5px;line-height:16px;color:#ffffff;">4</div>
<svg class="r" style="left:1205px;top:728px;" width="715" height="235" viewBox="1205 728 715 235"><rect x="1206" y="728" width="291" height="142" fill="#ffffff"/><rect x="1206" y="728" width="291" height="22" fill="#f0f0f0"/><rect x="1206" y="728" width="64" height="142" fill="#f0f0f0"/><path d="M1223.5 728 V750" stroke="#696969" stroke-width="1.4"/><path d="M1224.7 728 V749" stroke="#ffffff" stroke-width="1"/><path d="M1269.5 728 V750" stroke="#696969" stroke-width="1.4"/><path d="M1270.7 728 V749" stroke="#ffffff" stroke-width="1"/><path d="M1331.5 728 V750" stroke="#696969" stroke-width="1.4"/><path d="M1332.7 728 V749" stroke="#ffffff" stroke-width="1"/><path d="M1414.0 728 V750" stroke="#696969" stroke-width="1.4"/><path d="M1415.2 728 V749" stroke="#ffffff" stroke-width="1"/><path d="M1496.0 728 V750" stroke="#696969" stroke-width="1.4"/><path d="M1497.2 728 V749" stroke="#ffffff" stroke-width="1"/><path d="M1206.6 728 V870" stroke="#ffffff" stroke-width="1"/><path d="M1206 750.8 H1269" stroke="#ffffff" stroke-width="1"/><path d="M1206 770.8 H1269" stroke="#ffffff" stroke-width="1"/><path d="M1206 790.8 H1269" stroke="#ffffff" stroke-width="1"/><path d="M1206 810.8 H1269" stroke="#ffffff" stroke-width="1"/><path d="M1206 830.8 H1269" stroke="#ffffff" stroke-width="1"/><path d="M1206 850.8 H1269" stroke="#ffffff" stroke-width="1"/><path d="M1206 749.6 H1497" stroke="#696969" stroke-width="1.4"/><path d="M1223.5 750 V870" stroke="#696969" stroke-width="1.4"/><path d="M1269.5 750 V870" stroke="#696969" stroke-width="1.4"/><path d="M1206 769.6 H1270" stroke="#696969" stroke-width="1.3"/><path d="M1270 769.5 H1497" stroke="#c8c8c8" stroke-width="1"/><path d="M1206 789.6 H1270" stroke="#696969" stroke-width="1.3"/><path d="M1270 789.5 H1497" stroke="#c8c8c8" stroke-width="1"/><path d="M1206 809.6 H1270" stroke="#696969" stroke-width="1.3"/><path d="M1270 809.5 H1497" stroke="#c8c8c8" stroke-width="1"/><path d="M1206 829.6 H1270" stroke="#696969" stroke-width="1.3"/><path d="M1270 829.5 H1497" stroke="#c8c8c8" stroke-width="1"/><path d="M1206 849.6 H1270" stroke="#696969" stroke-width="1.3"/><path d="M1270 849.5 H1497" stroke="#c8c8c8" stroke-width="1"/><path d="M1206 869.6 H1270" stroke="#696969" stroke-width="1.3"/><path d="M1270 869.5 H1497" stroke="#c8c8c8" stroke-width="1"/><path d="M1331.5 750 V870" stroke="#c8c8c8" stroke-width="1"/><path d="M1414.0 750 V870" stroke="#c8c8c8" stroke-width="1"/><path d="M1496.0 750 V870" stroke="#c8c8c8" stroke-width="1"/><rect x="1337.5" y="731" width="15" height="15" fill="#fff"/><path d="M1338.2 746 V731.6 H1352.5" fill="none" stroke="#6e6e6e" stroke-width="1.6"/><path d="M1341.0 738.6 l3 3.2 l5.2-6.6" fill="none" stroke="#111" stroke-width="2"/><rect x="1420.0" y="731" width="15" height="15" fill="#fff"/><path d="M1420.7 746 V731.6 H1435.0" fill="none" stroke="#6e6e6e" stroke-width="1.6"/><path d="M1423.5 738.6 l3 3.2 l5.2-6.6" fill="none" stroke="#111" stroke-width="2"/></svg>
<div class="t" style="left:1227.60px;top:730.07px;font-size:14.5px;line-height:17px;color:#1a1a1a;letter-spacing:-0.456px;">Steps</div>
<div class="t" style="left:1273.40px;top:730.07px;font-size:14.5px;line-height:17px;color:#1a1a1a;">Time [s]</div>
<div class="t" style="left:1359.60px;top:730.07px;font-size:14.5px;line-height:17px;color:#d2202a;letter-spacing:0.181px;">X [mm]</div>
<div class="t" style="left:1442.20px;top:730.07px;font-size:14.5px;line-height:17px;color:#2a9a30;letter-spacing:0.224px;">Y [mm]</div>
<div class="t" style="left:1209.40px;top:751.87px;font-size:14.5px;line-height:17px;color:#1a1a1a;">1</div>
<div class="t" style="left:1227.60px;top:751.87px;font-size:14.5px;line-height:17px;color:#1a1a1a;">1</div>
<div class="t" style="left:1273.40px;top:751.87px;font-size:14.5px;line-height:17px;color:#1a1a1a;letter-spacing:-0.300px;">0.</div>
<div class="t" style="left:1335.80px;top:751.87px;font-size:14.5px;line-height:17px;color:#1a1a1a;letter-spacing:-0.450px;">0.</div>
<div class="t" style="left:1418.40px;top:751.87px;font-size:14.5px;line-height:17px;color:#1a1a1a;letter-spacing:-0.300px;">0.</div>
<div class="t" style="left:1209.40px;top:771.87px;font-size:14.5px;line-height:17px;color:#1a1a1a;">2</div>
<div class="t" style="left:1227.60px;top:771.87px;font-size:14.5px;line-height:17px;color:#1a1a1a;">1</div>
<div class="t" style="left:1273.40px;top:771.87px;font-size:14.5px;line-height:17px;color:#1a1a1a;letter-spacing:-0.300px;">1.</div>
<div class="t" style="left:1335.80px;top:771.87px;font-size:14.5px;line-height:17px;color:#1a1a1a;letter-spacing:-0.450px;">0.</div>
<div class="t" style="left:1418.40px;top:771.87px;font-size:14.5px;line-height:17px;color:#1a1a1a;letter-spacing:-0.300px;">1.</div>
<div class="t" style="left:1209.40px;top:791.87px;font-size:14.5px;line-height:17px;color:#1a1a1a;">3</div>
<div class="t" style="left:1227.60px;top:791.87px;font-size:14.5px;line-height:17px;color:#1a1a1a;">2</div>
<div class="t" style="left:1273.40px;top:791.87px;font-size:14.5px;line-height:17px;color:#1a1a1a;letter-spacing:-0.300px;">2.</div>
<div class="t" style="left:1335.80px;top:791.87px;font-size:14.5px;line-height:17px;color:#1a1a1a;letter-spacing:-0.450px;">1.</div>
<div class="t" style="left:1418.40px;top:791.87px;font-size:14.5px;line-height:17px;color:#1a1a1a;letter-spacing:-0.300px;">1.</div>
<div class="t" style="left:1209.40px;top:811.87px;font-size:14.5px;line-height:17px;color:#1a1a1a;">4</div>
<div class="t" style="left:1227.60px;top:811.87px;font-size:14.5px;line-height:17px;color:#1a1a1a;">3</div>
<div class="t" style="left:1273.40px;top:811.87px;font-size:14.5px;line-height:17px;color:#1a1a1a;letter-spacing:-0.300px;">3.</div>
<div class="t" style="left:1335.80px;top:811.87px;font-size:14.5px;line-height:17px;color:#1a1a1a;letter-spacing:-0.450px;">0.13397</div>
<div class="t" style="left:1418.40px;top:811.87px;font-size:14.5px;line-height:17px;color:#1a1a1a;letter-spacing:-0.300px;">0.5</div>
<div class="t" style="left:1209.40px;top:831.87px;font-size:14.5px;line-height:17px;color:#1a1a1a;">5</div>
<div class="t" style="left:1227.60px;top:831.87px;font-size:14.5px;line-height:17px;color:#1a1a1a;">4</div>
<div class="t" style="left:1273.40px;top:831.87px;font-size:14.5px;line-height:17px;color:#1a1a1a;letter-spacing:-0.300px;">4.</div>
<div class="t" style="left:1335.80px;top:831.87px;font-size:14.5px;line-height:17px;color:#1a1a1a;letter-spacing:-0.450px;">-0.73205</div>
<div class="t" style="left:1418.40px;top:831.87px;font-size:14.5px;line-height:17px;color:#1a1a1a;letter-spacing:-0.300px;">0.</div>
<div class="t" style="left:1209.60px;top:854.47px;font-size:14.5px;line-height:17px;color:#1a1a1a;">*</div>
</div></body></html>
